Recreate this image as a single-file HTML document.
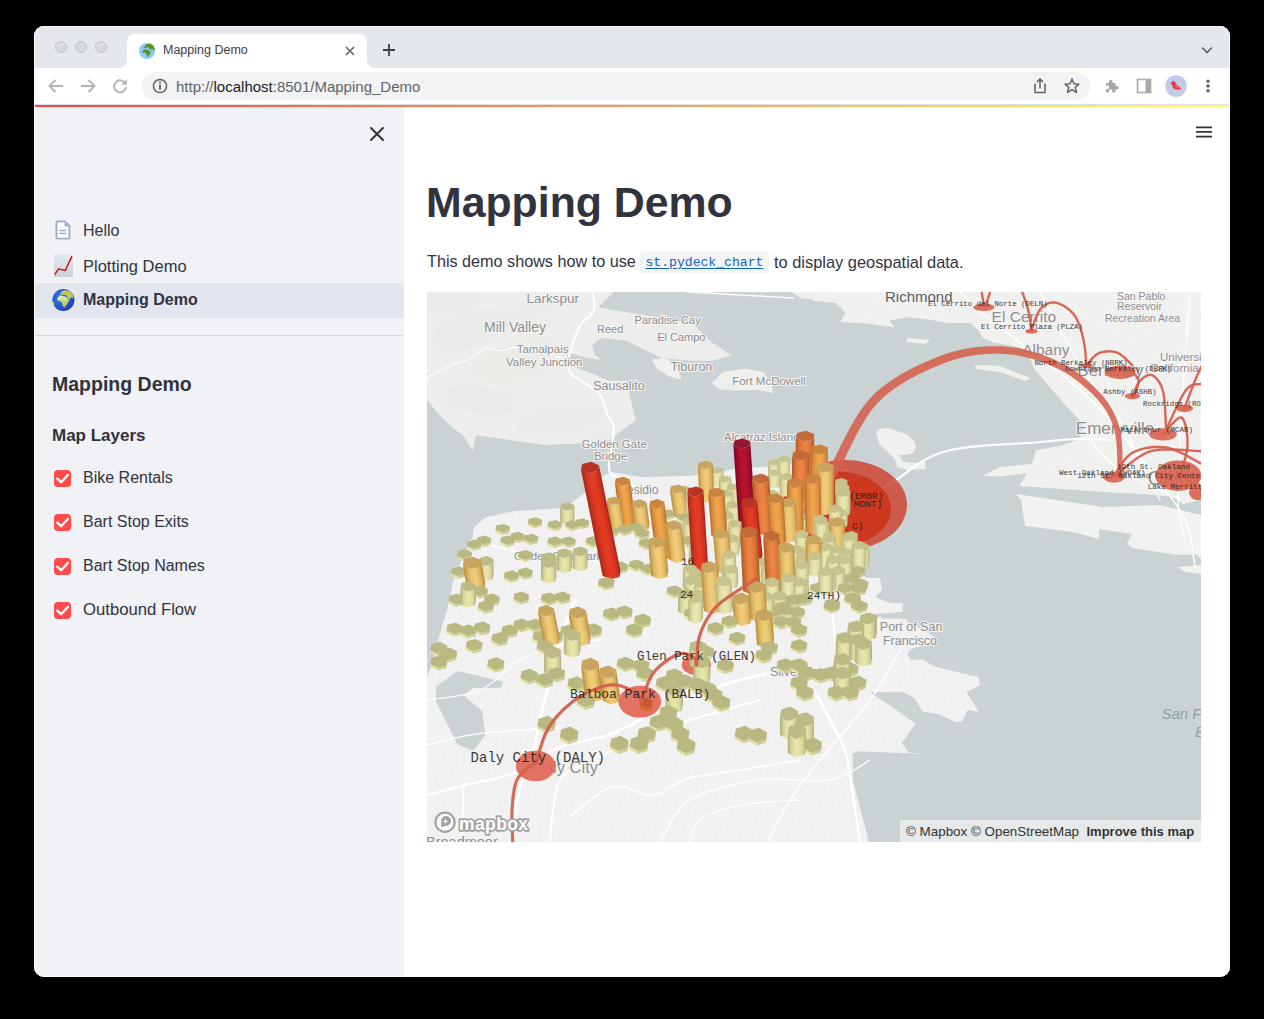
<!DOCTYPE html>
<html><head><meta charset="utf-8">
<style>
*{box-sizing:border-box;margin:0;padding:0}
html,body{width:1264px;height:1019px;overflow:hidden;background:#000;font-family:"Liberation Sans",sans-serif;position:relative}
.a{position:absolute;line-height:1;white-space:nowrap}
.b{position:absolute}
.t{color:#31333f}
.cb{position:absolute;left:54px;width:17px;height:17px;border-radius:4px;background:#ff4b4b}
.cb svg{position:absolute;left:0;top:0}
</style></head><body>
<!-- window chrome -->
<div class="b" style="left:34px;top:26px;width:1196px;height:42px;background:#e4e7eb;border-radius:10px 10px 0 0"></div>
<div class="b" style="left:117px;top:58px;width:260px;height:10px;background:#fff"></div><div class="b" style="left:34px;top:26px;width:93px;height:42px;background:#e4e7eb;border-radius:10px 0 8px 0"></div><div class="b" style="left:367px;top:26px;width:863px;height:42px;background:#e4e7eb;border-radius:0 10px 0 8px"></div><div class="b" style="left:127px;top:34px;width:240px;height:40px;background:#fff;border-radius:8px 8px 0 0"></div>
<div class="b" style="left:55px;top:41px;width:12px;height:12px;border-radius:50%;background:#d9d9db;border:1px solid #c2c2c4"></div>
<div class="b" style="left:75px;top:41px;width:12px;height:12px;border-radius:50%;background:#d9d9db;border:1px solid #c2c2c4"></div>
<div class="b" style="left:95px;top:41px;width:12px;height:12px;border-radius:50%;background:#d9d9db;border:1px solid #c2c2c4"></div>
<svg class="b" style="left:139px;top:43px" width="16" height="16" viewBox="0 0 16 16"><circle cx="8" cy="8" r="8" fill="#8ccbf5"/><path d="M3.2 8.5L4.4 7.1 6.3 6.3 9.1 7.1 11.8 9.5 10.6 11.4 9.5 13.8 8.3 13.6 7.3 11.1 6.1 9.5 4.4 9.9Z" fill="#5a9128"/><path d="M4.75 4.6L6.3 3.2 7.1 1.2 9.5 1 11.8 0.85 14.6 3 15.7 6.3 15.5 7.9 13.6 6.3 11.8 6.1 11 6.5 10.2 5.8 9.6 4.2 7.6 4.6 6.2 5.2Z" fill="#5a9128"/><circle cx="12.3" cy="7.6" r="0.7" fill="#5a9128"/></svg>
<div class="a" style="left:163px;top:44px;font-size:12.5px;color:#3c4043">Mapping Demo</div>
<svg class="b" style="left:338px;top:39px" width="24" height="24" viewBox="0 0 24 24"><path d="M8 8L16 16M16 8L8 16" stroke="#5f6368" stroke-width="1.6"/></svg>
<svg class="b" style="left:377px;top:38px" width="24" height="24" viewBox="0 0 24 24"><path d="M12 6V18M6 12H18" stroke="#3c4043" stroke-width="1.8"/></svg>
<svg class="b" style="left:1199px;top:42px" width="16" height="16" viewBox="0 0 16 16"><path d="M3 5.5L8 10.5L13 5.5" stroke="#5f6368" stroke-width="1.6" fill="none"/></svg>
<!-- toolbar -->
<div class="b" style="left:34px;top:68px;width:1196px;height:36px;background:#fff"></div>
<div class="b" style="left:142px;top:72px;width:948px;height:28px;background:#f1f3f4;border-radius:14px"></div>
<div class="a" style="left:176px;top:79px;font-size:15px;color:#5f6368">http://<span style="color:#202124">localhost</span>:8501/Mapping_Demo</div>
<svg class="b" style="left:47px;top:78px" width="18" height="16" viewBox="0 0 18 16"><path d="M16 8H3M8.5 2L2.5 8L8.5 14" stroke="#b1b4b9" stroke-width="1.9" fill="none"/></svg>
<svg class="b" style="left:79px;top:78px" width="18" height="16" viewBox="0 0 18 16"><path d="M2 8H15M9.5 2L15.5 8L9.5 14" stroke="#b1b4b9" stroke-width="1.9" fill="none"/></svg>
<svg class="b" style="left:111px;top:77px" width="18" height="18" viewBox="0 0 18 18"><path d="M14.2 6.2A6 6 0 1 0 15 10.2" stroke="#b1b4b9" stroke-width="1.9" fill="none"/><path d="M15.8 2.2V7.8H10.2Z" fill="#b1b4b9"/></svg>
<svg class="b" style="left:152px;top:78px" width="16" height="16" viewBox="0 0 16 16"><circle cx="8" cy="8" r="6.6" stroke="#5f6368" stroke-width="1.5" fill="none"/><rect x="7.1" y="6.6" width="1.8" height="5" fill="#5f6368"/><circle cx="8" cy="4.6" r="1.05" fill="#5f6368"/></svg>
<svg class="b" style="left:1032px;top:77px" width="16" height="18" viewBox="0 0 16 18"><path d="M4 7.5H3V15.5H13V7.5H12" stroke="#5f6368" stroke-width="1.5" fill="none"/><path d="M8 11.5V2.2M5 5L8 2L11 5" stroke="#5f6368" stroke-width="1.5" fill="none"/></svg>
<svg class="b" style="left:1063px;top:77px" width="18" height="18" viewBox="0 0 18 18"><path d="M9 2L11 6.8 16 7.2 12.2 10.4 13.4 15.4 9 12.7 4.6 15.4 5.8 10.4 2 7.2 7 6.8Z" stroke="#5f6368" stroke-width="1.5" fill="none" stroke-linejoin="round"/></svg>
<svg class="b" style="left:1103px;top:78px" width="18" height="16" viewBox="0 0 18 16"><path d="M3 5H6V3.5A1.8 1.8 0 0 1 9.6 3.5V5H12.5V8H14A1.8 1.8 0 0 1 14 11.6H12.5V14.5H9.4V13A1.8 1.8 0 0 0 5.8 13V14.5H3V11.2H4.4A1.8 1.8 0 0 0 4.4 7.6H3Z" fill="#a5a8ad"/></svg>
<svg class="b" style="left:1136px;top:78px" width="16" height="16" viewBox="0 0 16 16"><rect x="1.5" y="1.5" width="13" height="13" fill="none" stroke="#a5a8ad" stroke-width="1.6"/><rect x="9.5" y="1.5" width="5" height="13" fill="#a5a8ad"/></svg>
<svg class="b" style="left:1165px;top:75px" width="22" height="22" viewBox="0 0 22 22"><circle cx="11" cy="11" r="10.8" fill="#c5c9e8"/><path d="M6.5 7.2C7.5 5.8 9.5 5.8 10.4 7.4L11.2 9.6C12.6 10.8 14.6 12 16.6 14.4L14.2 14 13.6 15.2 12.4 14.2C10.6 14.8 8.6 14 7.8 12.2L7 9.2 5.4 8.4Z" fill="#e8383c"/><path d="M10.4 11C11.6 11.4 12.6 12.4 13 13.6" stroke="#ff8a70" stroke-width="1" fill="none"/></svg>
<svg class="b" style="left:1203px;top:78px" width="10" height="16" viewBox="0 0 10 16"><circle cx="5" cy="3.3" r="1.7" fill="#5f6368"/><circle cx="5" cy="8" r="1.7" fill="#5f6368"/><circle cx="5" cy="12.7" r="1.7" fill="#5f6368"/></svg>
<div class="b" style="left:34px;top:104px;width:1196px;height:1px;background:#dcdfe3"></div><div class="b" style="left:34px;top:105px;width:1196px;height:2px;background:linear-gradient(90deg,#ff4040 0%,#ffb55a 65%,#ffff70 100%)"></div>
<!-- sidebar -->
<div class="b" style="left:34px;top:107px;width:370px;height:870px;background:#f0f2f6;border-radius:0 0 0 10px"></div>
<div class="b" style="left:404px;top:107px;width:826px;height:870px;background:#fff;border-radius:0 0 10px 0"></div>
<svg class="b" style="left:369px;top:126px" width="16" height="16" viewBox="0 0 16 16"><path d="M2 2L14 14M14 2L2 14" stroke="#31333f" stroke-width="2" stroke-linecap="round"/></svg>
<div class="b" style="left:34px;top:283px;width:370px;height:35px;background:#e2e6ee"></div>
<svg class="b" style="left:55px;top:220px" width="16" height="20" viewBox="0 0 16 20"><path d="M2.6 1.4H9.8L14.4 6V17.4A1.2 1.2 0 0 1 13.2 18.6H2.6A1.2 1.2 0 0 1 1.4 17.4V2.6A1.2 1.2 0 0 1 2.6 1.4Z" fill="#fafbfd" stroke="#9cadd0" stroke-width="1.9" stroke-linejoin="round"/><path d="M9.6 1.4L14.4 6.2H9.6Z" fill="#9cadd0"/><path d="M4.3 10.5H11.2M4.3 13.5H11.2" stroke="#9cadd0" stroke-width="1.5"/></svg>
<svg class="b" style="left:54px;top:254px" width="19" height="23" viewBox="0 0 19 23"><defs><linearGradient id="cg" x1="0" y1="0" x2="0" y2="1"><stop offset="0" stop-color="#e4e9ef"/><stop offset="1" stop-color="#c9d0d7"/></linearGradient></defs><rect x="0" y="0" width="19" height="23" fill="url(#cg)"/><path d="M0.8 20.6L4.6 14.8 11.2 16.6 18 2.2" stroke="#d8f4f8" stroke-width="2.8" fill="none"/><path d="M0.8 20.6L4.6 14.8 11.2 16.6 18 2.2" stroke="#cc1414" stroke-width="1.6" fill="none"/></svg>
<svg class="b" style="left:52px;top:289px" width="24" height="24" viewBox="0 0 24 24"><defs><radialGradient id="gl" cx="0.4" cy="0.4" r="0.7"><stop offset="0" stop-color="#3b7fe6"/><stop offset="0.7" stop-color="#1f4fd0"/><stop offset="1" stop-color="#10308a"/></radialGradient><linearGradient id="af" x1="0" y1="0" x2="0" y2="1"><stop offset="0" stop-color="#f6f8c4"/><stop offset="0.45" stop-color="#b8dc88"/><stop offset="1" stop-color="#e6b038"/></linearGradient></defs><circle cx="11.4" cy="11" r="11" fill="url(#gl)"/><path d="M4.9 10L6.7 7.7 8.2 6.2 10.2 6.9 12.3 7.4 14.3 7.7 15.9 10 17.1 11.8 15.9 13.8 14.3 15.9 12.8 18.4 11.3 17.9 10.5 15.9 10 13.3 8.2 12.3 5.7 11.8Z" fill="url(#af)"/><path d="M8.2 4.4L10.2 2.1 13.3 1.3 16.4 1.8 18.9 3.1 21 6.4 21.7 9.5 19.9 8.7 18.4 8.7 17.4 11.3 15.9 9.2 14.8 6.4 12.3 5.7 9.2 5.7Z" fill="#c9c548"/><path d="M0.6 12.3L2.4 13.4 2.6 16.5 1.4 17.2Z" fill="#e0c030"/></svg>
<div class="a t" style="left:83px;top:222.5px;font-size:16px">Hello</div>
<div class="a t" style="left:83px;top:257.5px;font-size:16.5px">Plotting Demo</div>
<div class="a t" style="left:83px;top:292.2px;font-size:16px;font-weight:700">Mapping Demo</div>
<div class="b" style="left:34px;top:335px;width:370px;height:1px;background:#d5d8de"></div>
<div class="a t" style="left:52px;top:375px;font-size:19.5px;font-weight:700">Mapping Demo</div>
<div class="a t" style="left:52px;top:427.4px;font-size:17px;font-weight:700">Map Layers</div>
<div class="cb" style="top:470px"><svg width="17" height="17" viewBox="0 0 17 17"><path d="M3.2 8.6L7.2 12.2L14 4.8" stroke="#fff" stroke-width="2.4" fill="none" stroke-linecap="round" stroke-linejoin="round"/></svg></div>
<div class="cb" style="top:514px"><svg width="17" height="17" viewBox="0 0 17 17"><path d="M3.2 8.6L7.2 12.2L14 4.8" stroke="#fff" stroke-width="2.4" fill="none" stroke-linecap="round" stroke-linejoin="round"/></svg></div>
<div class="cb" style="top:558px"><svg width="17" height="17" viewBox="0 0 17 17"><path d="M3.2 8.6L7.2 12.2L14 4.8" stroke="#fff" stroke-width="2.4" fill="none" stroke-linecap="round" stroke-linejoin="round"/></svg></div>
<div class="cb" style="top:602px"><svg width="17" height="17" viewBox="0 0 17 17"><path d="M3.2 8.6L7.2 12.2L14 4.8" stroke="#fff" stroke-width="2.4" fill="none" stroke-linecap="round" stroke-linejoin="round"/></svg></div>
<div class="a t" style="left:83px;top:470.2px;font-size:16px">Bike Rentals</div>
<div class="a t" style="left:83px;top:514.2px;font-size:16px">Bart Stop Exits</div>
<div class="a t" style="left:83px;top:558.2px;font-size:16px">Bart Stop Names</div>
<div class="a t" style="left:83px;top:602px;font-size:16.7px">Outbound Flow</div>
<!-- main -->
<svg class="b" style="left:1194px;top:123px" width="20" height="18" viewBox="0 0 20 18"><path d="M2 4.3H18M2 8.95H18M2 13.6H18" stroke="#31333f" stroke-width="1.7"/></svg>
<div class="a t" style="left:426px;top:181.4px;font-size:42.8px;font-weight:700">Mapping Demo</div>
<div class="a t" style="left:427px;top:253.3px;font-size:16.2px">This demo shows how to use</div>
<div class="b" style="left:640px;top:251px;width:129px;height:22px;background:#f3f4f6;border-radius:4px"></div>
<div class="a" style="left:645.5px;top:255.5px;font-family:'Liberation Mono',monospace;font-size:13.1px;color:#0a64c8;text-decoration:underline;text-underline-offset:2px">st.pydeck_chart</div>
<div class="a t" style="left:774px;top:253.5px;font-size:16.4px">to display geospatial data.</div>
<svg class="b" style="left:427px;top:292px" width="774" height="550" viewBox="0 0 774 550">
<defs><pattern id="grid" width="6" height="5" patternUnits="userSpaceOnUse" patternTransform="rotate(-8)"><path d="M0 0H6M0 0V5" stroke="#e2e4e4" stroke-width="0.7" fill="none"/></pattern><filter id="halo" x="-10%" y="-30%" width="120%" height="160%"><feMorphology in="SourceAlpha" operator="dilate" radius="1.2" result="d"/><feFlood flood-color="#fff" flood-opacity="0.85"/><feComposite in2="d" operator="in" result="h"/><feMerge><feMergeNode in="h"/><feMergeNode in="SourceGraphic"/></feMerge></filter></defs>
<rect width="774" height="550" fill="#cad2d3"/>
<polygon points="0.0,0.0 186.8,0.0 171.5,15.3 183.7,17.8 228.1,24.8 266.1,32.5 285.0,50.5 304.6,63.4 284.7,68.9 260.2,68.6 234.5,66.1 199.0,48.4 174.5,45.9 165.3,52.7 167.8,62.8 174.5,68.0 159.2,65.8 143.9,61.2 139.3,62.8 143.9,73.5 165.9,82.1 181.9,88.8 199.6,88.8 204.5,110.8 208.8,128.6 195.9,137.8 186.8,144.5 183.7,147.6 153.1,151.6 116.3,153.1 76.5,147.0 49.0,143.3 45.9,159.2 36.7,143.9 24.5,134.7 9.2,119.4 0.0,107.2" fill="#ededeb"/>
<ellipse cx="43" cy="38" rx="40" ry="18" transform="rotate(-20 43 38)" fill="#e3e3e1" opacity="0.25"/>
<ellipse cx="93" cy="68" rx="50" ry="20" transform="rotate(-15 93 68)" fill="#e3e3e1" opacity="0.22"/>
<ellipse cx="53" cy="108" rx="35" ry="14" transform="rotate(10 53 108)" fill="#e3e3e1" opacity="0.2"/>
<ellipse cx="133" cy="128" rx="45" ry="16" transform="rotate(-10 133 128)" fill="#e3e3e1" opacity="0.18"/>
<ellipse cx="23" cy="8" rx="30" ry="12" transform="rotate(0 23 8)" fill="#e3e3e1" opacity="0.2"/>
<ellipse cx="103" cy="18" rx="30" ry="10" transform="rotate(-25 103 18)" fill="#e3e3e1" opacity="0.18"/>
<ellipse cx="173" cy="148" rx="25" ry="10" transform="rotate(0 173 148)" fill="#e3e3e1" opacity="0.15"/>
<ellipse cx="233" cy="28" rx="22" ry="8" transform="rotate(20 233 28)" fill="#e3e3e1" opacity="0.15"/>
<polygon points="225.0,67.4 238.8,65.8 251.1,76.5 254.7,87.9 241.9,84.2 229.6,76.5" fill="#efefed"/>
<polygon points="284.7,91.2 295.5,80.2 318.4,76.5 336.8,80.2 344.4,91.9 346.0,101.0 330.7,98.0 306.2,98.6 292.4,97.4" fill="#efefed"/>
<polygon points="364.3,0.0 387.0,0.0 387.0,7.7 373.5,6.1" fill="#efefed"/>
<polygon points="0.0,384.0 4.0,375.0 12.0,345.0 20.0,318.0 27.0,286.0 35.0,267.0 45.0,247.0 47.0,235.0 59.0,225.0 88.0,219.0 138.0,216.0 159.0,200.0 171.0,187.0 184.0,180.0 196.0,182.0 214.0,185.0 260.0,184.0 291.0,181.0 306.0,177.0 337.0,175.0 387.0,171.0 423.0,178.0 435.0,213.0 437.0,258.0 441.0,266.0 431.0,276.0 439.0,286.0 453.0,286.0 455.0,298.0 448.0,305.0 463.0,311.0 475.7,311.2 475.7,319.9 440.9,322.2 440.9,326.2 479.7,327.0 480.5,330.2 500.2,339.6 507.4,346.0 502.6,352.3 488.4,355.5 482.0,358.6 480.5,363.4 483.6,368.0 495.4,367.2 506.4,374.1 533.9,381.0 551.7,385.1 553.1,393.3 539.4,400.2 551.7,419.4 540.7,418.0 535.3,429.0 529.8,430.4 511.9,422.2 495.4,419.4 487.2,405.7 476.2,400.2 444.6,400.2 444.6,402.0 459.7,411.2 488.5,431.8 474.8,451.0 481.7,460.6 498.2,462.0 430.9,459.3 425.4,462.0 426.0,489.0 442.0,550.0 0.0,550.0" fill="#f2f2f2"/>
<polygon points="0.0,384.0 4.0,375.0 12.0,345.0 20.0,318.0 27.0,286.0 35.0,267.0 45.0,247.0 47.0,235.0 59.0,225.0 88.0,219.0 138.0,216.0 159.0,200.0 171.0,187.0 184.0,180.0 196.0,182.0 214.0,185.0 260.0,184.0 291.0,181.0 306.0,177.0 337.0,175.0 387.0,171.0 423.0,178.0 435.0,213.0 437.0,258.0 441.0,266.0 431.0,276.0 439.0,286.0 453.0,286.0 455.0,298.0 448.0,305.0 463.0,311.0 475.7,311.2 475.7,319.9 440.9,322.2 440.9,326.2 479.7,327.0 480.5,330.2 500.2,339.6 507.4,346.0 502.6,352.3 488.4,355.5 482.0,358.6 480.5,363.4 483.6,368.0 495.4,367.2 506.4,374.1 533.9,381.0 551.7,385.1 553.1,393.3 539.4,400.2 551.7,419.4 540.7,418.0 535.3,429.0 529.8,430.4 511.9,422.2 495.4,419.4 487.2,405.7 476.2,400.2 444.6,400.2 444.6,402.0 459.7,411.2 488.5,431.8 474.8,451.0 481.7,460.6 498.2,462.0 430.9,459.3 425.4,462.0 426.0,489.0 442.0,550.0 0.0,550.0" fill="url(#grid)" opacity="0.5"/>
<polygon points="9.2,394.4 30.6,379.1 76.5,389.8 73.5,395.9 45.9,395.9 36.7,403.6 55.1,418.9 58.2,443.4 45.9,458.7 30.6,452.6 18.4,428.1 9.2,409.7" fill="#cad2d3"/>
<polygon points="387.0,0.0 774.0,0.0 774.0,208.0 756.0,212.0 748.0,205.0 716.0,202.0 684.0,200.5 592.0,194.0 600.0,181.0 573.0,184.6 555.0,184.0 573.0,175.0 605.0,172.0 609.0,158.0 633.0,154.0 653.0,147.0 656.0,132.0 641.0,116.0 620.0,92.0 607.0,76.5 601.0,61.0 593.0,55.4 567.0,50.6 556.0,45.9 551.2,38.0 543.3,30.9 519.6,30.9 503.8,27.7 481.6,25.3 462.6,28.5 467.4,35.6 440.5,31.6 413.6,30.0 418.3,20.6 408.8,11.1 393.0,9.5 387.0,9.0" fill="#f1f1f0"/>
<polygon points="387.0,0.0 774.0,0.0 774.0,208.0 756.0,212.0 748.0,205.0 716.0,202.0 684.0,200.5 592.0,194.0 600.0,181.0 573.0,184.6 555.0,184.0 573.0,175.0 605.0,172.0 609.0,158.0 633.0,154.0 653.0,147.0 656.0,132.0 641.0,116.0 620.0,92.0 607.0,76.5 601.0,61.0 593.0,55.4 567.0,50.6 556.0,45.9 551.2,38.0 543.3,30.9 519.6,30.9 503.8,27.7 481.6,25.3 462.6,28.5 467.4,35.6 440.5,31.6 413.6,30.0 418.3,20.6 408.8,11.1 393.0,9.5 387.0,9.0" fill="url(#grid)" opacity="0.45"/>
<polygon points="589.0,202.0 676.0,215.0 732.0,213.0 774.0,223.0 774.0,267.0 769.0,262.5 748.0,262.5 705.0,256.0 700.0,251.0 705.0,242.0 672.0,237.0 672.0,247.0 646.0,240.0 598.0,234.0 594.0,208.0" fill="#f2f2f1"/>
<polygon points="751.0,275.0 774.0,273.0 774.0,282.0 758.0,280.0" fill="#f2f2f1"/>
<polygon points="449.0,141.0 453.0,137.0 462.0,136.0 481.0,143.0 488.0,150.0 489.0,156.0 486.0,161.0 479.0,163.0 472.0,163.0 475.0,169.0 485.0,171.0 498.0,170.0 499.0,177.0 481.0,178.0 470.0,175.0 468.0,167.0 453.0,153.0" fill="#f0f0ef"/>
<polygon points="548.0,73.0 573.0,74.0 603.0,86.0 598.0,89.0 573.0,80.0 549.0,77.0" fill="#f0f0ef"/>
<polygon points="481.0,46.0 503.0,48.0 498.0,52.0 479.0,50.0" fill="#f0f0ef"/>
<path d="M165.3,0.0 L165.4,0.9 L165.7,2.0 L165.9,3.4 L166.3,4.9 L166.6,6.5 L167.0,8.2 L167.2,10.0 L167.4,11.8 L167.5,13.6 L167.5,15.3 L167.3,16.9 L166.9,18.4 L166.3,19.8 L165.4,21.0 L164.4,22.2 L163.3,23.4 L162.0,24.5 L160.7,25.7 L159.3,26.8 L157.9,28.0 L156.6,29.3 L155.3,30.7 L154.1,32.1 L153.1,33.7 L152.1,35.4 L151.2,37.3 L150.3,39.3 L149.4,41.3 L148.6,43.4 L147.7,45.6 L147.0,47.7 L146.2,49.9 L145.6,52.1 L144.9,54.2 L144.4,56.2 L143.9,58.2 L143.4,60.1 L142.9,61.9 L142.3,63.8 L141.7,65.6 L141.2,67.3 L140.8,69.1 L140.5,70.8 L140.3,72.6 L140.4,74.3 L140.8,76.1 L141.4,77.8 L142.4,79.6 L143.8,81.4 L145.7,83.2 L148.0,84.9 L150.6,86.7 L153.4,88.5 L156.3,90.3 L159.2,92.1 L162.1,93.9 L164.9,95.6 L167.5,97.4 L169.7,99.2 L171.5,101.0 L173.0,102.8 L174.2,104.6 L175.2,106.5 L176.1,108.4 L176.9,110.3 L177.5,112.1 L178.0,114.0 L178.5,115.8 L179.0,117.6 L179.5,119.3 L180.0,120.9 L180.6,122.5 L181.3,123.9 L181.9,125.1 L182.6,126.2 L183.3,127.2 L183.9,128.1 L184.6,129.0 L185.1,130.0 L185.6,131.1 L186.1,132.4 L186.4,133.9 L186.7,135.7 L186.8,137.8 L186.7,140.4 L186.4,143.4 L186.0,146.7 L185.4,150.4 L184.7,154.2 L184.0,158.1 L183.4,161.9 L182.8,165.7 L182.3,169.2 L182.0,172.5 L182.0,175.3 L182.2,177.6 L182.7,179.4 L183.4,180.9 L184.3,182.0 L185.3,182.9 L186.5,183.5 L187.8,184.0 L189.1,184.4 L190.5,184.7 L191.9,185.1 L193.3,185.5 L194.7,186.1 L196.0,186.8 L197.4,187.7 L198.8,188.7 L200.4,189.7 L202.1,190.8 L203.7,191.9 L205.4,193.0 L207.0,194.0 L208.5,195.0 L209.9,195.9 L211.1,196.8 L212.2,197.5 L213.0,198.0" fill="none" stroke="#ffffff" stroke-width="2.2" stroke-linecap="round" stroke-linejoin="round" opacity="0.95" />
<path d="M260.0,0.0 L262.6,0.1 L265.8,0.3 L269.5,0.5 L273.7,0.8 L278.3,1.0 L283.1,1.3 L288.2,1.6 L293.3,1.9 L298.4,2.2 L303.5,2.5 L308.4,2.7 L313.0,3.0 L317.6,3.3 L322.6,3.5 L327.7,3.8 L332.9,4.1 L338.2,4.4 L343.3,4.7 L348.3,5.0 L353.0,5.2 L357.3,5.5 L361.1,5.7 L364.4,5.9 L367.0,6.0" fill="none" stroke="#ffffff" stroke-width="1.5" stroke-linecap="round" stroke-linejoin="round" opacity="0.95" />
<path d="M0.0,85.4 L1.2,84.8 L2.8,84.0 L4.6,83.0 L6.7,81.9 L8.9,80.7 L11.3,79.5 L13.7,78.2 L16.2,77.0 L18.6,75.8 L20.9,74.7 L23.0,73.7 L25.0,72.8 L26.8,72.1 L28.6,71.4 L30.3,70.9 L31.9,70.4 L33.6,69.9 L35.2,69.5 L36.7,69.0 L38.2,68.6 L39.7,68.2 L41.2,67.7 L42.6,67.1 L44.0,66.5 L45.4,65.8 L46.6,65.0 L47.9,64.1 L49.1,63.2 L50.2,62.2 L51.3,61.3 L52.5,60.3 L53.6,59.5 L54.8,58.7 L56.0,58.0 L57.2,57.4 L58.5,57.0 L59.9,56.8 L61.3,56.7 L62.8,56.7 L64.3,56.9 L65.8,57.1 L67.4,57.4 L68.9,57.7 L70.4,58.0 L71.9,58.3 L73.3,58.5 L74.7,58.6 L76.0,58.6 L77.2,58.5 L78.2,58.3 L79.2,58.0 L80.1,57.6 L81.0,57.3 L81.9,56.9 L82.8,56.5 L83.7,56.1 L84.7,55.9 L85.9,55.6 L87.2,55.5 L88.6,55.5 L90.2,55.6 L91.9,55.8 L93.8,56.0 L95.7,56.3 L97.7,56.7 L99.8,57.1 L101.9,57.5 L104.1,58.0 L106.3,58.5 L108.5,59.0 L110.8,59.5 L113.0,60.0 L115.3,60.6 L117.9,61.2 L120.6,61.9 L123.4,62.7 L126.2,63.5 L129.0,64.3 L131.7,65.1 L134.3,65.8 L136.7,66.5 L138.8,67.1 L140.6,67.6 L142.0,68.0" fill="none" stroke="#ffffff" stroke-width="1.1" stroke-linecap="round" stroke-linejoin="round" opacity="0.95" />
<path d="M431.0,214.0 L431.5,213.6 L432.2,213.1 L432.9,212.5 L433.7,211.9 L434.6,211.2 L435.5,210.4 L436.6,209.6 L437.7,208.8 L438.9,207.9 L440.2,207.0 L441.6,206.0 L443.0,205.0 L444.5,204.0 L445.9,203.0 L447.4,202.0 L449.0,201.0 L450.6,199.9 L452.3,198.8 L454.2,197.5 L456.2,196.2 L458.4,194.8 L460.9,193.3 L463.6,191.6 L466.6,189.8 L469.8,187.7 L473.1,185.3 L476.6,182.7 L480.3,179.9 L484.1,177.1 L488.2,174.1 L492.5,171.2 L497.1,168.4 L502.0,165.7 L507.2,163.2 L512.8,161.0 L518.7,159.2 L525.3,157.7 L532.7,156.4 L540.8,155.2 L549.3,154.3 L558.2,153.5 L567.1,152.9 L576.0,152.3 L584.7,151.8 L593.0,151.4 L600.7,150.9 L607.6,150.5 L613.6,150.0 L618.7,149.5 L623.1,149.1 L627.0,148.7 L630.3,148.4 L633.2,148.1 L635.8,147.9 L638.2,147.7 L640.5,147.5 L642.8,147.3 L645.1,147.2 L647.6,147.1 L650.3,147.0 L653.3,146.9 L656.4,146.9 L659.5,147.0 L662.7,147.1 L665.9,147.2 L668.9,147.3 L671.9,147.5 L674.7,147.6 L677.2,147.7 L679.5,147.8 L681.4,147.9 L683.0,148.0" fill="none" stroke="#ffffff" stroke-width="2.2" stroke-linecap="round" stroke-linejoin="round" opacity="0.95" />
<path d="M0.0,503.0 L2.1,502.5 L4.7,501.8 L7.7,501.0 L11.1,500.2 L14.8,499.2 L18.7,498.2 L22.8,497.2 L26.9,496.1 L31.1,495.0 L35.2,494.0 L39.2,493.0 L43.0,492.0 L46.7,491.1 L50.4,490.3 L54.1,489.5 L57.9,488.7 L61.7,488.0 L65.5,487.2 L69.2,486.3 L73.0,485.4 L76.8,484.4 L80.6,483.3 L84.3,482.0 L88.0,480.6 L91.7,479.0 L95.2,477.1 L98.8,475.1 L102.3,473.0 L105.8,470.7 L109.3,468.4 L112.8,466.1 L116.4,463.9 L120.0,461.7 L123.8,459.6 L127.6,457.6 L131.6,455.9 L135.7,454.4 L140.1,453.0 L144.6,451.7 L149.1,450.6 L153.8,449.5 L158.5,448.4 L163.1,447.4 L167.8,446.4 L172.3,445.3 L176.7,444.1 L181.0,442.9 L185.0,441.5 L188.9,440.0 L192.6,438.4 L196.3,436.7 L199.8,434.9 L203.3,433.1 L206.7,431.3 L210.0,429.4 L213.3,427.6 L216.5,425.8 L219.7,424.1 L222.9,422.5 L226.0,421.0 L229.0,419.6 L231.9,418.3 L234.5,417.0 L237.1,415.9 L239.7,414.7 L242.2,413.6 L244.8,412.5 L247.5,411.4 L250.3,410.3 L253.3,409.1 L256.5,407.8 L260.0,406.5 L263.7,405.1 L267.7,403.6 L271.8,402.0 L276.0,400.4 L280.4,398.7 L284.9,397.1 L289.5,395.5 L294.1,393.8 L298.8,392.3 L303.5,390.8 L308.3,389.3 L313.0,388.0 L317.9,386.7 L323.3,385.5 L328.9,384.3 L334.7,383.1 L340.5,381.9 L346.3,380.8 L351.9,379.8 L357.2,378.9 L362.1,378.0 L366.4,377.2 L370.1,376.6 L373.0,376.0" fill="none" stroke="#ffffff" stroke-width="2.5" stroke-linecap="round" stroke-linejoin="round" opacity="0.95" />
<path d="M144.0,523.7 L146.0,522.2 L148.5,520.2 L151.4,517.7 L154.6,514.9 L158.2,511.9 L161.9,508.9 L165.8,505.8 L169.8,502.9 L173.8,500.3 L177.7,498.0 L181.5,496.2 L185.0,495.0 L188.4,494.5 L191.9,494.5 L195.4,495.0 L198.9,495.8 L202.4,497.0 L205.9,498.2 L209.4,499.5 L212.9,500.8 L216.2,501.8 L219.6,502.6 L222.8,503.1 L226.0,503.0 L229.0,502.5 L231.9,501.6 L234.5,500.5 L237.1,499.1 L239.7,497.5 L242.2,495.9 L244.8,494.2 L247.5,492.5 L250.3,490.8 L253.3,489.3 L256.5,487.9 L260.0,486.7 L263.7,485.7 L267.7,484.8 L271.8,484.0 L276.0,483.3 L280.4,482.6 L284.9,482.0 L289.5,481.3 L294.1,480.7 L298.8,480.1 L303.5,479.4 L308.3,478.7 L313.0,478.0 L317.9,477.2 L323.3,476.3 L328.9,475.4 L334.7,474.4 L340.5,473.4 L346.3,472.5 L351.9,471.5 L357.2,470.6 L362.1,469.8 L366.4,469.1 L370.1,468.5 L373.0,468.0" fill="none" stroke="#ffffff" stroke-width="1.6" stroke-linecap="round" stroke-linejoin="round" opacity="0.95" />
<path d="M37.0,490.8 L36.9,493.8 L36.8,497.9 L36.6,502.8 L36.4,508.3 L36.2,514.3 L36.0,520.4 L35.8,526.5 L35.6,532.5 L35.4,538.0 L35.2,542.9 L35.1,547.0 L35.0,550.0" fill="none" stroke="#ffffff" stroke-width="1.5" stroke-linecap="round" stroke-linejoin="round" opacity="0.95" />
<path d="M86.0,550.0 L86.2,547.7 L86.4,544.9 L86.6,541.6 L86.9,537.8 L87.2,533.7 L87.5,529.4 L87.9,525.0 L88.3,520.4 L88.9,515.9 L89.5,511.4 L90.2,507.1 L91.0,503.0 L92.0,499.1 L93.1,495.1 L94.4,491.0 L95.8,487.0 L97.3,483.0 L98.8,478.9 L100.3,474.9 L101.9,471.0 L103.3,467.1 L104.7,463.3 L105.9,459.6 L107.0,456.0 L107.9,452.5 L108.8,449.1 L109.6,445.7 L110.3,442.4 L110.9,439.1 L111.5,435.9 L112.1,432.8 L112.6,429.7 L113.2,426.7 L113.8,423.8 L114.4,420.9 L115.0,418.0 L115.7,415.3 L116.3,412.7 L117.0,410.2 L117.6,407.8 L118.2,405.4 L118.9,403.1 L119.5,400.8 L120.2,398.4 L120.9,396.0 L121.6,393.5 L122.3,390.8 L123.0,388.0 L123.7,385.0 L124.5,381.9 L125.2,378.7 L126.0,375.4 L126.8,372.0 L127.6,368.6 L128.4,365.2 L129.2,361.7 L130.1,358.2 L131.0,354.8 L132.0,351.4 L133.0,348.0 L134.1,344.5 L135.4,340.9 L136.8,337.1 L138.2,333.2 L139.7,329.3 L141.1,325.5 L142.6,321.8 L143.9,318.4 L145.2,315.2 L146.3,312.4 L147.3,309.9 L148.0,308.0" fill="none" stroke="#ffffff" stroke-width="3.0" stroke-linecap="round" stroke-linejoin="round" opacity="0.95" />
<path d="M123.0,550.0 L123.1,548.5 L123.3,546.5 L123.4,544.2 L123.6,541.7 L123.8,538.9 L124.0,536.0 L124.3,532.9 L124.5,529.8 L124.8,526.7 L125.2,523.7 L125.6,520.7 L126.0,518.0 L126.4,515.3 L126.8,512.6 L127.1,509.8 L127.5,507.0 L127.9,504.2 L128.4,501.4 L128.9,498.6 L129.6,496.0 L130.3,493.5 L131.3,491.0 L132.4,488.8 L133.7,486.7 L135.2,484.8 L136.8,483.2 L138.6,481.7 L140.5,480.3 L142.5,479.0 L144.7,477.8 L147.0,476.7 L149.4,475.5 L152.0,474.3 L154.7,473.1 L157.5,471.8 L160.4,470.3 L163.5,468.7 L166.8,467.1 L170.2,465.4 L173.8,463.7 L177.5,462.0 L181.3,460.3 L185.2,458.5 L189.2,456.7 L193.3,455.0 L197.4,453.2 L201.6,451.4 L205.7,449.7 L209.9,448.0 L214.0,446.3 L218.2,444.5 L222.4,442.8 L226.7,441.1 L231.1,439.4 L235.6,437.7 L240.2,435.9 L244.9,434.2 L249.8,432.5 L254.8,430.7 L260.0,429.0 L265.7,427.2 L271.9,425.3 L278.6,423.3 L285.7,421.2 L292.8,419.2 L299.9,417.2 L306.8,415.3 L313.4,413.5 L319.4,411.8 L324.8,410.3 L329.4,409.0 L333.0,408.0" fill="none" stroke="#ffffff" stroke-width="2.0" stroke-linecap="round" stroke-linejoin="round" opacity="0.95" />
<path d="M387.0,398.0 L387.8,399.4 L388.8,401.3 L389.9,403.4 L391.2,405.7 L392.6,408.3 L394.1,411.1 L395.6,413.9 L397.1,416.8 L398.7,419.7 L400.2,422.6 L401.7,425.4 L403.0,428.0 L404.3,430.5 L405.7,433.0 L407.0,435.5 L408.4,438.0 L409.7,440.4 L411.1,442.9 L412.4,445.5 L413.6,448.0 L414.8,450.7 L416.0,453.4 L417.0,456.1 L418.0,459.0 L418.9,461.9 L419.6,464.9 L420.3,467.9 L420.9,470.9 L421.4,474.0 L421.9,477.2 L422.4,480.4 L422.9,483.7 L423.4,487.1 L423.9,490.7 L424.4,494.3 L425.0,498.0 L425.7,502.0 L426.4,506.5 L427.1,511.3 L427.9,516.3 L428.7,521.4 L429.4,526.4 L430.2,531.4 L430.9,536.0 L431.5,540.4 L432.1,544.2 L432.6,547.4 L433.0,550.0" fill="none" stroke="#ffffff" stroke-width="2.5" stroke-linecap="round" stroke-linejoin="round" opacity="0.95" />
<path d="M341.0,550.0 L342.0,548.0 L343.3,545.4 L344.8,542.4 L346.4,539.0 L348.2,535.4 L350.1,531.5 L352.2,527.5 L354.3,523.4 L356.4,519.3 L358.6,515.4 L360.8,511.6 L363.0,508.0 L365.2,504.7 L367.3,501.4 L369.5,498.3 L371.7,495.3 L373.9,492.2 L376.2,489.1 L378.7,486.0 L381.2,482.7 L383.9,479.4 L386.7,475.8 L389.8,472.0 L393.0,468.0 L396.5,463.7 L400.4,459.0 L404.6,454.2 L408.9,449.1 L413.4,443.9 L418.0,438.6 L422.6,433.3 L427.1,428.0 L431.4,422.8 L435.6,417.7 L439.5,412.7 L443.0,408.0 L446.3,403.3 L449.5,398.5 L452.6,393.6 L455.6,388.7 L458.4,383.9 L461.1,379.2 L463.6,374.8 L466.0,370.6 L468.1,366.8 L470.0,363.3 L471.6,360.4 L473.0,358.0" fill="none" stroke="#ffffff" stroke-width="1.5" stroke-linecap="round" stroke-linejoin="round" opacity="0.95" />
<path d="M0.0,453.0 L2.1,452.5 L4.6,451.9 L7.6,451.1 L10.9,450.2 L14.5,449.3 L18.4,448.3 L22.4,447.3 L26.6,446.3 L30.8,445.4 L34.9,444.5 L39.0,443.7 L43.0,443.0 L47.0,442.4 L51.0,441.8 L55.2,441.3 L59.5,440.9 L63.8,440.4 L68.2,440.0 L72.5,439.6 L76.8,439.3 L81.0,438.9 L85.2,438.6 L89.2,438.3 L93.0,438.0 L96.8,437.7 L100.7,437.5 L104.6,437.2 L108.6,437.0 L112.4,436.9 L116.1,436.7 L119.7,436.5 L123.0,436.4 L126.0,436.3 L128.8,436.2 L131.1,436.1 L133.0,436.0" fill="none" stroke="#ffffff" stroke-width="1.4" stroke-linecap="round" stroke-linejoin="round" opacity="0.95" />
<path d="M233.0,550.0 L234.3,547.9 L235.8,545.2 L237.5,541.9 L239.3,538.3 L241.3,534.4 L243.6,530.2 L246.1,526.1 L248.9,521.9 L252.0,517.9 L255.3,514.2 L259.0,510.9 L263.0,508.0 L267.4,505.5 L272.4,503.2 L277.7,501.0 L283.4,499.0 L289.3,497.1 L295.5,495.4 L301.8,493.8 L308.2,492.4 L314.6,491.1 L320.9,489.9 L327.0,488.9 L333.0,488.0 L338.9,487.4 L345.0,487.1 L351.2,487.1 L357.4,487.3 L363.7,487.6 L369.9,488.0 L376.0,488.4 L381.9,488.7 L387.6,488.9 L393.1,488.9 L398.2,488.6 L403.0,488.0 L407.5,487.0 L411.9,485.6 L416.0,483.9 L420.0,482.1 L423.8,480.1 L427.4,478.0 L430.7,475.9 L433.7,473.9 L436.5,472.1 L439.0,470.4 L441.2,469.0 L443.0,468.0" fill="none" stroke="#ffffff" stroke-width="1.4" stroke-linecap="round" stroke-linejoin="round" opacity="0.95" />
<path d="M0.0,408.0 L2.6,407.6 L5.9,407.1 L9.8,406.7 L14.2,406.1 L19.0,405.6 L24.0,404.9 L29.2,404.1 L34.3,403.2 L39.4,402.1 L44.3,400.9 L48.9,399.6 L53.0,398.0 L56.8,396.2 L60.4,394.0 L63.9,391.6 L67.3,388.9 L70.6,386.2 L73.8,383.3 L77.0,380.4 L80.1,377.6 L83.3,374.9 L86.5,372.4 L89.7,370.0 L93.0,368.0 L96.3,366.2 L99.7,364.5 L103.0,363.0 L106.3,361.5 L109.7,360.2 L113.0,358.9 L116.3,357.8 L119.7,356.7 L123.0,355.7 L126.3,354.7 L129.7,353.9 L133.0,353.0 L136.5,352.2 L140.1,351.5 L143.9,350.9 L147.8,350.4 L151.7,350.0 L155.5,349.6 L159.2,349.2 L162.6,348.9 L165.8,348.7 L168.6,348.4 L171.1,348.2 L173.0,348.0" fill="none" stroke="#ffffff" stroke-width="1.3" stroke-linecap="round" stroke-linejoin="round" opacity="0.95" />
<path d="M43.0,248.0 L45.4,248.6 L48.3,249.4 L51.8,250.2 L55.6,251.3 L59.8,252.4 L64.2,253.5 L68.9,254.7 L73.7,255.9 L78.6,257.0 L83.5,258.1 L88.3,259.1 L93.0,260.0 L97.6,260.8 L102.3,261.6 L107.1,262.4 L111.9,263.1 L116.8,263.8 L121.8,264.4 L126.8,265.1 L131.9,265.7 L137.1,266.3 L142.3,266.9 L147.6,267.5 L153.0,268.0 L158.7,268.5 L164.9,269.1 L171.4,269.6 L178.2,270.1 L185.0,270.5 L191.8,271.0 L198.3,271.4 L204.5,271.8 L210.2,272.2 L215.3,272.5 L219.6,272.8 L223.0,273.0" fill="none" stroke="#ffffff" stroke-width="1.2" stroke-linecap="round" stroke-linejoin="round" opacity="0.95" />
<path d="M263.0,550.0 L263.4,548.9 L263.7,547.5 L264.1,545.9 L264.5,544.0 L264.9,542.0 L265.5,539.9 L266.2,537.8 L267.1,535.6 L268.2,533.5 L269.5,531.5 L271.1,529.7 L273.0,528.0 L275.2,526.5 L277.7,525.0 L280.4,523.5 L283.4,522.1 L286.5,520.7 L289.9,519.4 L293.4,518.2 L297.1,517.0 L300.9,515.9 L304.8,514.8 L308.9,513.9 L313.0,513.0 L317.5,512.2 L322.5,511.5 L328.0,510.9 L333.7,510.4 L339.6,510.0 L345.5,509.6 L351.2,509.2 L356.7,508.9 L361.8,508.7 L366.2,508.4 L370.0,508.2 L373.0,508.0" fill="none" stroke="#ffffff" stroke-width="1.2" stroke-linecap="round" stroke-linejoin="round" opacity="0.95" />
<path d="M387.0,268.0 L387.8,269.9 L388.9,272.4 L390.1,275.2 L391.6,278.4 L393.1,281.8 L394.7,285.5 L396.3,289.3 L397.9,293.2 L399.4,297.1 L400.8,300.9 L402.0,304.5 L403.0,308.0 L403.8,311.3 L404.5,314.7 L405.0,318.0 L405.5,321.3 L405.9,324.7 L406.2,328.0 L406.5,331.3 L406.7,334.7 L407.0,338.0 L407.3,341.3 L407.6,344.7 L408.0,348.0 L408.4,351.5 L408.9,355.1 L409.4,358.9 L409.9,362.8 L410.3,366.7 L410.8,370.5 L411.3,374.2 L411.7,377.6 L412.1,380.8 L412.5,383.6 L412.8,386.1 L413.0,388.0" fill="none" stroke="#ffffff" stroke-width="1.8" stroke-linecap="round" stroke-linejoin="round" opacity="0.95" />
<path d="M453.0,325.0 L452.5,326.1 L452.0,327.5 L451.4,329.2 L450.8,331.1 L450.0,333.1 L449.2,335.2 L448.4,337.5 L447.4,339.7 L446.4,341.9 L445.4,344.1 L444.2,346.1 L443.0,348.0 L441.7,349.7 L440.2,351.4 L438.7,353.0 L437.1,354.5 L435.4,356.0 L433.6,357.6 L431.8,359.1 L430.0,360.7 L428.2,362.4 L426.4,364.1 L424.7,366.0 L423.0,368.0 L421.3,370.2 L419.4,372.8 L417.5,375.5 L415.6,378.4 L413.7,381.3 L411.8,384.2 L409.9,387.1 L408.2,389.9 L406.6,392.4 L405.2,394.6 L404.0,396.5 L403.0,398.0" fill="none" stroke="#ffffff" stroke-width="1.4" stroke-linecap="round" stroke-linejoin="round" opacity="0.95" />
<path d="M613.0,0.0 L613.9,1.8 L615.1,4.0 L616.4,6.5 L617.8,9.4 L619.4,12.5 L621.1,15.9 L622.9,19.4 L624.9,23.0 L626.8,26.8 L628.9,30.5 L630.9,34.3 L633.0,38.0 L635.1,41.8 L637.4,45.8 L639.8,49.9 L642.3,54.1 L644.8,58.5 L647.4,62.9 L650.0,67.3 L652.6,71.6 L655.3,75.9 L657.9,80.1 L660.5,84.1 L663.0,88.0 L665.5,91.7 L668.1,95.2 L670.7,98.7 L673.4,102.1 L676.0,105.4 L678.6,108.6 L681.2,111.8 L683.7,115.0 L686.2,118.2 L688.6,121.4 L690.9,124.7 L693.0,128.0 L695.0,131.3 L696.9,134.7 L698.7,138.0 L700.4,141.3 L702.0,144.7 L703.6,148.0 L705.2,151.3 L706.7,154.7 L708.2,158.0 L709.8,161.3 L711.4,164.7 L713.0,168.0 L714.7,171.5 L716.6,175.1 L718.5,178.9 L720.4,182.8 L722.3,186.7 L724.2,190.5 L726.1,194.2 L727.8,197.6 L729.4,200.8 L730.8,203.6 L732.0,206.1 L733.0,208.0" fill="none" stroke="#ffffff" stroke-width="1.5" stroke-linecap="round" stroke-linejoin="round" opacity="0.95" />
<path d="M533.0,0.0 L534.4,1.3 L536.1,3.0 L538.2,5.0 L540.4,7.2 L542.9,9.6 L545.5,12.1 L548.3,14.8 L551.1,17.5 L554.1,20.2 L557.1,22.9 L560.1,25.5 L563.0,28.0 L566.0,30.4 L569.0,32.8 L572.1,35.1 L575.2,37.5 L578.5,39.9 L581.8,42.2 L585.1,44.7 L588.6,47.2 L592.1,49.8 L595.6,52.4 L599.3,55.1 L603.0,58.0 L606.9,61.0 L611.0,64.2 L615.3,67.5 L619.7,71.0 L624.1,74.5 L628.6,78.0 L633.1,81.5 L637.4,85.0 L641.7,88.5 L645.7,91.8 L649.5,95.0 L653.0,98.0 L656.2,100.8 L659.0,103.3 L661.7,105.7 L664.1,108.0 L666.4,110.2 L668.6,112.4 L670.8,114.6 L673.0,116.9 L675.3,119.3 L677.7,122.0 L680.2,124.8 L683.0,128.0 L686.0,131.5 L689.1,135.2 L692.4,139.1 L695.8,143.2 L699.2,147.4 L702.7,151.8 L706.2,156.2 L709.7,160.6 L713.1,165.0 L716.5,169.4 L719.8,173.8 L723.0,178.0 L726.2,182.2 L729.4,186.4 L732.7,190.6 L736.0,194.8 L739.2,199.0 L742.4,203.2 L745.4,207.4 L748.4,211.6 L751.1,215.7 L753.7,219.8 L756.0,223.9 L758.0,228.0 L759.7,232.2 L761.2,236.6 L762.5,241.1 L763.6,245.6 L764.4,250.2 L765.2,254.6 L765.8,258.9 L766.3,262.9 L766.8,266.6 L767.2,269.9 L767.6,272.7 L768.0,275.0" fill="none" stroke="#ffffff" stroke-width="1.6" stroke-linecap="round" stroke-linejoin="round" opacity="0.95" />
<path d="M763.0,0.0 L762.8,3.2 L762.5,7.3 L762.1,11.9 L761.7,17.2 L761.3,22.9 L760.8,29.0 L760.3,35.4 L759.9,41.9 L759.4,48.6 L758.9,55.2 L758.4,61.7 L758.0,68.0 L757.6,74.3 L757.1,80.9 L756.7,87.6 L756.2,94.5 L755.8,101.5 L755.3,108.5 L754.9,115.5 L754.4,122.4 L754.0,129.1 L753.7,135.7 L753.3,142.0 L753.0,148.0 L752.7,153.8 L752.4,159.4 L752.1,164.9 L751.8,170.2 L751.5,175.4 L751.2,180.5 L751.0,185.4 L750.9,190.2 L750.8,194.9 L750.8,199.4 L750.8,203.8 L751.0,208.0 L751.3,212.2 L751.7,216.3 L752.3,220.3 L752.9,224.3 L753.6,228.1 L754.4,231.8 L755.1,235.2 L755.9,238.4 L756.5,241.3 L757.1,243.9 L757.6,246.1 L758.0,248.0" fill="none" stroke="#ffffff" stroke-width="1.3" stroke-linecap="round" stroke-linejoin="round" opacity="0.95" />
<path d="M663.0,148.0 L664.4,149.4 L665.9,151.3 L667.7,153.4 L669.7,155.8 L671.9,158.4 L674.2,161.1 L676.9,164.0 L679.7,166.9 L682.7,169.8 L685.9,172.7 L689.4,175.4 L693.0,178.0 L697.1,180.6 L702.0,183.3 L707.3,186.2 L713.0,189.1 L718.9,192.0 L724.9,194.9 L730.7,197.6 L736.3,200.2 L741.5,202.6 L746.1,204.7 L750.0,206.6 L753.0,208.0" fill="none" stroke="#ffffff" stroke-width="1.2" stroke-linecap="round" stroke-linejoin="round" opacity="0.95" />
<text x="99.5" y="10.7" font-family='"Liberation Sans",sans-serif' font-size="13.5" font-weight="400" fill="#8e8e8e" stroke="#f4f4f4" stroke-width="2.2" paint-order="stroke" stroke-linejoin="round" letter-spacing="0" opacity="1">Larkspur</text>
<text x="57.0" y="39.8" font-family='"Liberation Sans",sans-serif' font-size="14" font-weight="400" fill="#8e8e8e" stroke="#f4f4f4" stroke-width="2.2" paint-order="stroke" stroke-linejoin="round" letter-spacing="0" opacity="1">Mill Valley</text>
<text x="170.0" y="41.0" font-family='"Liberation Sans",sans-serif' font-size="11" font-weight="400" fill="#8e8e8e" stroke="#f4f4f4" stroke-width="2.2" paint-order="stroke" stroke-linejoin="round" letter-spacing="0" opacity="1">Reed</text>
<text x="207.6" y="31.8" font-family='"Liberation Sans",sans-serif' font-size="11" font-weight="400" fill="#8e8e8e" stroke="#f4f4f4" stroke-width="2.2" paint-order="stroke" stroke-linejoin="round" letter-spacing="0" opacity="1">Paradise Cay</text>
<text x="230.2" y="48.7" font-family='"Liberation Sans",sans-serif' font-size="11" font-weight="400" fill="#8e8e8e" stroke="#f4f4f4" stroke-width="2.2" paint-order="stroke" stroke-linejoin="round" letter-spacing="0" opacity="1">El Campo</text>
<text x="89.7" y="60.9" font-family='"Liberation Sans",sans-serif' font-size="11.5" font-weight="400" fill="#8e8e8e" stroke="#f4f4f4" stroke-width="2.2" paint-order="stroke" stroke-linejoin="round" letter-spacing="0" opacity="1">Tamalpais</text>
<text x="79.0" y="74.4" font-family='"Liberation Sans",sans-serif' font-size="11.5" font-weight="400" fill="#8e8e8e" stroke="#f4f4f4" stroke-width="2.2" paint-order="stroke" stroke-linejoin="round" letter-spacing="0" opacity="1">Valley Junction</text>
<text x="243.4" y="79.0" font-family='"Liberation Sans",sans-serif' font-size="12.5" font-weight="400" fill="#8e8e8e" stroke="#f4f4f4" stroke-width="2.2" paint-order="stroke" stroke-linejoin="round" letter-spacing="0" opacity="1">Tiburon</text>
<text x="166.2" y="98.0" font-family='"Liberation Sans",sans-serif' font-size="12.5" font-weight="400" fill="#8e8e8e" stroke="#f4f4f4" stroke-width="2.2" paint-order="stroke" stroke-linejoin="round" letter-spacing="0" opacity="1">Sausalito</text>
<text x="305.2" y="93.1" font-family='"Liberation Sans",sans-serif' font-size="11.5" font-weight="400" fill="#8e8e8e" stroke="#f4f4f4" stroke-width="2.2" paint-order="stroke" stroke-linejoin="round" letter-spacing="0" opacity="1">Fort McDowell</text>
<text x="154.6" y="156.1" font-family='"Liberation Sans",sans-serif' font-size="11.5" font-weight="400" fill="#8e8e8e" stroke="#f4f4f4" stroke-width="2.2" paint-order="stroke" stroke-linejoin="round" letter-spacing="0" opacity="1">Golden Gate</text>
<text x="166.9" y="168.4" font-family='"Liberation Sans",sans-serif' font-size="11.5" font-weight="400" fill="#8e8e8e" stroke="#f4f4f4" stroke-width="2.2" paint-order="stroke" stroke-linejoin="round" letter-spacing="0" opacity="1">Bridge</text>
<text x="297.0" y="149.1" font-family='"Liberation Sans",sans-serif' font-size="11.5" font-weight="400" fill="#8e8e8e" stroke="#f4f4f4" stroke-width="2.2" paint-order="stroke" stroke-linejoin="round" letter-spacing="0" opacity="1">Alcatraz Island</text>
<text x="188.0" y="201.5" font-family='"Liberation Sans",sans-serif' font-size="12" font-weight="400" fill="#8e8e8e" stroke="#f4f4f4" stroke-width="2.2" paint-order="stroke" stroke-linejoin="round" letter-spacing="0" opacity="1">Presidio</text>
<text x="690.0" y="7.7" font-family='"Liberation Sans",sans-serif' font-size="10.5" font-weight="400" fill="#8e8e8e" stroke="#f4f4f4" stroke-width="2.2" paint-order="stroke" stroke-linejoin="round" letter-spacing="0" opacity="1">San Pablo</text>
<text x="690.0" y="18.4" font-family='"Liberation Sans",sans-serif' font-size="10.5" font-weight="400" fill="#8e8e8e" stroke="#f4f4f4" stroke-width="2.2" paint-order="stroke" stroke-linejoin="round" letter-spacing="0" opacity="1">Reservoir</text>
<text x="677.9" y="29.7" font-family='"Liberation Sans",sans-serif' font-size="10.5" font-weight="400" fill="#8e8e8e" stroke="#f4f4f4" stroke-width="2.2" paint-order="stroke" stroke-linejoin="round" letter-spacing="0" opacity="1">Recreation Area</text>
<text x="564.6" y="29.7" font-family='"Liberation Sans",sans-serif' font-size="15.5" font-weight="400" fill="#8e8e8e" stroke="#f4f4f4" stroke-width="2.2" paint-order="stroke" stroke-linejoin="round" letter-spacing="0" opacity="1">El Cerrito</text>
<text x="595.2" y="62.8" font-family='"Liberation Sans",sans-serif' font-size="15.5" font-weight="400" fill="#8e8e8e" stroke="#f4f4f4" stroke-width="2.2" paint-order="stroke" stroke-linejoin="round" letter-spacing="0" opacity="1">Albany</text>
<text x="650.3" y="84.2" font-family='"Liberation Sans",sans-serif' font-size="17" font-weight="400" fill="#8e8e8e" stroke="#f4f4f4" stroke-width="2.2" paint-order="stroke" stroke-linejoin="round" letter-spacing="0" opacity="1">Berkeley</text>
<text x="733.0" y="68.9" font-family='"Liberation Sans",sans-serif' font-size="11.5" font-weight="400" fill="#8e8e8e" stroke="#f4f4f4" stroke-width="2.2" paint-order="stroke" stroke-linejoin="round" letter-spacing="0" opacity="1">University of</text>
<text x="723.0" y="80.2" font-family='"Liberation Sans",sans-serif' font-size="11.5" font-weight="400" fill="#8e8e8e" stroke="#f4f4f4" stroke-width="2.2" paint-order="stroke" stroke-linejoin="round" letter-spacing="0" opacity="1">California</text>
<text x="648.8" y="142.4" font-family='"Liberation Sans",sans-serif' font-size="17" font-weight="400" fill="#8e8e8e" stroke="#f4f4f4" stroke-width="2.2" paint-order="stroke" stroke-linejoin="round" letter-spacing="0" opacity="1">Emeryville</text>
<text x="720.7" y="192.9" font-family='"Liberation Sans",sans-serif' font-size="20" font-weight="400" fill="#8e8e8e" stroke="#f4f4f4" stroke-width="2.2" paint-order="stroke" stroke-linejoin="round" letter-spacing="0" opacity="1">Oakland</text>
<text x="452.8" y="339.3" font-family='"Liberation Sans",sans-serif' font-size="12.5" font-weight="400" fill="#8e8e8e" stroke="#f4f4f4" stroke-width="2.2" paint-order="stroke" stroke-linejoin="round" letter-spacing="0" opacity="1">Port of San</text>
<text x="455.9" y="353.1" font-family='"Liberation Sans",sans-serif' font-size="12.5" font-weight="400" fill="#8e8e8e" stroke="#f4f4f4" stroke-width="2.2" paint-order="stroke" stroke-linejoin="round" letter-spacing="0" opacity="1">Francisco</text>
<text x="342.9" y="383.7" font-family='"Liberation Sans",sans-serif' font-size="12.5" font-weight="400" fill="#8e8e8e" stroke="#f4f4f4" stroke-width="2.2" paint-order="stroke" stroke-linejoin="round" letter-spacing="0" opacity="1">Silver Terrace</text>
<text x="105.0" y="481.0" font-family='"Liberation Sans",sans-serif' font-size="16.5" font-weight="400" fill="#8e8e8e" stroke="#f4f4f4" stroke-width="2.2" paint-order="stroke" stroke-linejoin="round" letter-spacing="0" opacity="1">Daly City</text>
<text x="-1.0" y="555.0" font-family='"Liberation Sans",sans-serif' font-size="14.5" font-weight="400" fill="#8e8e8e" stroke="#f4f4f4" stroke-width="2.2" paint-order="stroke" stroke-linejoin="round" letter-spacing="0" opacity="1">Broadmoor</text>
<text x="87.0" y="268.0" font-family='"Liberation Sans",sans-serif' font-size="11" font-weight="400" fill="#8e8e8e" stroke="#f4f4f4" stroke-width="2.2" paint-order="stroke" stroke-linejoin="round" letter-spacing="0" opacity="1">Golden Gate Park</text>
<text x="458.0" y="9.8" font-family='"Liberation Sans",sans-serif' font-size="15" font-weight="400" fill="#5e5e5e" stroke="#f4f4f4" stroke-width="2.2" paint-order="stroke" stroke-linejoin="round" letter-spacing="0" opacity="1">Richmond</text>
<text x="734.5" y="426.6" font-family='"Liberation Sans",sans-serif' font-size="15" font-weight="400" fill="#8fa0a3" font-style="italic" letter-spacing="0" opacity="1">San Fr</text>
<text x="768.0" y="445.0" font-family='"Liberation Sans",sans-serif' font-size="15" font-weight="400" fill="#8fa0a3" font-style="italic" letter-spacing="0" opacity="1">B</text>
<ellipse cx="418.0" cy="213.0" rx="62" ry="45" fill="#cd3a26" opacity="0.78"/>
<ellipse cx="409.0" cy="217.0" rx="55" ry="38" fill="#cc3820" opacity="1"/>
<ellipse cx="108.7" cy="474.0" rx="19.9" ry="15.3" fill="#e06a5a" opacity="0.95"/>
<ellipse cx="212.8" cy="409.7" rx="21.4" ry="15.9" fill="#e06a5a" opacity="0.95"/>
<ellipse cx="269.4" cy="373.0" rx="14.7" ry="10" fill="#e06a5a" opacity="0.95"/>
<ellipse cx="556.9" cy="15.3" rx="10.7" ry="3.7" fill="#d9604c" opacity="0.9"/>
<ellipse cx="604.4" cy="39.2" rx="6.1" ry="2.4" fill="#d9604c" opacity="0.9"/>
<ellipse cx="693.2" cy="80.2" rx="15.3" ry="6.7" fill="#d9604c" opacity="0.9"/>
<ellipse cx="705.4" cy="104.1" rx="7.7" ry="3.1" fill="#d9604c" opacity="0.9"/>
<ellipse cx="757.5" cy="116.3" rx="8.6" ry="3.7" fill="#d9604c" opacity="0.9"/>
<ellipse cx="736.0" cy="142.4" rx="13.8" ry="6.1" fill="#d9604c" opacity="0.9"/>
<ellipse cx="687.0" cy="185.2" rx="10.7" ry="5.5" fill="#d9604c" opacity="0.9"/>
<ellipse cx="751.3" cy="183.7" rx="23.0" ry="15.3" fill="#d9604c" opacity="0.9"/>
<ellipse cx="771.2" cy="200.5" rx="9.2" ry="7.7" fill="#d9604c" opacity="0.9"/>
<ellipse cx="659.5" cy="73.5" rx="6.1" ry="2.4" fill="#d9604c" opacity="0.9"/>
<polygon points="403.8,201.5 404.0,200.7 404.2,199.7 404.4,198.8 404.5,198.0 404.6,197.2 404.7,196.4 404.9,195.6 405.1,194.7 405.4,193.6 405.8,192.3 406.3,190.9 406.9,189.3 407.7,187.4 408.6,185.3 409.8,182.9 411.2,180.1 412.8,177.0 414.6,173.3 416.5,169.3 418.5,165.0 420.7,160.4 423.0,155.7 425.4,150.8 427.9,145.8 430.5,140.8 433.3,135.9 436.1,131.0 439.0,126.3 442.0,121.8 445.1,117.6 448.2,113.7 451.3,110.2 454.7,107.0 458.2,103.8 462.0,100.8 465.9,97.8 469.9,95.0 474.1,92.3 478.4,89.6 482.7,87.1 487.1,84.7 491.5,82.5 495.9,80.3 500.3,78.2 504.6,76.3 508.9,74.5 513.0,72.8 517.0,71.2 520.9,69.8 524.8,68.5 528.6,67.3 532.5,66.2 536.3,65.3 540.0,64.5 543.8,63.8 547.5,63.2 551.2,62.7 554.9,62.4 558.6,62.1 562.2,61.9 565.8,61.8 569.4,61.8 573.0,61.8 576.6,61.9 580.1,62.2 583.6,62.5 587.2,63.0 590.7,63.6 594.2,64.2 597.7,65.0 601.2,65.9 604.7,66.8 608.1,67.8 611.5,68.9 614.8,70.1 618.1,71.3 621.3,72.6 624.4,73.9 627.4,75.2 630.4,76.6 633.3,78.0 636.1,79.5 638.9,81.1 641.6,82.8 644.3,84.6 646.9,86.4 649.5,88.3 652.1,90.2 654.5,92.2 656.9,94.2 659.2,96.2 661.4,98.2 663.6,100.2 665.6,102.2 667.5,104.2 669.4,106.2 671.1,108.1 672.7,110.0 674.3,111.9 675.7,113.8 677.0,115.7 678.3,117.6 679.5,119.5 680.6,121.4 681.6,123.4 682.6,125.4 683.5,127.4 684.4,129.5 685.2,131.6 686.0,133.9 686.7,136.2 687.4,138.5 688.0,141.0 688.5,143.7 688.9,146.7 689.3,149.8 689.6,153.0 689.8,156.3 690.0,159.6 690.1,162.9 690.2,166.2 690.3,169.4 690.4,172.4 690.4,175.2 690.5,177.8 690.5,180.1 690.6,182.2 690.7,183.8 695.7,183.6 695.6,182.0 695.6,180.0 695.6,177.7 695.6,175.1 695.6,172.3 695.6,169.3 695.5,166.1 695.5,162.8 695.4,159.4 695.2,156.0 695.0,152.6 694.7,149.2 694.4,146.0 694.0,142.8 693.5,139.8 692.8,137.1 692.1,134.6 691.4,132.1 690.6,129.7 689.8,127.4 688.9,125.1 687.9,122.9 686.9,120.7 685.8,118.6 684.6,116.5 683.4,114.4 682.1,112.3 680.6,110.2 679.1,108.2 677.5,106.1 675.8,104.1 674.0,102.0 672.1,99.9 670.1,97.8 668.0,95.7 665.8,93.5 663.5,91.4 661.1,89.3 658.7,87.2 656.1,85.1 653.5,83.0 650.8,81.0 648.1,79.1 645.2,77.2 642.4,75.4 639.4,73.6 636.4,72.0 633.4,70.4 630.3,68.9 627.2,67.5 623.9,66.1 620.6,64.7 617.2,63.4 613.8,62.2 610.3,61.0 606.7,59.9 603.1,58.9 599.4,57.9 595.7,57.1 592.0,56.3 588.3,55.7 584.5,55.2 580.8,54.7 577.0,54.5 573.3,54.3 569.5,54.2 565.7,54.2 561.9,54.2 558.1,54.4 554.2,54.7 550.4,55.0 546.4,55.5 542.5,56.1 538.5,56.8 534.5,57.6 530.5,58.5 526.5,59.6 522.4,60.8 518.3,62.1 514.2,63.6 510.0,65.2 505.7,66.9 501.3,68.7 496.9,70.7 492.3,72.8 487.8,75.0 483.2,77.3 478.6,79.8 474.1,82.3 469.6,85.1 465.2,87.9 460.8,90.9 456.7,94.0 452.6,97.2 448.7,100.6 445.1,104.2 441.5,108.0 438.1,112.2 434.8,116.7 431.5,121.4 428.4,126.4 425.5,131.4 422.6,136.5 419.9,141.6 417.3,146.7 414.8,151.6 412.4,156.4 410.2,161.0 408.1,165.3 406.2,169.2 404.4,172.8 402.8,175.9 401.4,178.6 400.1,181.2 399.0,183.5 398.1,185.6 397.3,187.5 396.7,189.2 396.2,190.8 395.7,192.2 395.4,193.5 395.2,194.6 395.0,195.5 394.8,196.4 394.7,197.0 394.5,197.5 394.4,197.9 394.2,198.5" fill="#d4604c" opacity="0.88"/>
<g>
<polygon points="341.1,171.6 346.4,173.6 352.5,172.3 353.3,168.9 353.3,182.6 352.5,186.0 346.4,187.3 341.1,185.3" fill="url(#g0)"/><polygon points="348.0,166.9 341.9,168.2 341.1,171.6 346.4,173.6 352.5,172.3 353.3,168.9" fill="#c6c38d"/>
<polygon points="350.9,168.5 356.2,170.6 362.3,169.3 363.1,165.9 363.1,185.7 362.3,189.0 356.2,190.4 350.9,188.3" fill="url(#g1)"/><polygon points="357.8,163.8 351.7,165.2 350.9,168.5 356.2,170.6 362.3,169.3 363.1,165.9" fill="#c6c38d"/>
<polygon points="284.1,179.5 289.5,181.6 295.7,180.3 296.5,176.8 296.5,190.3 295.7,193.7 289.5,195.1 284.1,193.0" fill="url(#g2)"/><polygon points="291.1,174.7 284.9,176.1 284.1,179.5 289.5,181.6 295.7,180.3 296.5,176.8" fill="#c6c38d"/>
<polygon points="341.0,182.2 346.4,184.3 352.6,182.9 353.4,179.5 353.4,191.6 352.6,195.1 346.4,196.4 341.0,194.3" fill="url(#g3)"/><polygon points="348.0,177.4 341.8,178.7 341.0,182.2 346.4,184.3 352.6,182.9 353.4,179.5" fill="#c6c38d"/>
<polygon points="291.8,188.3 297.3,190.5 303.5,189.1 304.4,185.5 304.4,197.3 303.5,200.8 297.3,202.2 291.8,200.1" fill="url(#g4)"/><polygon points="298.9,183.4 292.7,184.8 291.8,188.3 297.3,190.5 303.5,189.1 304.4,185.5" fill="#c6c38d"/>
<polygon points="250.0,199.2 256.0,201.5 256.0,203.6 250.0,201.3" fill="#e3e1a2"/><polygon points="256.0,201.5 262.8,200.0 262.8,202.1 256.0,203.6" fill="#cfcd94"/><polygon points="262.8,200.0 263.8,196.1 263.8,198.2 262.8,202.1" fill="#a9a774"/><polygon points="257.8,193.8 251.0,195.3 250.0,199.2 256.0,201.5 262.8,200.0 263.8,196.1" fill="#b9b881"/>
<polygon points="407.9,191.1 413.4,193.2 419.6,191.8 420.5,188.3 420.5,199.1 419.6,202.7 413.4,204.1 407.9,201.9" fill="url(#g5)"/><polygon points="415.0,186.1 408.8,187.5 407.9,191.1 413.4,193.2 419.6,191.8 420.5,188.3" fill="#c6c38d"/>
<polygon points="352.7,185.7 358.2,187.9 364.4,186.5 365.3,182.9 365.3,199.9 364.4,203.4 358.2,204.8 352.7,202.7" fill="url(#g6)"/><polygon points="359.8,180.8 353.6,182.2 352.7,185.7 358.2,187.9 364.4,186.5 365.3,182.9" fill="#c6c38d"/>
<polygon points="368.8,146.1 376.8,149.3 386.0,147.2 387.2,141.9 387.2,203.9 386.0,209.2 376.8,211.3 368.8,208.1" fill="url(#g7)"/><polygon points="379.2,138.7 370.0,140.8 368.8,146.1 376.8,149.3 386.0,147.2 387.2,141.9" fill="#c26a38"/>
<polygon points="299.7,196.3 305.2,198.5 311.5,197.1 312.3,193.5 312.3,204.9 311.5,208.5 305.2,209.9 299.7,207.7" fill="url(#g8)"/><polygon points="306.8,191.3 300.5,192.7 299.7,196.3 305.2,198.5 311.5,197.1 312.3,193.5" fill="#c6c38d"/>
<polygon points="271.0,174.7 277.5,177.3 285.0,175.6 286.0,171.3 287.0,204.8 286.0,209.1 278.5,210.8 272.0,208.2" fill="url(#g9)"/><polygon points="279.5,168.7 272.0,170.4 271.0,174.7 277.5,177.3 285.0,175.6 286.0,171.3" fill="#c9a45f"/>
<polygon points="409.9,196.9 415.4,199.1 421.7,197.7 422.5,194.0 422.5,205.1 421.7,208.7 415.4,210.2 409.9,208.0" fill="url(#g10)"/><polygon points="417.0,191.8 410.7,193.3 409.9,196.9 415.4,199.1 421.7,197.7 422.5,194.0" fill="#c6c38d"/>
<polygon points="365.1,165.3 372.6,168.3 381.2,166.3 382.3,161.3 381.6,212.0 380.5,217.0 371.9,219.0 364.4,216.0" fill="url(#g11)"/><polygon points="374.8,158.3 366.2,160.3 365.1,165.3 372.6,168.3 381.2,166.3 382.3,161.3" fill="#c26a38"/>
<polygon points="383.8,159.4 391.3,162.4 399.9,160.4 401.0,155.4 399.6,216.0 398.5,221.0 389.9,223.0 382.4,220.0" fill="url(#g12)"/><polygon points="393.5,152.4 384.9,154.4 383.8,159.4 391.3,162.4 399.9,160.4 401.0,155.4" fill="#c8843f"/>
<polygon points="389.6,177.0 397.1,180.0 405.7,178.0 406.8,173.0 406.8,216.3 405.7,221.3 397.1,223.3 389.6,220.3" fill="url(#g13)"/><polygon points="399.3,170.0 390.7,172.0 389.6,177.0 397.1,180.0 405.7,178.0 406.8,173.0" fill="#c9a45f"/>
<polygon points="338.8,203.0 344.4,205.3 350.8,203.8 351.6,200.1 351.6,217.8 350.8,221.5 344.4,223.0 338.8,220.7" fill="url(#g14)"/><polygon points="346.0,197.8 339.6,199.3 338.8,203.0 344.4,205.3 350.8,203.8 351.6,200.1" fill="#c6c38d"/>
<polygon points="293.7,202.9 299.3,205.1 305.7,203.7 306.5,199.9 306.5,217.9 305.7,221.7 299.3,223.2 293.7,220.9" fill="url(#g15)"/><polygon points="300.9,197.6 294.5,199.1 293.7,202.9 299.3,205.1 305.7,203.7 306.5,199.9" fill="#c6c38d"/>
<polygon points="251.2,219.2 257.3,221.7 257.3,223.9 251.2,221.4" fill="#e3e1a2"/><polygon points="257.3,221.7 264.3,220.1 264.3,222.3 257.3,223.9" fill="#cfcd94"/><polygon points="264.3,220.1 265.2,216.0 265.2,218.2 264.3,222.3" fill="#a9a774"/><polygon points="259.1,213.5 252.1,215.1 251.2,219.2 257.3,221.7 264.3,220.1 265.2,216.0" fill="#b9b881"/>
<polygon points="408.4,202.3 414.9,205.0 422.4,203.3 423.4,198.9 423.4,218.5 422.4,222.9 414.9,224.6 408.4,221.9" fill="url(#g16)"/><polygon points="416.9,196.2 409.4,197.9 408.4,202.3 414.9,205.0 422.4,203.3 423.4,198.9" fill="#c6c38d"/>
<polygon points="223.7,221.1 229.9,223.6 229.9,225.9 223.7,223.3" fill="#e3e1a2"/><polygon points="229.9,223.6 236.9,222.0 236.9,224.2 229.9,225.9" fill="#cfcd94"/><polygon points="236.9,222.0 237.9,217.9 237.9,220.1 236.9,224.2" fill="#a9a774"/><polygon points="231.7,215.3 224.7,217.0 223.7,221.1 229.9,223.6 236.9,222.0 237.9,217.9" fill="#b9b881"/>
<polygon points="242.9,198.7 249.4,201.4 256.9,199.7 257.9,195.3 261.8,220.9 260.8,225.3 253.3,227.0 246.8,224.3" fill="url(#g17)"/><polygon points="251.4,192.6 243.9,194.3 242.9,198.7 249.4,201.4 256.9,199.7 257.9,195.3" fill="#c9a45f"/>
<polygon points="380.1,207.6 385.6,209.9 392.1,208.4 392.9,204.6 392.9,221.2 392.1,225.0 385.6,226.5 380.1,224.2" fill="url(#g18)"/><polygon points="387.4,202.3 380.9,203.8 380.1,207.6 385.6,209.9 392.1,208.4 392.9,204.6" fill="#c6c38d"/>
<polygon points="233.5,223.1 239.7,225.7 239.7,227.9 233.5,225.4" fill="#e3e1a2"/><polygon points="239.7,225.7 246.7,224.0 246.7,226.2 239.7,227.9" fill="#cfcd94"/><polygon points="246.7,224.0 247.7,219.8 247.7,222.1 246.7,226.2" fill="#a9a774"/><polygon points="241.5,217.3 234.5,219.0 233.5,223.1 239.7,225.7 246.7,224.0 247.7,219.8" fill="#b9b881"/>
<polygon points="364.3,212.6 369.9,214.9 376.4,213.4 377.3,209.6 377.3,224.0 376.4,227.9 369.9,229.4 364.3,227.0" fill="url(#g19)"/><polygon points="371.7,207.2 365.2,208.7 364.3,212.6 369.9,214.9 376.4,213.4 377.3,209.6" fill="#c6c38d"/>
<polygon points="258.3,211.9 263.9,214.2 270.4,212.7 271.3,208.9 271.3,224.7 270.4,228.6 263.9,230.1 258.3,227.7" fill="url(#g20)"/><polygon points="265.7,206.5 259.2,208.0 258.3,211.9 263.9,214.2 270.4,212.7 271.3,208.9" fill="#c6c38d"/>
<polygon points="249.8,226.6 256.0,229.2 256.0,231.4 249.8,228.9" fill="#e3e1a2"/><polygon points="256.0,229.2 263.1,227.5 263.1,229.8 256.0,231.4" fill="#cfcd94"/><polygon points="263.1,227.5 264.0,223.3 264.0,225.6 263.1,229.8" fill="#a9a774"/><polygon points="257.8,220.8 250.7,222.4 249.8,226.6 256.0,229.2 263.1,227.5 264.0,223.3" fill="#b9b881"/>
<polygon points="133.2,216.3 139.4,218.8 146.4,217.2 147.4,212.9 147.4,227.1 146.4,231.3 139.4,233.0 133.2,230.5" fill="url(#g21)"/><polygon points="141.2,210.4 134.2,212.1 133.2,216.3 139.4,218.8 146.4,217.2 147.4,212.9" fill="#bdbb85"/>
<polygon points="383.9,222.3 389.5,224.7 396.1,223.1 396.9,219.2 396.9,229.9 396.1,233.8 389.5,235.4 383.9,233.0" fill="url(#g22)"/><polygon points="391.3,216.8 384.7,218.4 383.9,222.3 389.5,224.7 396.1,223.1 396.9,219.2" fill="#c6c38d"/>
<polygon points="100.8,231.2 107.1,233.8 107.1,236.0 100.8,233.4" fill="#e3e1a2"/><polygon points="107.1,233.8 114.2,232.1 114.2,234.3 107.1,236.0" fill="#cfcd94"/><polygon points="114.2,232.1 115.2,227.8 115.2,230.0 114.2,234.3" fill="#a9a774"/><polygon points="108.9,225.2 101.8,226.9 100.8,231.2 107.1,233.8 114.2,232.1 115.2,227.8" fill="#b9b881"/>
<polygon points="299.5,214.1 305.1,216.5 311.6,215.0 312.5,211.1 312.5,230.3 311.6,234.1 305.1,235.7 299.5,233.3" fill="url(#g23)"/><polygon points="306.9,208.7 300.4,210.3 299.5,214.1 305.1,216.5 311.6,215.0 312.5,211.1" fill="#c6c38d"/>
<polygon points="407.7,222.3 413.3,224.7 419.9,223.1 420.7,219.2 420.7,230.7 419.9,234.6 413.3,236.2 407.7,233.8" fill="url(#g24)"/><polygon points="415.1,216.8 408.5,218.4 407.7,222.3 413.3,224.7 419.9,223.1 420.7,219.2" fill="#c6c38d"/>
<polygon points="187.9,191.0 194.4,193.7 201.9,191.9 202.9,187.4 208.8,230.6 207.8,235.1 200.3,236.9 193.8,234.2" fill="url(#g25)"/><polygon points="196.4,184.7 188.9,186.5 187.9,191.0 194.4,193.7 201.9,191.9 202.9,187.4" fill="#c8843f"/>
<polygon points="147.8,232.2 154.1,234.8 154.1,237.0 147.8,234.4" fill="#e3e1a2"/><polygon points="154.1,234.8 161.2,233.1 161.2,235.3 154.1,237.0" fill="#cfcd94"/><polygon points="161.2,233.1 162.2,228.8 162.2,231.0 161.2,235.3" fill="#a9a774"/><polygon points="155.9,226.2 148.8,227.9 147.8,232.2 154.1,234.8 161.2,233.1 162.2,228.8" fill="#b9b881"/>
<polygon points="179.7,210.4 185.7,212.9 192.6,211.3 193.5,207.2 197.4,232.8 196.5,236.9 189.6,238.5 183.6,236.0" fill="url(#g26)"/><polygon points="187.5,204.7 180.6,206.3 179.7,210.4 185.7,212.9 192.6,211.3 193.5,207.2" fill="#c9a45f"/>
<polygon points="204.6,213.6 211.1,216.3 218.6,214.5 219.6,210.0 222.5,232.6 221.5,237.1 214.0,238.9 207.5,236.2" fill="url(#g27)"/><polygon points="213.1,207.3 205.6,209.1 204.6,213.6 211.1,216.3 218.6,214.5 219.6,210.0" fill="#c9a45f"/>
<polygon points="120.4,234.1 126.6,236.7 126.6,238.9 120.4,236.3" fill="#e3e1a2"/><polygon points="126.6,236.7 133.8,235.0 133.8,237.2 126.6,238.9" fill="#cfcd94"/><polygon points="133.8,235.0 134.8,230.7 134.8,232.9 133.8,237.2" fill="#a9a774"/><polygon points="128.6,228.1 121.4,229.8 120.4,234.1 126.6,236.7 133.8,235.0 134.8,230.7" fill="#b9b881"/>
<polygon points="138.0,234.1 144.2,236.7 144.2,238.9 138.0,236.3" fill="#e3e1a2"/><polygon points="144.2,236.7 151.4,235.0 151.4,237.2 144.2,238.9" fill="#cfcd94"/><polygon points="151.4,235.0 152.4,230.7 152.4,232.9 151.4,237.2" fill="#a9a774"/><polygon points="146.2,228.1 139.0,229.8 138.0,234.1 144.2,236.7 151.4,235.0 152.4,230.7" fill="#b9b881"/>
<polygon points="368.1,226.3 373.8,228.7 380.4,227.1 381.3,223.2 381.3,233.9 380.4,237.9 373.8,239.4 368.1,237.0" fill="url(#g28)"/><polygon points="375.6,220.8 369.0,222.3 368.1,226.3 373.8,228.7 380.4,227.1 381.3,223.2" fill="#c6c38d"/>
<polygon points="401.8,218.1 407.4,220.5 414.0,218.9 414.8,215.0 414.8,234.9 414.0,238.9 407.4,240.4 401.8,238.0" fill="url(#g29)"/><polygon points="409.2,212.6 402.6,214.1 401.8,218.1 407.4,220.5 414.0,218.9 414.8,215.0" fill="#c6c38d"/>
<polygon points="202.0,236.9 208.2,239.5 208.2,241.8 202.0,239.1" fill="#e3e1a2"/><polygon points="208.2,239.5 215.5,237.8 215.5,240.1 208.2,241.8" fill="#cfcd94"/><polygon points="215.5,237.8 216.4,233.5 216.4,235.7 215.5,240.1" fill="#a9a774"/><polygon points="210.2,230.8 202.9,232.5 202.0,236.9 208.2,239.5 215.5,237.8 216.4,233.5" fill="#b9b881"/>
<polygon points="306.4,153.5 313.7,156.6 322.1,154.6 323.2,149.5 329.1,236.0 328.0,241.1 319.6,243.1 312.3,240.0" fill="url(#g30)"/><polygon points="315.9,146.4 307.5,148.4 306.4,153.5 313.7,156.6 322.1,154.6 323.2,149.5" fill="#921432"/>
<polygon points="324.9,188.9 332.4,192.1 341.0,190.1 342.1,184.9 346.0,236.0 344.9,241.2 336.3,243.2 328.8,240.0" fill="url(#g31)"/><polygon points="334.6,181.7 326.0,183.7 324.9,188.9 332.4,192.1 341.0,190.1 342.1,184.9" fill="#c26a38"/>
<polygon points="377.5,188.8 384.4,191.8 392.5,189.8 393.5,185.0 394.5,236.1 393.5,240.9 385.4,242.9 378.5,239.9" fill="url(#g32)"/><polygon points="386.6,182.0 378.5,184.0 377.5,188.8 384.4,191.8 392.5,189.8 393.5,185.0" fill="#c8843f"/>
<polygon points="68.4,238.0 74.6,240.6 74.6,242.9 68.4,240.3" fill="#e3e1a2"/><polygon points="74.6,240.6 81.9,238.9 81.9,241.2 74.6,242.9" fill="#cfcd94"/><polygon points="81.9,238.9 82.8,234.5 82.8,236.8 81.9,241.2" fill="#a9a774"/><polygon points="76.6,231.9 69.3,233.6 68.4,238.0 74.6,240.6 81.9,238.9 82.8,234.5" fill="#b9b881"/>
<polygon points="258.2,230.3 263.9,232.8 270.5,231.2 271.4,227.2 271.4,237.7 270.5,241.7 263.9,243.2 258.2,240.8" fill="url(#g33)"/><polygon points="265.7,224.8 259.1,226.3 258.2,230.3 263.9,232.8 270.5,231.2 271.4,227.2" fill="#c6c38d"/>
<polygon points="190.2,238.9 196.4,241.5 196.4,243.8 190.2,241.2" fill="#e3e1a2"/><polygon points="196.4,241.5 203.7,239.8 203.7,242.1 196.4,243.8" fill="#cfcd94"/><polygon points="203.7,239.8 204.6,235.4 204.6,237.7 203.7,242.1" fill="#a9a774"/><polygon points="198.4,232.8 191.1,234.5 190.2,238.9 196.4,241.5 203.7,239.8 204.6,235.4" fill="#b9b881"/>
<polygon points="293.5,225.1 299.2,227.6 305.8,226.0 306.7,222.0 306.7,238.9 305.8,242.9 299.2,244.4 293.5,242.0" fill="url(#g34)"/><polygon points="301.0,219.6 294.4,221.1 293.5,225.1 299.2,227.6 305.8,226.0 306.7,222.0" fill="#c6c38d"/>
<polygon points="176.5,240.8 182.7,243.5 182.7,245.7 176.5,243.1" fill="#e3e1a2"/><polygon points="182.7,243.5 190.0,241.7 190.0,244.0 182.7,245.7" fill="#cfcd94"/><polygon points="190.0,241.7 190.9,237.3 190.9,239.6 190.0,244.0" fill="#a9a774"/><polygon points="184.7,234.7 177.4,236.4 176.5,240.8 182.7,243.5 190.0,241.7 190.9,237.3" fill="#b9b881"/>
<polygon points="359.8,192.7 366.7,195.7 374.8,193.8 375.8,188.9 376.8,239.9 375.8,244.8 367.7,246.7 360.8,243.7" fill="url(#g35)"/><polygon points="368.9,185.9 360.8,187.8 359.8,192.7 366.7,195.7 374.8,193.8 375.8,188.9" fill="#c8843f"/>
<polygon points="281.3,202.5 288.2,205.5 296.3,203.6 297.3,198.7 300.3,239.9 299.3,244.8 291.2,246.7 284.3,243.7" fill="url(#g36)"/><polygon points="290.4,195.7 282.3,197.6 281.3,202.5 288.2,205.5 296.3,203.6 297.3,198.7" fill="#c8843f"/>
<polygon points="386.0,228.4 391.7,230.9 398.3,229.3 399.2,225.3 399.2,240.4 398.3,244.4 391.7,246.0 386.0,243.5" fill="url(#g37)"/><polygon points="393.5,222.8 386.9,224.4 386.0,228.4 391.7,230.9 398.3,229.3 399.2,225.3" fill="#c6c38d"/>
<polygon points="255.6,230.9 261.3,233.4 268.0,231.8 268.8,227.8 268.8,241.7 268.0,245.7 261.3,247.3 255.6,244.8" fill="url(#g38)"/><polygon points="263.1,225.3 256.4,226.9 255.6,230.9 261.3,233.4 268.0,231.8 268.8,227.8" fill="#c6c38d"/>
<polygon points="207.7,242.8 214.0,245.5 214.0,247.8 207.7,245.1" fill="#e3e1a2"/><polygon points="214.0,245.5 221.3,243.7 221.3,246.0 214.0,247.8" fill="#cfcd94"/><polygon points="221.3,243.7 222.3,239.3 222.3,241.6 221.3,246.0" fill="#a9a774"/><polygon points="216.0,236.6 208.7,238.4 207.7,242.8 214.0,245.5 221.3,243.7 222.3,239.3" fill="#b9b881"/>
<polygon points="353.0,212.3 359.9,215.3 368.0,213.4 369.0,208.5 371.0,243.9 370.0,248.8 361.9,250.7 355.0,247.7" fill="url(#g39)"/><polygon points="362.1,205.5 354.0,207.4 353.0,212.3 359.9,215.3 368.0,213.4 369.0,208.5" fill="#c9a45f"/>
<polygon points="395.5,235.3 401.3,237.7 408.0,236.1 408.9,232.1 408.9,244.5 408.0,248.6 401.3,250.2 395.5,247.7" fill="url(#g40)"/><polygon points="403.1,229.6 396.4,231.2 395.5,235.3 401.3,237.7 408.0,236.1 408.9,232.1" fill="#c6c38d"/>
<polygon points="83.0,245.9 89.3,248.6 89.3,250.9 83.0,248.2" fill="#e3e1a2"/><polygon points="89.3,248.6 96.6,246.9 96.6,249.2 89.3,250.9" fill="#cfcd94"/><polygon points="96.6,246.9 97.6,242.4 97.6,244.7 96.6,249.2" fill="#a9a774"/><polygon points="91.3,239.7 84.0,241.4 83.0,245.9 89.3,248.6 96.6,246.9 97.6,242.4" fill="#b9b881"/>
<polygon points="387.7,230.4 393.4,232.9 400.1,231.3 400.9,227.2 400.9,245.4 400.1,249.5 393.4,251.1 387.7,248.6" fill="url(#g41)"/><polygon points="395.2,224.7 388.5,226.3 387.7,230.4 393.4,232.9 400.1,231.3 400.9,227.2" fill="#c6c38d"/>
<polygon points="96.7,247.9 103.0,250.6 103.0,252.9 96.7,250.2" fill="#e3e1a2"/><polygon points="103.0,250.6 110.3,248.9 110.3,251.2 103.0,252.9" fill="#cfcd94"/><polygon points="110.3,248.9 111.3,244.4 111.3,246.7 110.3,251.2" fill="#a9a774"/><polygon points="105.0,241.7 97.7,243.4 96.7,247.9 103.0,250.6 110.3,248.9 111.3,244.4" fill="#b9b881"/>
<polygon points="340.2,208.4 347.1,211.4 355.2,209.5 356.2,204.6 359.0,247.8 358.0,252.7 349.9,254.6 343.0,251.6" fill="url(#g42)"/><polygon points="349.3,201.6 341.2,203.5 340.2,208.4 347.1,211.4 355.2,209.5 356.2,204.6" fill="#c8843f"/>
<polygon points="49.6,249.8 55.9,252.6 55.9,254.9 49.6,252.1" fill="#e3e1a2"/><polygon points="55.9,252.6 63.3,250.8 63.3,253.1 55.9,254.9" fill="#cfcd94"/><polygon points="63.3,250.8 64.2,246.3 64.2,248.6 63.3,253.1" fill="#a9a774"/><polygon points="57.9,243.5 50.5,245.3 49.6,249.8 55.9,252.6 63.3,250.8 64.2,246.3" fill="#b9b881"/>
<polygon points="73.2,249.8 79.5,252.6 79.5,254.9 73.2,252.1" fill="#e3e1a2"/><polygon points="79.5,252.6 86.9,250.8 86.9,253.1 79.5,254.9" fill="#cfcd94"/><polygon points="86.9,250.8 87.8,246.3 87.8,248.6 86.9,253.1" fill="#a9a774"/><polygon points="81.5,243.5 74.1,245.3 73.2,249.8 79.5,252.6 86.9,250.8 87.8,246.3" fill="#b9b881"/>
<polygon points="253.6,250.3 259.9,253.1 259.9,255.4 253.6,252.6" fill="#e3e1a2"/><polygon points="259.9,253.1 267.3,251.3 267.3,253.6 259.9,255.4" fill="#cfcd94"/><polygon points="267.3,251.3 268.2,246.8 268.2,249.1 267.3,253.6" fill="#a9a774"/><polygon points="261.9,244.0 254.5,245.8 253.6,250.3 259.9,253.1 267.3,251.3 268.2,246.8" fill="#b9b881"/>
<polygon points="158.7,250.6 165.0,253.4 165.0,255.7 158.7,252.9" fill="#e3e1a2"/><polygon points="165.0,253.4 172.4,251.6 172.4,253.9 165.0,255.7" fill="#cfcd94"/><polygon points="172.4,251.6 173.3,247.1 173.3,249.4 172.4,253.9" fill="#a9a774"/><polygon points="167.0,244.3 159.6,246.1 158.7,250.6 165.0,253.4 172.4,251.6 173.3,247.1" fill="#b9b881"/>
<polygon points="120.3,250.8 126.6,253.6 126.6,255.9 120.3,253.1" fill="#e3e1a2"/><polygon points="126.6,253.6 134.0,251.8 134.0,254.1 126.6,255.9" fill="#cfcd94"/><polygon points="134.0,251.8 134.9,247.3 134.9,249.6 134.0,254.1" fill="#a9a774"/><polygon points="128.6,244.5 121.2,246.3 120.3,250.8 126.6,253.6 134.0,251.8 134.9,247.3" fill="#b9b881"/>
<polygon points="134.0,250.8 140.3,253.6 140.3,255.9 134.0,253.1" fill="#e3e1a2"/><polygon points="140.3,253.6 147.7,251.8 147.7,254.1 140.3,255.9" fill="#cfcd94"/><polygon points="147.7,251.8 148.6,247.3 148.6,249.6 147.7,254.1" fill="#a9a774"/><polygon points="142.3,244.5 134.9,246.3 134.0,250.8 140.3,253.6 147.7,251.8 148.6,247.3" fill="#b9b881"/>
<polygon points="301.3,233.2 307.1,235.7 313.8,234.1 314.7,229.9 314.7,250.4 313.8,254.6 307.1,256.2 301.3,253.7" fill="url(#g43)"/><polygon points="308.9,227.4 302.2,229.0 301.3,233.2 307.1,235.7 313.8,234.1 314.7,229.9" fill="#c6c38d"/>
<polygon points="211.6,252.6 218.0,255.4 218.0,257.7 211.6,254.9" fill="#e3e1a2"/><polygon points="218.0,255.4 225.4,253.6 225.4,255.9 218.0,257.7" fill="#cfcd94"/><polygon points="225.4,253.6 226.4,249.1 226.4,251.4 225.4,255.9" fill="#a9a774"/><polygon points="220.0,246.3 212.6,248.1 211.6,252.6 218.0,255.4 225.4,253.6 226.4,249.1" fill="#b9b881"/>
<polygon points="402.0,232.0 408.9,235.0 417.0,233.0 418.0,228.0 418.0,251.6 417.0,256.6 408.9,258.6 402.0,255.6" fill="url(#g44)"/><polygon points="411.1,225.0 403.0,227.0 402.0,232.0 408.9,235.0 417.0,233.0 418.0,228.0" fill="#c9a45f"/>
<polygon points="39.7,253.7 46.1,256.5 46.1,258.8 39.7,256.1" fill="#e3e1a2"/><polygon points="46.1,256.5 53.5,254.7 53.5,257.0 46.1,258.8" fill="#cfcd94"/><polygon points="53.5,254.7 54.5,250.1 54.5,252.5 53.5,257.0" fill="#a9a774"/><polygon points="48.1,247.4 40.7,249.2 39.7,253.7 46.1,256.5 53.5,254.7 54.5,250.1" fill="#b9b881"/>
<polygon points="395.6,245.4 401.5,248.0 408.3,246.3 409.2,242.1 409.2,254.8 408.3,259.0 401.5,260.6 395.6,258.1" fill="url(#g45)"/><polygon points="403.3,239.6 396.5,241.2 395.6,245.4 401.5,248.0 408.3,246.3 409.2,242.1" fill="#c6c38d"/>
<polygon points="367.9,243.8 373.8,246.3 380.6,244.7 381.5,240.5 381.5,255.6 380.6,259.8 373.8,261.5 367.9,258.9" fill="url(#g46)"/><polygon points="375.6,237.9 368.8,239.6 367.9,243.8 373.8,246.3 380.6,244.7 381.5,240.5" fill="#c6c38d"/>
<polygon points="299.2,248.4 305.1,251.0 311.9,249.3 312.8,245.0 312.8,258.8 311.9,263.1 305.1,264.7 299.2,262.2" fill="url(#g47)"/><polygon points="306.9,242.5 300.1,244.1 299.2,248.4 305.1,251.0 311.9,249.3 312.8,245.0" fill="#c6c38d"/>
<polygon points="395.4,248.4 401.3,251.0 408.1,249.3 409.0,245.0 409.0,258.8 408.1,263.1 401.3,264.7 395.4,262.2" fill="url(#g48)"/><polygon points="403.1,242.5 396.3,244.1 395.4,248.4 401.3,251.0 408.1,249.3 409.0,245.0" fill="#c6c38d"/>
<polygon points="417.2,244.9 423.1,247.5 429.9,245.8 430.8,241.6 430.8,259.1 429.9,263.3 423.1,265.0 417.2,262.4" fill="url(#g49)"/><polygon points="424.9,239.0 418.1,240.7 417.2,244.9 423.1,247.5 429.9,245.8 430.8,241.6" fill="#c6c38d"/>
<polygon points="415.0,246.8 420.9,249.3 427.7,247.7 428.6,243.4 428.6,260.4 427.7,264.7 420.9,266.4 415.0,263.8" fill="url(#g50)"/><polygon points="422.7,240.8 415.9,242.5 415.0,246.8 420.9,249.3 427.7,247.7 428.6,243.4" fill="#c6c38d"/>
<polygon points="222.3,213.6 228.8,216.5 236.3,214.6 237.3,210.0 244.1,262.0 243.1,266.6 235.6,268.5 229.1,265.6" fill="url(#g51)"/><polygon points="230.8,207.1 223.3,209.0 222.3,213.6 228.8,216.5 236.3,214.6 237.3,210.0" fill="#c8843f"/>
<polygon points="29.8,263.7 36.3,266.5 36.3,268.9 29.8,266.0" fill="#e3e1a2"/><polygon points="36.3,266.5 43.8,264.7 43.8,267.0 36.3,268.9" fill="#cfcd94"/><polygon points="43.8,264.7 44.8,260.0 44.8,262.3 43.8,267.0" fill="#a9a774"/><polygon points="38.3,257.1 30.8,259.0 29.8,263.7 36.3,266.5 43.8,264.7 44.8,260.0" fill="#b9b881"/>
<polygon points="314.0,212.4 320.9,215.5 329.0,213.5 330.0,208.4 335.6,263.0 334.6,268.1 326.5,270.1 319.6,267.0" fill="url(#g52)"/><polygon points="323.1,205.3 315.0,207.3 314.0,212.4 320.9,215.5 329.0,213.5 330.0,208.4" fill="#b83424"/>
<polygon points="90.6,264.6 97.1,267.4 97.1,269.8 90.6,266.9" fill="#e3e1a2"/><polygon points="97.1,267.4 104.6,265.6 104.6,267.9 97.1,269.8" fill="#cfcd94"/><polygon points="104.6,265.6 105.6,260.9 105.6,263.2 104.6,267.9" fill="#a9a774"/><polygon points="99.1,258.0 91.6,259.9 90.6,264.6 97.1,267.4 104.6,265.6 105.6,260.9" fill="#b9b881"/>
<polygon points="238.5,235.4 245.4,238.5 253.5,236.5 254.5,231.4 258.4,263.8 257.4,268.9 249.3,270.9 242.4,267.8" fill="url(#g53)"/><polygon points="247.6,228.3 239.5,230.3 238.5,235.4 245.4,238.5 253.5,236.5 254.5,231.4" fill="#c9a45f"/>
<polygon points="428.6,256.7 434.6,259.3 441.5,257.6 442.4,253.2 442.4,270.1 441.5,274.5 434.6,276.2 428.6,273.6" fill="url(#g54)"/><polygon points="436.4,250.6 429.5,252.3 428.6,256.7 434.6,259.3 441.5,257.6 442.4,253.2" fill="#c6c38d"/>
<polygon points="422.7,260.7 428.7,263.3 435.6,261.6 436.5,257.2 436.5,270.1 435.6,274.5 428.7,276.3 422.7,273.6" fill="url(#g55)"/><polygon points="430.5,254.5 423.6,256.3 422.7,260.7 428.7,263.3 435.6,261.6 436.5,257.2" fill="#c6c38d"/>
<polygon points="363.9,259.4 369.9,262.1 376.8,260.4 377.7,255.9 377.7,271.4 376.8,275.8 369.9,277.5 363.9,274.9" fill="url(#g56)"/><polygon points="371.7,253.3 364.8,255.0 363.9,259.4 369.9,262.1 376.8,260.4 377.7,255.9" fill="#c6c38d"/>
<polygon points="403.4,259.1 409.4,261.8 416.3,260.0 417.2,255.6 417.2,272.5 416.3,276.9 409.4,278.7 403.4,276.0" fill="url(#g57)"/><polygon points="411.2,252.9 404.3,254.7 403.4,259.1 409.4,261.8 416.3,260.0 417.2,255.6" fill="#c6c38d"/>
<polygon points="145.6,261.3 152.1,264.2 159.6,262.3 160.6,257.5 160.6,272.5 159.6,277.3 152.1,279.2 145.6,276.3" fill="url(#g58)"/><polygon points="154.1,254.6 146.6,256.5 145.6,261.3 152.1,264.2 159.6,262.3 160.6,257.5" fill="#bdbb85"/>
<polygon points="425.0,254.8 431.0,257.5 437.9,255.8 438.8,251.4 438.8,272.8 437.9,277.2 431.0,278.9 425.0,276.2" fill="url(#g59)"/><polygon points="432.8,248.7 425.9,250.4 425.0,254.8 431.0,257.5 437.9,255.8 438.8,251.4" fill="#c6c38d"/>
<polygon points="261.8,258.0 267.8,260.6 274.7,258.9 275.6,254.5 275.6,272.8 274.7,277.2 267.8,279.0 261.8,276.3" fill="url(#g60)"/><polygon points="269.6,251.8 262.7,253.6 261.8,258.0 267.8,260.6 274.7,258.9 275.6,254.5" fill="#c6c38d"/>
<polygon points="201.6,274.3 208.2,277.3 208.2,279.6 201.6,276.7" fill="#e3e1a2"/><polygon points="208.2,277.3 215.8,275.4 215.8,277.7 208.2,279.6" fill="#cfcd94"/><polygon points="215.8,275.4 216.8,270.5 216.8,272.9 215.8,277.7" fill="#a9a774"/><polygon points="210.2,267.6 202.6,269.5 201.6,274.3 208.2,277.3 215.8,275.4 216.8,270.5" fill="#b9b881"/>
<polygon points="411.2,262.1 417.2,264.8 424.1,263.0 425.0,258.6 425.0,273.3 424.1,277.8 417.2,279.5 411.2,276.8" fill="url(#g61)"/><polygon points="419.0,255.9 412.1,257.6 411.2,262.1 417.2,264.8 424.1,263.0 425.0,258.6" fill="#c6c38d"/>
<polygon points="368.9,266.4 374.9,269.1 381.8,267.3 382.7,262.9 382.7,273.6 381.8,278.0 374.9,279.8 368.9,277.1" fill="url(#g62)"/><polygon points="376.7,260.2 369.8,262.0 368.9,266.4 374.9,269.1 381.8,267.3 382.7,262.9" fill="#c6c38d"/>
<polygon points="383.5,264.3 389.5,266.9 396.4,265.2 397.3,260.8 397.3,274.3 396.4,278.8 389.5,280.5 383.5,277.8" fill="url(#g63)"/><polygon points="391.3,258.1 384.4,259.8 383.5,264.3 389.5,266.9 396.4,265.2 397.3,260.8" fill="#c6c38d"/>
<polygon points="129.9,263.2 136.4,266.1 143.9,264.2 144.9,259.3 144.9,274.4 143.9,279.3 136.4,281.2 129.9,278.3" fill="url(#g64)"/><polygon points="138.4,256.4 130.9,258.3 129.9,263.2 136.4,266.1 143.9,264.2 144.9,259.3" fill="#bdbb85"/>
<polygon points="391.6,256.7 397.6,259.4 404.5,257.6 405.4,253.2 405.4,274.9 404.5,279.3 397.6,281.1 391.6,278.4" fill="url(#g65)"/><polygon points="399.4,250.5 392.5,252.3 391.6,256.7 397.6,259.4 404.5,257.6 405.4,253.2" fill="#c6c38d"/>
<polygon points="185.9,276.3 192.5,279.3 192.5,281.7 185.9,278.7" fill="#e3e1a2"/><polygon points="192.5,279.3 200.1,277.4 200.1,279.7 192.5,281.7" fill="#cfcd94"/><polygon points="200.1,277.4 201.1,272.5 201.1,274.9 200.1,279.7" fill="#a9a774"/><polygon points="194.5,269.5 186.9,271.5 185.9,276.3 192.5,279.3 200.1,277.4 201.1,272.5" fill="#b9b881"/>
<polygon points="286.2,243.8 293.1,247.0 301.2,244.9 302.2,239.8 305.2,275.2 304.2,280.3 296.1,282.4 289.2,279.2" fill="url(#g66)"/><polygon points="295.3,236.6 287.2,238.7 286.2,243.8 293.1,247.0 301.2,244.9 302.2,239.8" fill="#c9a45f"/>
<polygon points="213.4,278.2 220.0,281.2 220.0,283.6 213.4,280.6" fill="#e3e1a2"/><polygon points="220.0,281.2 227.6,279.3 227.6,281.7 220.0,283.6" fill="#cfcd94"/><polygon points="227.6,279.3 228.6,274.4 228.6,276.8 227.6,281.7" fill="#a9a774"/><polygon points="222.0,271.4 214.4,273.3 213.4,278.2 220.0,281.2 227.6,279.3 228.6,274.4" fill="#b9b881"/>
<polygon points="378.5,249.7 385.4,252.9 393.5,250.8 394.5,245.7 394.5,277.1 393.5,282.2 385.4,284.3 378.5,281.1" fill="url(#g67)"/><polygon points="387.6,242.5 379.5,244.6 378.5,249.7 385.4,252.9 393.5,250.8 394.5,245.7" fill="#c9a45f"/>
<polygon points="380.7,265.6 386.7,268.3 393.6,266.6 394.5,262.1 394.5,278.2 393.6,282.7 386.7,284.4 380.7,281.7" fill="url(#g68)"/><polygon points="388.5,259.4 381.6,261.1 380.7,265.6 386.7,268.3 393.6,266.6 394.5,262.1" fill="#c6c38d"/>
<polygon points="114.1,267.1 120.7,270.1 128.3,268.2 129.3,263.3 129.3,278.5 128.3,283.4 120.7,285.3 114.1,282.3" fill="url(#g69)"/><polygon points="122.7,260.3 115.1,262.2 114.1,267.1 120.7,270.1 128.3,268.2 129.3,263.3" fill="#bdbb85"/>
<polygon points="399.4,272.1 405.5,274.8 412.5,273.1 413.4,268.5 413.4,279.1 412.5,283.6 405.5,285.4 399.4,282.7" fill="url(#g70)"/><polygon points="407.3,265.8 400.3,267.6 399.4,272.1 405.5,274.8 412.5,273.1 413.4,268.5" fill="#c6c38d"/>
<polygon points="423.2,280.5 429.8,283.5 429.8,285.9 423.2,282.9" fill="#e3e1a2"/><polygon points="429.8,283.5 437.4,281.6 437.4,284.0 429.8,285.9" fill="#cfcd94"/><polygon points="437.4,281.6 438.4,276.7 438.4,279.1 437.4,284.0" fill="#a9a774"/><polygon points="431.8,273.7 424.2,275.6 423.2,280.5 429.8,283.5 437.4,281.6 438.4,276.7" fill="#b9b881"/>
<polygon points="154.0,177.8 161.8,181.3 170.8,179.0 172.0,173.2 193.6,279.2 192.4,285.0 183.4,287.3 175.6,283.8" fill="url(#g71)"/><polygon points="164.2,169.7 155.2,172.0 154.0,177.8 161.8,181.3 170.8,179.0 172.0,173.2" fill="#b83424"/>
<polygon points="221.2,252.2 228.7,255.6 237.3,253.4 238.4,247.8 241.3,279.3 240.2,284.9 231.6,287.1 224.1,283.7" fill="url(#g72)"/><polygon points="230.9,244.4 222.3,246.6 221.2,252.2 228.7,255.6 237.3,253.4 238.4,247.8" fill="#c9a45f"/>
<polygon points="23.8,281.3 30.4,284.3 30.4,286.7 23.8,283.7" fill="#e3e1a2"/><polygon points="30.4,284.3 38.0,282.4 38.0,284.8 30.4,286.7" fill="#cfcd94"/><polygon points="38.0,282.4 39.0,277.5 39.0,279.9 38.0,284.8" fill="#a9a774"/><polygon points="32.4,274.5 24.8,276.4 23.8,281.3 30.4,284.3 38.0,282.4 39.0,277.5" fill="#b9b881"/>
<polygon points="90.5,282.4 97.1,285.4 97.1,287.8 90.5,284.8" fill="#e3e1a2"/><polygon points="97.1,285.4 104.7,283.4 104.7,285.8 97.1,287.8" fill="#cfcd94"/><polygon points="104.7,283.4 105.7,278.4 105.7,280.8 104.7,285.8" fill="#a9a774"/><polygon points="99.1,275.4 91.5,277.4 90.5,282.4 97.1,285.4 104.7,283.4 105.7,278.4" fill="#b9b881"/>
<polygon points="260.3,201.7 267.2,204.8 275.3,202.8 276.3,197.5 281.6,280.9 280.6,286.2 272.5,288.2 265.6,285.1" fill="url(#g73)"/><polygon points="269.4,194.4 261.3,196.4 260.3,201.7 267.2,204.8 275.3,202.8 276.3,197.5" fill="#b83424"/>
<polygon points="295.1,264.3 301.2,267.1 308.1,265.3 309.1,260.8 309.1,282.1 308.1,286.6 301.2,288.4 295.1,285.6" fill="url(#g74)"/><polygon points="303.0,258.0 296.1,259.8 295.1,264.3 301.2,267.1 308.1,265.3 309.1,260.8" fill="#c6c38d"/>
<polygon points="51.3,271.0 57.9,274.0 65.5,272.1 66.5,267.1 66.5,282.4 65.5,287.3 57.9,289.3 51.3,286.3" fill="url(#g75)"/><polygon points="59.9,264.1 52.3,266.1 51.3,271.0 57.9,274.0 65.5,272.1 66.5,267.1" fill="#bdbb85"/>
<polygon points="416.3,284.2 423.0,287.2 423.0,289.6 416.3,286.6" fill="#e3e1a2"/><polygon points="423.0,287.2 430.6,285.2 430.6,287.6 423.0,289.6" fill="#cfcd94"/><polygon points="430.6,285.2 431.7,280.2 431.7,282.6 430.6,287.6" fill="#a9a774"/><polygon points="425.0,277.2 417.4,279.2 416.3,284.2 423.0,287.2 430.6,285.2 431.7,280.2" fill="#b9b881"/>
<polygon points="76.7,285.3 83.4,288.3 83.4,290.7 76.7,287.7" fill="#e3e1a2"/><polygon points="83.4,288.3 91.1,286.3 91.1,288.7 83.4,290.7" fill="#cfcd94"/><polygon points="91.1,286.3 92.1,281.3 92.1,283.7 91.1,288.7" fill="#a9a774"/><polygon points="85.4,278.3 77.7,280.3 76.7,285.3 83.4,288.3 91.1,286.3 92.1,281.3" fill="#b9b881"/>
<polygon points="410.2,285.8 416.9,288.8 416.9,291.2 410.2,288.2" fill="#e3e1a2"/><polygon points="416.9,288.8 424.6,286.8 424.6,289.2 416.9,291.2" fill="#cfcd94"/><polygon points="424.6,286.8 425.6,281.8 425.6,284.2 424.6,289.2" fill="#a9a774"/><polygon points="418.9,278.8 411.2,280.8 410.2,285.8 416.9,288.8 424.6,286.8 425.6,281.8" fill="#b9b881"/>
<polygon points="418.0,285.8 424.7,288.8 424.7,291.2 418.0,288.2" fill="#e3e1a2"/><polygon points="424.7,288.8 432.4,286.8 432.4,289.2 424.7,291.2" fill="#cfcd94"/><polygon points="432.4,286.8 433.4,281.8 433.4,284.2 432.4,289.2" fill="#a9a774"/><polygon points="426.7,278.8 419.0,280.8 418.0,285.8 424.7,288.8 432.4,286.8 433.4,281.8" fill="#b9b881"/>
<polygon points="114.1,273.0 120.7,276.0 128.3,274.1 129.3,269.1 129.3,284.4 128.3,289.4 120.7,291.3 114.1,288.3" fill="url(#g76)"/><polygon points="122.7,266.1 115.1,268.0 114.1,273.0 120.7,276.0 128.3,274.1 129.3,269.1" fill="#bdbb85"/>
<polygon points="410.9,269.8 417.0,272.6 424.0,270.8 424.9,266.2 424.9,284.6 424.0,289.2 417.0,291.0 410.9,288.2" fill="url(#g77)"/><polygon points="418.8,263.4 411.8,265.2 410.9,269.8 417.0,272.6 424.0,270.8 424.9,266.2" fill="#c6c38d"/>
<polygon points="399.1,269.2 405.2,272.0 412.2,270.2 413.1,265.6 413.1,285.2 412.2,289.7 405.2,291.5 399.1,288.8" fill="url(#g78)"/><polygon points="407.0,262.9 400.0,264.7 399.1,269.2 405.2,272.0 412.2,270.2 413.1,265.6" fill="#c6c38d"/>
<polygon points="328.4,271.9 334.5,274.7 341.5,272.9 342.4,268.3 342.4,286.3 341.5,290.9 334.5,292.7 328.4,289.9" fill="url(#g79)"/><polygon points="336.3,265.5 329.3,267.3 328.4,271.9 334.5,274.7 341.5,272.9 342.4,268.3" fill="#c6c38d"/>
<polygon points="415.2,288.4 421.9,291.4 421.9,293.9 415.2,290.8" fill="#e3e1a2"/><polygon points="421.9,291.4 429.6,289.5 429.6,291.9 421.9,293.9" fill="#cfcd94"/><polygon points="429.6,289.5 430.6,284.4 430.6,286.8 429.6,291.9" fill="#a9a774"/><polygon points="423.9,281.3 416.2,283.3 415.2,288.4 421.9,291.4 429.6,289.5 430.6,284.4" fill="#b9b881"/>
<polygon points="367.7,274.8 373.8,277.6 380.8,275.7 381.7,271.1 381.7,287.4 380.8,292.0 373.8,293.9 367.7,291.1" fill="url(#g80)"/><polygon points="375.6,268.3 368.6,270.2 367.7,274.8 373.8,277.6 380.8,275.7 381.7,271.1" fill="#c6c38d"/>
<polygon points="259.0,281.3 265.2,284.1 272.2,282.3 273.2,277.7 273.2,289.5 272.2,294.1 265.2,296.0 259.0,293.1" fill="url(#g81)"/><polygon points="267.0,274.8 260.0,276.7 259.0,281.3 265.2,284.1 272.2,282.3 273.2,277.7" fill="#c6c38d"/>
<polygon points="352.0,272.7 358.1,275.5 365.1,273.7 366.0,269.0 366.0,289.5 365.1,294.2 358.1,296.0 352.0,293.2" fill="url(#g82)"/><polygon points="359.9,266.2 352.9,268.0 352.0,272.7 358.1,275.5 365.1,273.7 366.0,269.0" fill="#c6c38d"/>
<polygon points="172.0,292.1 178.7,295.2 178.7,297.6 172.0,294.5" fill="#e3e1a2"/><polygon points="178.7,295.2 186.4,293.2 186.4,295.6 178.7,297.6" fill="#cfcd94"/><polygon points="186.4,293.2 187.4,288.1 187.4,290.5 186.4,295.6" fill="#a9a774"/><polygon points="180.7,285.0 173.0,287.0 172.0,292.1 178.7,295.2 186.4,293.2 187.4,288.1" fill="#b9b881"/>
<polygon points="296.9,279.0 303.1,281.8 310.1,280.0 311.1,275.3 311.1,291.0 310.1,295.7 303.1,297.5 296.9,294.7" fill="url(#g83)"/><polygon points="304.9,272.5 297.9,274.3 296.9,279.0 303.1,281.8 310.1,280.0 311.1,275.3" fill="#c6c38d"/>
<polygon points="404.0,280.3 410.2,283.2 417.2,281.3 418.2,276.7 418.2,291.1 417.2,295.7 410.2,297.6 404.0,294.7" fill="url(#g84)"/><polygon points="412.0,273.8 405.0,275.7 404.0,280.3 410.2,283.2 417.2,281.3 418.2,276.7" fill="#c6c38d"/>
<polygon points="170.8,292.7 177.5,295.8 177.5,298.2 170.8,295.1" fill="#e3e1a2"/><polygon points="177.5,295.8 185.2,293.8 185.2,296.2 177.5,298.2" fill="#cfcd94"/><polygon points="185.2,293.8 186.2,288.7 186.2,291.1 185.2,296.2" fill="#a9a774"/><polygon points="179.5,285.6 171.8,287.6 170.8,292.7 177.5,295.8 185.2,293.8 186.2,288.7" fill="#b9b881"/>
<polygon points="255.7,278.3 261.9,281.1 268.9,279.3 269.9,274.6 269.9,291.7 268.9,296.4 261.9,298.2 255.7,295.4" fill="url(#g85)"/><polygon points="263.7,271.8 256.7,273.6 255.7,278.3 261.9,281.1 268.9,279.3 269.9,274.6" fill="#c6c38d"/>
<polygon points="425.8,293.7 432.6,296.8 432.6,299.2 425.8,296.1" fill="#e3e1a2"/><polygon points="432.6,296.8 440.3,294.8 440.3,297.2 432.6,299.2" fill="#cfcd94"/><polygon points="440.3,294.8 441.4,289.7 441.4,292.1 440.3,297.2" fill="#a9a774"/><polygon points="434.6,286.6 426.9,288.6 425.8,293.7 432.6,296.8 440.3,294.8 441.4,289.7" fill="#b9b881"/>
<polygon points="334.2,277.5 340.4,280.3 347.4,278.5 348.4,273.8 348.4,292.5 347.4,297.2 340.4,299.0 334.2,296.2" fill="url(#g86)"/><polygon points="342.2,271.0 335.2,272.8 334.2,277.5 340.4,280.3 347.4,278.5 348.4,273.8" fill="#c6c38d"/>
<polygon points="35.9,273.2 43.9,276.9 53.1,274.5 54.3,268.4 58.3,292.0 57.1,298.1 47.9,300.5 39.9,296.8" fill="url(#g87)"/><polygon points="46.3,264.7 37.1,267.1 35.9,273.2 43.9,276.9 53.1,274.5 54.3,268.4" fill="#c9a45f"/>
<polygon points="395.1,283.3 401.3,286.2 408.4,284.3 409.3,279.6 409.3,294.7 408.4,299.4 401.3,301.2 395.1,298.4" fill="url(#g88)"/><polygon points="403.1,276.8 396.0,278.6 395.1,283.3 401.3,286.2 408.4,284.3 409.3,279.6" fill="#c6c38d"/>
<polygon points="313.1,242.1 320.6,245.6 329.2,243.4 330.3,237.7 333.2,294.6 332.1,300.3 323.5,302.5 316.0,299.0" fill="url(#g89)"/><polygon points="322.8,234.2 314.2,236.4 313.1,242.1 320.6,245.6 329.2,243.4 330.3,237.7" fill="#c26a38"/>
<polygon points="392.3,283.2 398.5,286.1 405.6,284.2 406.5,279.5 406.5,296.0 405.6,300.7 398.5,302.5 392.3,299.7" fill="url(#g90)"/><polygon points="400.3,276.7 393.2,278.5 392.3,283.2 398.5,286.1 405.6,284.2 406.5,279.5" fill="#c6c38d"/>
<polygon points="382.6,297.6 389.4,300.8 389.4,303.2 382.6,300.1" fill="#e3e1a2"/><polygon points="389.4,300.8 397.2,298.7 397.2,301.2 389.4,303.2" fill="#cfcd94"/><polygon points="397.2,298.7 398.2,293.5 398.2,296.0 397.2,301.2" fill="#a9a774"/><polygon points="391.4,290.4 383.6,292.4 382.6,297.6 389.4,300.8 397.2,298.7 398.2,293.5" fill="#b9b881"/>
<polygon points="410.3,298.0 417.1,301.2 417.1,303.6 410.3,300.5" fill="#e3e1a2"/><polygon points="417.1,301.2 424.9,299.1 424.9,301.6 417.1,303.6" fill="#cfcd94"/><polygon points="424.9,299.1 425.9,293.9 425.9,296.4 424.9,301.6" fill="#a9a774"/><polygon points="419.1,290.8 411.3,292.8 410.3,298.0 417.1,301.2 424.9,299.1 425.9,293.9" fill="#b9b881"/>
<polygon points="424.1,298.0 430.9,301.2 430.9,303.6 424.1,300.5" fill="#e3e1a2"/><polygon points="430.9,301.2 438.7,299.1 438.7,301.6 430.9,303.6" fill="#cfcd94"/><polygon points="438.7,299.1 439.7,293.9 439.7,296.4 438.7,301.6" fill="#a9a774"/><polygon points="432.9,290.8 425.1,292.8 424.1,298.0 430.9,301.2 438.7,299.1 439.7,293.9" fill="#b9b881"/>
<polygon points="423.0,298.2 429.8,301.4 429.8,303.8 423.0,300.7" fill="#e3e1a2"/><polygon points="429.8,301.4 437.6,299.3 437.6,301.8 429.8,303.8" fill="#cfcd94"/><polygon points="437.6,299.3 438.6,294.1 438.6,296.6 437.6,301.8" fill="#a9a774"/><polygon points="431.8,291.0 424.0,293.0 423.0,298.2 429.8,301.4 437.6,299.3 438.6,294.1" fill="#b9b881"/>
<polygon points="261.6,284.3 267.8,287.2 274.9,285.3 275.8,280.6 275.8,297.5 274.9,302.2 267.8,304.1 261.6,301.2" fill="url(#g91)"/><polygon points="269.6,277.7 262.5,279.6 261.6,284.3 267.8,287.2 274.9,285.3 275.8,280.6" fill="#c6c38d"/>
<polygon points="391.4,281.0 397.6,283.9 404.7,282.0 405.6,277.3 405.6,297.6 404.7,302.3 397.6,304.2 391.4,301.3" fill="url(#g92)"/><polygon points="399.4,274.4 392.3,276.3 391.4,281.0 397.6,283.9 404.7,282.0 405.6,277.3" fill="#c6c38d"/>
<polygon points="336.3,245.9 343.2,249.2 351.3,247.0 352.3,241.7 355.2,298.6 354.2,303.9 346.1,306.1 339.2,302.8" fill="url(#g93)"/><polygon points="345.4,238.4 337.3,240.6 336.3,245.9 343.2,249.2 351.3,247.0 352.3,241.7" fill="#c26a38"/>
<polygon points="239.4,300.6 246.2,303.8 246.2,306.2 239.4,303.1" fill="#e3e1a2"/><polygon points="246.2,303.8 254.0,301.7 254.0,304.2 246.2,306.2" fill="#cfcd94"/><polygon points="254.0,301.7 255.0,296.5 255.0,299.0 254.0,304.2" fill="#a9a774"/><polygon points="248.2,293.4 240.4,295.4 239.4,300.6 246.2,303.8 254.0,301.7 255.0,296.5" fill="#b9b881"/>
<polygon points="45.2,301.0 52.0,304.2 52.0,306.6 45.2,303.5" fill="#e3e1a2"/><polygon points="52.0,304.2 59.8,302.1 59.8,304.6 52.0,306.6" fill="#cfcd94"/><polygon points="59.8,302.1 60.8,296.9 60.8,299.4 59.8,304.6" fill="#a9a774"/><polygon points="54.0,293.8 46.2,295.8 45.2,301.0 52.0,304.2 59.8,302.1 60.8,296.9" fill="#b9b881"/>
<polygon points="367.5,293.0 373.8,295.9 380.9,294.0 381.9,289.2 381.9,300.6 380.9,305.4 373.8,307.3 367.5,304.4" fill="url(#g94)"/><polygon points="375.6,286.3 368.5,288.2 367.5,293.0 373.8,295.9 380.9,294.0 381.9,289.2" fill="#c6c38d"/>
<polygon points="338.0,292.0 344.3,294.9 351.4,293.0 352.4,288.2 352.4,301.6 351.4,306.4 344.3,308.3 338.0,305.4" fill="url(#g95)"/><polygon points="346.1,285.3 339.0,287.2 338.0,292.0 344.3,294.9 351.4,293.0 352.4,288.2" fill="#c6c38d"/>
<polygon points="351.0,257.7 357.9,261.0 366.0,258.9 367.0,253.5 369.0,302.5 368.0,307.9 359.9,310.0 353.0,306.7" fill="url(#g96)"/><polygon points="360.1,250.2 352.0,252.3 351.0,257.7 357.9,261.0 366.0,258.9 367.0,253.5" fill="#c9a45f"/>
<polygon points="364.7,291.7 371.0,294.6 378.1,292.7 379.1,287.9 379.1,303.1 378.1,307.9 371.0,309.8 364.7,306.9" fill="url(#g97)"/><polygon points="372.8,285.0 365.7,286.9 364.7,291.7 371.0,294.6 378.1,292.7 379.1,287.9" fill="#c6c38d"/>
<polygon points="256.9,290.2 263.2,293.1 270.3,291.2 271.3,286.4 271.3,304.2 270.3,309.0 263.2,310.9 256.9,308.0" fill="url(#g98)"/><polygon points="265.0,283.5 257.9,285.4 256.9,290.2 263.2,293.1 270.3,291.2 271.3,286.4" fill="#c6c38d"/>
<polygon points="267.4,293.0 273.6,295.9 280.8,294.0 281.8,289.2 281.8,304.6 280.8,309.5 273.6,311.4 267.4,308.4" fill="url(#g99)"/><polygon points="275.6,286.2 268.4,288.1 267.4,293.0 273.6,295.9 280.8,294.0 281.8,289.2" fill="#c6c38d"/>
<polygon points="86.3,307.0 93.2,310.2 93.2,312.6 86.3,309.4" fill="#e3e1a2"/><polygon points="93.2,310.2 101.0,308.1 101.0,310.6 93.2,312.6" fill="#cfcd94"/><polygon points="101.0,308.1 102.1,302.8 102.1,305.2 101.0,310.6" fill="#a9a774"/><polygon points="95.2,299.6 87.4,301.6 86.3,307.0 93.2,310.2 101.0,308.1 102.1,302.8" fill="#b9b881"/>
<polygon points="127.5,307.0 134.4,310.2 134.4,312.6 127.5,309.4" fill="#e3e1a2"/><polygon points="134.4,310.2 142.2,308.1 142.2,310.6 134.4,312.6" fill="#cfcd94"/><polygon points="142.2,308.1 143.3,302.8 143.3,305.2 142.2,310.6" fill="#a9a774"/><polygon points="136.4,299.6 128.6,301.6 127.5,307.0 134.4,310.2 142.2,308.1 143.3,302.8" fill="#b9b881"/>
<polygon points="353.8,287.8 360.1,290.7 367.2,288.8 368.2,284.0 368.2,305.8 367.2,310.6 360.1,312.5 353.8,309.6" fill="url(#g100)"/><polygon points="361.9,281.1 354.8,283.0 353.8,287.8 360.1,290.7 367.2,288.8 368.2,284.0" fill="#c6c38d"/>
<polygon points="418.1,307.9 425.0,311.1 425.0,313.6 418.1,310.3" fill="#e3e1a2"/><polygon points="425.0,311.1 432.8,309.0 432.8,311.5 425.0,313.6" fill="#cfcd94"/><polygon points="432.8,309.0 433.9,303.7 433.9,306.1 432.8,311.5" fill="#a9a774"/><polygon points="427.0,300.4 419.2,302.5 418.1,307.9 425.0,311.1 432.8,309.0 433.9,303.7" fill="#b9b881"/>
<polygon points="113.8,308.0 120.7,311.2 120.7,313.7 113.8,310.4" fill="#e3e1a2"/><polygon points="120.7,311.2 128.5,309.1 128.5,311.6 120.7,313.7" fill="#cfcd94"/><polygon points="128.5,309.1 129.6,303.8 129.6,306.2 128.5,311.6" fill="#a9a774"/><polygon points="122.7,300.5 114.9,302.6 113.8,308.0 120.7,311.2 128.5,309.1 129.6,303.8" fill="#b9b881"/>
<polygon points="417.0,308.2 423.9,311.4 423.9,313.9 417.0,310.6" fill="#e3e1a2"/><polygon points="423.9,311.4 431.7,309.3 431.7,311.8 423.9,313.9" fill="#cfcd94"/><polygon points="431.7,309.3 432.8,304.0 432.8,306.4 431.7,311.8" fill="#a9a774"/><polygon points="425.9,300.7 418.1,302.8 417.0,308.2 423.9,311.4 431.7,309.3 432.8,304.0" fill="#b9b881"/>
<polygon points="369.9,308.2 376.8,311.4 376.8,313.9 369.9,310.6" fill="#e3e1a2"/><polygon points="376.8,311.4 384.6,309.3 384.6,311.8 376.8,313.9" fill="#cfcd94"/><polygon points="384.6,309.3 385.7,304.0 385.7,306.4 384.6,311.8" fill="#a9a774"/><polygon points="378.8,300.7 371.0,302.8 369.9,308.2 376.8,311.4 384.6,309.3 385.7,304.0" fill="#b9b881"/>
<polygon points="21.5,309.0 28.4,312.2 28.4,314.7 21.5,311.4" fill="#e3e1a2"/><polygon points="28.4,312.2 36.3,310.1 36.3,312.6 28.4,314.7" fill="#cfcd94"/><polygon points="36.3,310.1 37.3,304.8 37.3,307.2 36.3,312.6" fill="#a9a774"/><polygon points="30.4,301.5 22.5,303.6 21.5,309.0 28.4,312.2 36.3,310.1 37.3,304.8" fill="#b9b881"/>
<polygon points="56.9,309.0 63.8,312.2 63.8,314.7 56.9,311.4" fill="#e3e1a2"/><polygon points="63.8,312.2 71.7,310.1 71.7,312.6 63.8,314.7" fill="#cfcd94"/><polygon points="71.7,310.1 72.7,304.8 72.7,307.2 71.7,312.6" fill="#a9a774"/><polygon points="65.8,301.5 57.9,303.6 56.9,309.0 63.8,312.2 71.7,310.1 72.7,304.8" fill="#b9b881"/>
<polygon points="362.9,309.5 369.8,312.7 369.8,315.2 362.9,311.9" fill="#e3e1a2"/><polygon points="369.8,312.7 377.7,310.6 377.7,313.1 369.8,315.2" fill="#cfcd94"/><polygon points="377.7,310.6 378.7,305.3 378.7,307.7 377.7,313.1" fill="#a9a774"/><polygon points="371.8,302.0 363.9,304.1 362.9,309.5 369.8,312.7 377.7,310.6 378.7,305.3" fill="#b9b881"/>
<polygon points="253.0,309.5 259.9,312.7 259.9,315.2 253.0,311.9" fill="#e3e1a2"/><polygon points="259.9,312.7 267.8,310.6 267.8,313.1 259.9,315.2" fill="#cfcd94"/><polygon points="267.8,310.6 268.8,305.3 268.8,307.7 267.8,313.1" fill="#a9a774"/><polygon points="261.9,302.0 254.0,304.1 253.0,309.5 259.9,312.7 267.8,310.6 268.8,305.3" fill="#b9b881"/>
<polygon points="33.4,296.4 40.2,299.6 48.0,297.5 49.0,292.2 49.0,308.0 48.0,313.3 40.2,315.4 33.4,312.2" fill="url(#g101)"/><polygon points="42.2,289.0 34.4,291.1 33.4,296.4 40.2,299.6 48.0,297.5 49.0,292.2" fill="#bdbb85"/>
<polygon points="356.1,310.1 363.0,313.3 363.0,315.8 356.1,312.5" fill="#e3e1a2"/><polygon points="363.0,313.3 370.9,311.2 370.9,313.7 363.0,315.8" fill="#cfcd94"/><polygon points="370.9,311.2 371.9,305.9 371.9,308.3 370.9,313.7" fill="#a9a774"/><polygon points="365.0,302.6 357.1,304.7 356.1,310.1 363.0,313.3 370.9,311.2 371.9,305.9" fill="#b9b881"/>
<polygon points="263.5,304.1 269.8,307.1 277.1,305.2 278.1,300.2 278.1,311.1 277.1,316.0 269.8,318.0 263.5,315.0" fill="url(#g102)"/><polygon points="271.8,297.2 264.5,299.2 263.5,304.1 269.8,307.1 277.1,305.2 278.1,300.2" fill="#c6c38d"/>
<polygon points="397.3,314.0 404.1,317.3 404.1,319.8 397.3,316.5" fill="#e3e1a2"/><polygon points="404.1,317.3 412.1,315.1 412.1,317.6 404.1,319.8" fill="#cfcd94"/><polygon points="412.1,315.1 413.1,309.7 413.1,312.2 412.1,317.6" fill="#a9a774"/><polygon points="406.3,306.4 398.3,308.6 397.3,314.0 404.1,317.3 412.1,315.1 413.1,309.7" fill="#b9b881"/>
<polygon points="345.0,305.9 351.3,308.9 358.6,307.0 359.6,302.0 359.6,312.5 358.6,317.4 351.3,319.4 345.0,316.4" fill="url(#g103)"/><polygon points="353.3,299.0 346.0,301.0 345.0,305.9 351.3,308.9 358.6,307.0 359.6,302.0" fill="#c6c38d"/>
<polygon points="423.9,315.7 430.8,319.0 430.8,321.5 423.9,318.2" fill="#e3e1a2"/><polygon points="430.8,319.0 438.8,316.8 438.8,319.3 430.8,321.5" fill="#cfcd94"/><polygon points="438.8,316.8 439.9,311.4 439.9,313.9 438.8,319.3" fill="#a9a774"/><polygon points="433.0,308.1 425.0,310.3 423.9,315.7 430.8,319.0 438.8,316.8 439.9,311.4" fill="#b9b881"/>
<polygon points="396.4,315.7 403.3,319.0 403.3,321.5 396.4,318.2" fill="#e3e1a2"/><polygon points="403.3,319.0 411.3,316.8 411.3,319.3 403.3,321.5" fill="#cfcd94"/><polygon points="411.3,316.8 412.4,311.4 412.4,313.9 411.3,319.3" fill="#a9a774"/><polygon points="405.5,308.1 397.5,310.3 396.4,315.7 403.3,319.0 411.3,316.8 412.4,311.4" fill="#b9b881"/>
<polygon points="50.9,315.9 57.8,319.2 57.8,321.7 50.9,318.4" fill="#e3e1a2"/><polygon points="57.8,319.2 65.8,317.0 65.8,319.5 57.8,321.7" fill="#cfcd94"/><polygon points="65.8,317.0 66.9,311.6 66.9,314.1 65.8,319.5" fill="#a9a774"/><polygon points="60.0,308.3 52.0,310.5 50.9,315.9 57.8,319.2 65.8,317.0 66.9,311.6" fill="#b9b881"/>
<polygon points="424.7,316.0 431.6,319.3 431.6,321.8 424.7,318.5" fill="#e3e1a2"/><polygon points="431.6,319.3 439.6,317.1 439.6,319.6 431.6,321.8" fill="#cfcd94"/><polygon points="439.6,317.1 440.7,311.7 440.7,314.2 439.6,319.6" fill="#a9a774"/><polygon points="433.8,308.4 425.8,310.6 424.7,316.0 431.6,319.3 439.6,317.1 440.7,311.7" fill="#b9b881"/>
<polygon points="273.8,277.5 281.3,281.1 289.9,278.8 291.0,272.9 294.0,314.1 292.9,320.0 284.3,322.3 276.8,318.7" fill="url(#g104)"/><polygon points="283.5,269.3 274.9,271.6 273.8,277.5 281.3,281.1 289.9,278.8 291.0,272.9" fill="#c9a45f"/>
<polygon points="288.2,291.2 295.1,294.5 303.2,292.3 304.2,286.8 306.1,314.2 305.1,319.7 297.0,321.9 290.1,318.6" fill="url(#g105)"/><polygon points="297.3,283.5 289.2,285.7 288.2,291.2 295.1,294.5 303.2,292.3 304.2,286.8" fill="#c6c38d"/>
<polygon points="251.1,303.8 258.0,307.1 265.9,304.9 266.9,299.5 266.9,315.4 265.9,320.8 258.0,322.9 251.1,319.7" fill="url(#g106)"/><polygon points="260.0,296.3 252.1,298.4 251.1,303.8 258.0,307.1 265.9,304.9 266.9,299.5" fill="#bdbb85"/>
<polygon points="347.1,317.3 354.0,320.6 354.0,323.1 347.1,319.8" fill="#e3e1a2"/><polygon points="354.0,320.6 362.0,318.5 362.0,321.0 354.0,323.1" fill="#cfcd94"/><polygon points="362.0,318.5 363.1,313.0 363.1,315.5 362.0,321.0" fill="#a9a774"/><polygon points="356.2,309.7 348.2,311.8 347.1,317.3 354.0,320.6 362.0,318.5 363.1,313.0" fill="#b9b881"/>
<polygon points="350.1,319.9 357.0,323.2 357.0,325.7 350.1,322.4" fill="#e3e1a2"/><polygon points="357.0,323.2 365.0,321.1 365.0,323.6 357.0,325.7" fill="#cfcd94"/><polygon points="365.0,321.1 366.1,315.6 366.1,318.1 365.0,323.6" fill="#a9a774"/><polygon points="359.2,312.3 351.2,314.4 350.1,319.9 357.0,323.2 365.0,321.1 366.1,315.6" fill="#b9b881"/>
<polygon points="189.2,321.3 196.1,324.7 196.1,327.2 189.2,323.8" fill="#e3e1a2"/><polygon points="196.1,324.7 204.2,322.5 204.2,325.0 196.1,327.2" fill="#cfcd94"/><polygon points="204.2,322.5 205.2,317.0 205.2,319.5 204.2,325.0" fill="#a9a774"/><polygon points="198.3,313.6 190.2,315.8 189.2,321.3 196.1,324.7 204.2,322.5 205.2,317.0" fill="#b9b881"/>
<polygon points="189.4,321.6 196.3,325.0 196.3,327.5 189.4,324.1" fill="#e3e1a2"/><polygon points="196.3,325.0 204.4,322.8 204.4,325.3 196.3,327.5" fill="#cfcd94"/><polygon points="204.4,322.8 205.4,317.3 205.4,319.8 204.4,325.3" fill="#a9a774"/><polygon points="198.5,313.9 190.4,316.1 189.4,321.6 196.3,325.0 204.4,322.8 205.4,317.3" fill="#b9b881"/>
<polygon points="338.4,321.9 345.3,325.3 345.3,327.8 338.4,324.4" fill="#e3e1a2"/><polygon points="345.3,325.3 353.4,323.1 353.4,325.6 345.3,327.8" fill="#cfcd94"/><polygon points="353.4,323.1 354.4,317.6 354.4,320.1 353.4,325.6" fill="#a9a774"/><polygon points="347.5,314.2 339.4,316.4 338.4,321.9 345.3,325.3 353.4,323.1 354.4,317.6" fill="#b9b881"/>
<polygon points="361.9,321.9 368.8,325.3 368.8,327.8 361.9,324.4" fill="#e3e1a2"/><polygon points="368.8,325.3 376.9,323.1 376.9,325.6 368.8,327.8" fill="#cfcd94"/><polygon points="376.9,323.1 377.9,317.6 377.9,320.1 376.9,325.6" fill="#a9a774"/><polygon points="371.0,314.2 362.9,316.4 361.9,321.9 368.8,325.3 376.9,323.1 377.9,317.6" fill="#b9b881"/>
<polygon points="320.3,312.5 326.6,315.5 334.0,313.6 334.9,308.5 334.9,320.3 334.0,325.4 326.6,327.4 320.3,324.3" fill="url(#g107)"/><polygon points="328.6,305.4 321.2,307.4 320.3,312.5 326.6,315.5 334.0,313.6 334.9,308.5" fill="#c6c38d"/>
<polygon points="176.4,323.2 183.3,326.6 183.3,329.1 176.4,325.7" fill="#e3e1a2"/><polygon points="183.3,326.6 191.4,324.4 191.4,326.9 183.3,329.1" fill="#cfcd94"/><polygon points="191.4,324.4 192.4,318.9 192.4,321.4 191.4,326.9" fill="#a9a774"/><polygon points="185.5,315.5 177.4,317.7 176.4,323.2 183.3,326.6 191.4,324.4 192.4,318.9" fill="#b9b881"/>
<polygon points="256.9,323.2 263.8,326.6 263.8,329.1 256.9,325.7" fill="#e3e1a2"/><polygon points="263.8,326.6 271.9,324.4 271.9,326.9 263.8,329.1" fill="#cfcd94"/><polygon points="271.9,324.4 272.9,318.9 272.9,321.4 271.9,326.9" fill="#a9a774"/><polygon points="266.0,315.5 257.9,317.7 256.9,323.2 263.8,326.6 271.9,324.4 272.9,318.9" fill="#b9b881"/>
<polygon points="175.7,323.6 182.6,327.0 182.6,329.5 175.7,326.1" fill="#e3e1a2"/><polygon points="182.6,327.0 190.7,324.8 190.7,327.3 182.6,329.5" fill="#cfcd94"/><polygon points="190.7,324.8 191.7,319.3 191.7,321.8 190.7,327.3" fill="#a9a774"/><polygon points="184.8,315.9 176.7,318.1 175.7,323.6 182.6,327.0 190.7,324.8 191.7,319.3" fill="#b9b881"/>
<polygon points="332.1,306.9 338.4,310.0 345.8,308.0 346.7,303.0 346.7,322.1 345.8,327.1 338.4,329.1 332.1,326.0" fill="url(#g108)"/><polygon points="340.4,299.9 333.0,301.9 332.1,306.9 338.4,310.0 345.8,308.0 346.7,303.0" fill="#c6c38d"/>
<polygon points="320.9,297.1 328.4,300.7 337.0,298.4 338.1,292.5 340.1,322.0 339.0,327.9 330.4,330.2 322.9,326.6" fill="url(#g109)"/><polygon points="330.6,288.9 322.0,291.2 320.9,297.1 328.4,300.7 337.0,298.4 338.1,292.5" fill="#c9a45f"/>
<polygon points="261.4,308.4 267.7,311.4 275.1,309.4 276.0,304.4 276.0,324.4 275.1,329.5 267.7,331.5 261.4,328.4" fill="url(#g110)"/><polygon points="269.7,301.3 262.3,303.3 261.4,308.4 267.7,311.4 275.1,309.4 276.0,304.4" fill="#c6c38d"/>
<polygon points="305.2,309.0 312.7,312.6 321.3,310.2 322.4,304.2 324.4,325.6 323.3,331.6 314.7,334.0 307.2,330.4" fill="url(#g111)"/><polygon points="314.9,300.6 306.3,303.0 305.2,309.0 312.7,312.6 321.3,310.2 322.4,304.2" fill="#c9a45f"/>
<polygon points="206.9,329.5 213.9,333.0 213.9,335.5 206.9,332.1" fill="#e3e1a2"/><polygon points="213.9,333.0 222.0,330.7 222.0,333.3 213.9,335.5" fill="#cfcd94"/><polygon points="222.0,330.7 223.1,325.1 223.1,327.7 222.0,333.3" fill="#a9a774"/><polygon points="216.1,321.7 208.0,323.9 206.9,329.5 213.9,333.0 222.0,330.7 223.1,325.1" fill="#b9b881"/>
<polygon points="207.7,330.2 214.7,333.6 214.7,336.1 207.7,332.7" fill="#e3e1a2"/><polygon points="214.7,333.6 222.8,331.4 222.8,333.9 214.7,336.1" fill="#cfcd94"/><polygon points="222.8,331.4 223.9,325.7 223.9,328.2 222.8,333.9" fill="#a9a774"/><polygon points="216.9,322.3 208.8,324.5 207.7,330.2 214.7,333.6 222.8,331.4 223.9,325.7" fill="#b9b881"/>
<polygon points="294.1,331.2 301.1,334.6 301.1,337.1 294.1,333.7" fill="#e3e1a2"/><polygon points="301.1,334.6 309.2,332.4 309.2,334.9 301.1,337.1" fill="#cfcd94"/><polygon points="309.2,332.4 310.3,326.7 310.3,329.2 309.2,334.9" fill="#a9a774"/><polygon points="303.3,323.3 295.2,325.5 294.1,331.2 301.1,334.6 309.2,332.4 310.3,326.7" fill="#b9b881"/>
<polygon points="346.1,331.8 353.1,335.2 353.1,337.7 346.1,334.3" fill="#e3e1a2"/><polygon points="353.1,335.2 361.2,333.0 361.2,335.5 353.1,337.7" fill="#cfcd94"/><polygon points="361.2,333.0 362.3,327.3 362.3,329.8 361.2,335.5" fill="#a9a774"/><polygon points="355.3,323.9 347.2,326.1 346.1,331.8 353.1,335.2 361.2,333.0 362.3,327.3" fill="#b9b881"/>
<polygon points="357.9,331.8 364.9,335.2 364.9,337.7 357.9,334.3" fill="#e3e1a2"/><polygon points="364.9,335.2 373.0,333.0 373.0,335.5 364.9,337.7" fill="#cfcd94"/><polygon points="373.0,333.0 374.1,327.3 374.1,329.8 373.0,335.5" fill="#a9a774"/><polygon points="367.1,323.9 359.0,326.1 357.9,331.8 364.9,335.2 373.0,333.0 374.1,327.3" fill="#b9b881"/>
<polygon points="86.1,334.6 93.1,338.0 93.1,340.6 86.1,337.1" fill="#e3e1a2"/><polygon points="93.1,338.0 101.3,335.8 101.3,338.3 93.1,340.6" fill="#cfcd94"/><polygon points="101.3,335.8 102.3,330.1 102.3,332.6 101.3,338.3" fill="#a9a774"/><polygon points="95.3,326.6 87.1,328.9 86.1,334.6 93.1,338.0 101.3,335.8 102.3,330.1" fill="#b9b881"/>
<polygon points="99.9,334.6 106.9,338.0 106.9,340.6 99.9,337.1" fill="#e3e1a2"/><polygon points="106.9,338.0 115.1,335.8 115.1,338.3 106.9,340.6" fill="#cfcd94"/><polygon points="115.1,335.8 116.1,330.1 116.1,332.6 115.1,338.3" fill="#a9a774"/><polygon points="109.1,326.6 100.9,328.9 99.9,334.6 106.9,338.0 115.1,335.8 116.1,330.1" fill="#b9b881"/>
<polygon points="46.8,337.6 53.9,341.1 53.9,343.6 46.8,340.1" fill="#e3e1a2"/><polygon points="53.9,341.1 62.1,338.8 62.1,341.4 53.9,343.6" fill="#cfcd94"/><polygon points="62.1,338.8 63.2,333.1 63.2,335.6 62.1,341.4" fill="#a9a774"/><polygon points="56.1,329.6 47.9,331.8 46.8,337.6 53.9,341.1 62.1,338.8 63.2,333.1" fill="#b9b881"/>
<polygon points="280.2,338.1 287.3,341.6 287.3,344.1 280.2,340.6" fill="#e3e1a2"/><polygon points="287.3,341.6 295.5,339.3 295.5,341.9 287.3,344.1" fill="#cfcd94"/><polygon points="295.5,339.3 296.6,333.6 296.6,336.1 295.5,341.9" fill="#a9a774"/><polygon points="289.5,330.1 281.3,332.3 280.2,338.1 287.3,341.6 295.5,339.3 296.6,333.6" fill="#b9b881"/>
<polygon points="19.3,338.5 26.4,342.0 26.4,344.5 19.3,341.1" fill="#e3e1a2"/><polygon points="26.4,342.0 34.6,339.7 34.6,342.3 26.4,344.5" fill="#cfcd94"/><polygon points="34.6,339.7 35.7,333.9 35.7,336.5 34.6,342.3" fill="#a9a774"/><polygon points="28.6,330.5 20.4,332.7 19.3,338.5 26.4,342.0 34.6,339.7 35.7,333.9" fill="#b9b881"/>
<polygon points="199.0,339.4 206.1,342.9 206.1,345.5 199.0,342.0" fill="#e3e1a2"/><polygon points="206.1,342.9 214.3,340.6 214.3,343.2 206.1,345.5" fill="#cfcd94"/><polygon points="214.3,340.6 215.4,334.8 215.4,337.4 214.3,343.2" fill="#a9a774"/><polygon points="208.3,331.3 200.1,333.6 199.0,339.4 206.1,342.9 214.3,340.6 215.4,334.8" fill="#b9b881"/>
<polygon points="157.8,339.4 164.9,342.9 164.9,345.5 157.8,342.0" fill="#e3e1a2"/><polygon points="164.9,342.9 173.1,340.6 173.1,343.2 164.9,345.5" fill="#cfcd94"/><polygon points="173.1,340.6 174.2,334.8 174.2,337.4 173.1,343.2" fill="#a9a774"/><polygon points="167.1,331.3 158.9,333.6 157.8,339.4 164.9,342.9 173.1,340.6 174.2,334.8" fill="#b9b881"/>
<polygon points="363.7,339.7 370.8,343.2 370.8,345.8 363.7,342.3" fill="#e3e1a2"/><polygon points="370.8,343.2 379.0,340.9 379.0,343.5 370.8,345.8" fill="#cfcd94"/><polygon points="379.0,340.9 380.1,335.1 380.1,337.7 379.0,343.5" fill="#a9a774"/><polygon points="373.0,331.6 364.8,333.9 363.7,339.7 370.8,343.2 379.0,340.9 380.1,335.1" fill="#b9b881"/>
<polygon points="158.5,340.0 165.6,343.5 165.6,346.1 158.5,342.6" fill="#e3e1a2"/><polygon points="165.6,343.5 173.8,341.2 173.8,343.8 165.6,346.1" fill="#cfcd94"/><polygon points="173.8,341.2 174.9,335.4 174.9,338.0 173.8,343.8" fill="#a9a774"/><polygon points="167.8,331.9 159.6,334.2 158.5,340.0 165.6,343.5 173.8,341.2 174.9,335.4" fill="#b9b881"/>
<polygon points="198.8,340.0 205.9,343.5 205.9,346.1 198.8,342.6" fill="#e3e1a2"/><polygon points="205.9,343.5 214.1,341.2 214.1,343.8 205.9,346.1" fill="#cfcd94"/><polygon points="214.1,341.2 215.2,335.4 215.2,338.0 214.1,343.8" fill="#a9a774"/><polygon points="208.1,331.9 199.9,334.2 198.8,340.0 205.9,343.5 214.1,341.2 215.2,335.4" fill="#b9b881"/>
<polygon points="33.0,340.5 40.1,344.0 40.1,346.6 33.0,343.1" fill="#e3e1a2"/><polygon points="40.1,344.0 48.3,341.7 48.3,344.3 40.1,346.6" fill="#cfcd94"/><polygon points="48.3,341.7 49.4,335.9 49.4,338.5 48.3,344.3" fill="#a9a774"/><polygon points="42.3,332.4 34.1,334.7 33.0,340.5 40.1,344.0 48.3,341.7 49.4,335.9" fill="#b9b881"/>
<polygon points="74.2,340.5 81.3,344.0 81.3,346.6 74.2,343.1" fill="#e3e1a2"/><polygon points="81.3,344.0 89.5,341.7 89.5,344.3 81.3,346.6" fill="#cfcd94"/><polygon points="89.5,341.7 90.6,335.9 90.6,338.5 89.5,344.3" fill="#a9a774"/><polygon points="83.5,332.4 75.3,334.7 74.2,340.5 81.3,344.0 89.5,341.7 90.6,335.9" fill="#b9b881"/>
<polygon points="133.1,340.5 140.2,344.0 140.2,346.6 133.1,343.1" fill="#e3e1a2"/><polygon points="140.2,344.0 148.4,341.7 148.4,344.3 140.2,346.6" fill="#cfcd94"/><polygon points="148.4,341.7 149.5,335.9 149.5,338.5 148.4,344.3" fill="#a9a774"/><polygon points="142.4,332.4 134.2,334.7 133.1,340.5 140.2,344.0 148.4,341.7 149.5,335.9" fill="#b9b881"/>
<polygon points="433.5,328.6 440.6,332.1 448.8,329.8 449.9,324.0 449.9,340.4 448.8,346.2 440.6,348.5 433.5,345.0" fill="url(#g112)"/><polygon points="442.8,320.5 434.6,322.8 433.5,328.6 440.6,332.1 448.8,329.8 449.9,324.0" fill="#bdbb85"/>
<polygon points="432.4,328.8 439.5,332.3 447.7,330.0 448.8,324.2 448.8,340.6 447.7,346.4 439.5,348.7 432.4,345.2" fill="url(#g113)"/><polygon points="441.7,320.7 433.5,323.0 432.4,328.8 439.5,332.3 447.7,330.0 448.8,324.2" fill="#bdbb85"/>
<polygon points="419.8,343.3 426.9,346.8 426.9,349.4 419.8,345.9" fill="#e3e1a2"/><polygon points="426.9,346.8 435.1,344.5 435.1,347.1 426.9,349.4" fill="#cfcd94"/><polygon points="435.1,344.5 436.2,338.7 436.2,341.3 435.1,347.1" fill="#a9a774"/><polygon points="429.1,335.2 420.9,337.5 419.8,343.3 426.9,346.8 435.1,344.5 436.2,338.7" fill="#b9b881"/>
<polygon points="105.5,346.4 112.7,350.0 112.7,352.6 105.5,349.0" fill="#e3e1a2"/><polygon points="112.7,350.0 121.0,347.7 121.0,350.3 112.7,352.6" fill="#cfcd94"/><polygon points="121.0,347.7 122.1,341.8 122.1,344.4 121.0,350.3" fill="#a9a774"/><polygon points="114.9,338.2 106.6,340.5 105.5,346.4 112.7,350.0 121.0,347.7 122.1,341.8" fill="#b9b881"/>
<polygon points="119.3,346.4 126.5,350.0 126.5,352.6 119.3,349.0" fill="#e3e1a2"/><polygon points="126.5,350.0 134.8,347.7 134.8,350.3 126.5,352.6" fill="#cfcd94"/><polygon points="134.8,347.7 135.9,341.8 135.9,344.4 134.8,350.3" fill="#a9a774"/><polygon points="128.7,338.2 120.4,340.5 119.3,346.4 126.5,350.0 134.8,347.7 135.9,341.8" fill="#b9b881"/>
<polygon points="110.9,321.1 117.8,324.5 125.9,322.3 126.9,316.5 132.8,345.7 131.8,351.5 123.7,353.7 116.8,350.3" fill="url(#g114)"/><polygon points="120.0,313.1 111.9,315.3 110.9,321.1 117.8,324.5 125.9,322.3 126.9,316.5" fill="#c9a45f"/>
<polygon points="141.7,323.1 149.2,326.8 157.8,324.4 158.9,318.3 163.8,345.6 162.7,351.7 154.1,354.1 146.6,350.4" fill="url(#g115)"/><polygon points="151.4,314.6 142.8,317.0 141.7,323.1 149.2,326.8 157.8,324.4 158.9,318.3" fill="#c9a45f"/>
<polygon points="301.7,347.9 308.9,351.5 308.9,354.1 301.7,350.5" fill="#e3e1a2"/><polygon points="308.9,351.5 317.2,349.2 317.2,351.8 308.9,354.1" fill="#cfcd94"/><polygon points="317.2,349.2 318.3,343.3 318.3,345.9 317.2,351.8" fill="#a9a774"/><polygon points="311.1,339.7 302.8,342.0 301.7,347.9 308.9,351.5 317.2,349.2 318.3,343.3" fill="#b9b881"/>
<polygon points="64.3,348.3 71.5,351.9 71.5,354.5 64.3,350.9" fill="#e3e1a2"/><polygon points="71.5,351.9 79.8,349.6 79.8,352.2 71.5,354.5" fill="#cfcd94"/><polygon points="79.8,349.6 80.9,343.7 80.9,346.3 79.8,352.2" fill="#a9a774"/><polygon points="73.7,340.1 65.4,342.4 64.3,348.3 71.5,351.9 79.8,349.6 80.9,343.7" fill="#b9b881"/>
<polygon points="328.0,325.4 335.5,329.2 344.1,326.7 345.2,320.6 347.1,348.0 346.0,354.1 337.4,356.6 329.9,352.8" fill="url(#g116)"/><polygon points="337.7,316.8 329.1,319.3 328.0,325.4 335.5,329.2 344.1,326.7 345.2,320.6" fill="#c9a45f"/>
<polygon points="420.6,336.7 427.7,340.2 435.9,337.9 437.0,332.0 437.0,348.5 435.9,354.4 427.7,356.8 420.6,353.2" fill="url(#g117)"/><polygon points="429.9,328.4 421.7,330.8 420.6,336.7 427.7,340.2 435.9,337.9 437.0,332.0" fill="#bdbb85"/>
<polygon points="38.8,355.3 46.0,358.9 46.0,361.5 38.8,357.9" fill="#e3e1a2"/><polygon points="46.0,358.9 54.3,356.5 54.3,359.2 46.0,361.5" fill="#cfcd94"/><polygon points="54.3,356.5 55.4,350.5 55.4,353.1 54.3,359.2" fill="#a9a774"/><polygon points="48.2,346.9 39.9,349.2 38.8,355.3 46.0,358.9 54.3,356.5 55.4,350.5" fill="#b9b881"/>
<polygon points="363.6,355.5 370.8,359.1 370.8,361.7 363.6,358.1" fill="#e3e1a2"/><polygon points="370.8,359.1 379.1,356.7 379.1,359.4 370.8,361.7" fill="#cfcd94"/><polygon points="379.1,356.7 380.2,350.7 380.2,353.3 379.1,359.4" fill="#a9a774"/><polygon points="373.0,347.1 364.7,349.4 363.6,355.5 370.8,359.1 379.1,356.7 380.2,350.7" fill="#b9b881"/>
<polygon points="109.5,356.3 116.7,359.9 116.7,362.5 109.5,358.9" fill="#e3e1a2"/><polygon points="116.7,359.9 125.0,357.5 125.0,360.2 116.7,362.5" fill="#cfcd94"/><polygon points="125.0,357.5 126.1,351.5 126.1,354.1 125.0,360.2" fill="#a9a774"/><polygon points="118.9,347.9 110.6,350.2 109.5,356.3 116.7,359.9 125.0,357.5 126.1,351.5" fill="#b9b881"/>
<polygon points="334.0,357.4 341.3,361.0 341.3,363.7 334.0,360.0" fill="#e3e1a2"/><polygon points="341.3,361.0 349.7,358.7 349.7,361.3 341.3,363.7" fill="#cfcd94"/><polygon points="349.7,358.7 350.8,352.6 350.8,355.2 349.7,361.3" fill="#a9a774"/><polygon points="343.5,348.9 335.1,351.3 334.0,357.4 341.3,361.0 349.7,358.7 350.8,352.6" fill="#b9b881"/>
<polygon points="3.4,358.3 10.7,362.0 10.7,364.6 3.4,360.9" fill="#e3e1a2"/><polygon points="10.7,362.0 19.1,359.6 19.1,362.2 10.7,364.6" fill="#cfcd94"/><polygon points="19.1,359.6 20.2,353.5 20.2,356.1 19.1,362.2" fill="#a9a774"/><polygon points="12.9,349.8 4.5,352.2 3.4,358.3 10.7,362.0 19.1,359.6 20.2,353.5" fill="#b9b881"/>
<polygon points="136.9,345.3 144.1,349.0 152.4,346.6 153.5,340.6 153.5,357.3 152.4,363.3 144.1,365.7 136.9,362.0" fill="url(#g118)"/><polygon points="146.3,336.9 138.0,339.3 136.9,345.3 144.1,349.0 152.4,346.6 153.5,340.6" fill="#bdbb85"/>
<polygon points="270.2,361.7 277.5,365.4 277.5,368.0 270.2,364.3" fill="#e3e1a2"/><polygon points="277.5,365.4 285.9,363.0 285.9,365.6 277.5,368.0" fill="#cfcd94"/><polygon points="285.9,363.0 287.0,356.9 287.0,359.5 285.9,365.6" fill="#a9a774"/><polygon points="279.7,353.2 271.3,355.6 270.2,361.7 277.5,365.4 285.9,363.0 287.0,356.9" fill="#b9b881"/>
<polygon points="408.7,348.4 415.9,352.1 424.2,349.7 425.3,343.6 425.3,360.4 424.2,366.5 415.9,368.9 408.7,365.2" fill="url(#g119)"/><polygon points="418.1,339.9 409.8,342.3 408.7,348.4 415.9,352.1 424.2,349.7 425.3,343.6" fill="#bdbb85"/>
<polygon points="13.2,364.1 20.5,367.8 20.5,370.5 13.2,366.7" fill="#e3e1a2"/><polygon points="20.5,367.8 28.9,365.4 28.9,368.1 20.5,370.5" fill="#cfcd94"/><polygon points="28.9,365.4 30.0,359.3 30.0,361.9 28.9,368.1" fill="#a9a774"/><polygon points="22.7,355.5 14.3,357.9 13.2,364.1 20.5,367.8 28.9,365.4 30.0,359.3" fill="#b9b881"/>
<polygon points="422.4,350.3 429.7,354.0 438.1,351.6 439.2,345.5 439.2,362.3 438.1,368.4 429.7,370.8 422.4,367.1" fill="url(#g120)"/><polygon points="431.9,341.8 423.5,344.2 422.4,350.3 429.7,354.0 438.1,351.6 439.2,345.5" fill="#bdbb85"/>
<polygon points="328.2,365.3 335.5,369.0 335.5,371.7 328.2,368.0" fill="#e3e1a2"/><polygon points="335.5,369.0 343.9,366.6 343.9,369.3 335.5,371.7" fill="#cfcd94"/><polygon points="343.9,366.6 345.0,360.4 345.0,363.1 343.9,369.3" fill="#a9a774"/><polygon points="337.7,356.7 329.3,359.1 328.2,365.3 335.5,369.0 343.9,366.6 345.0,360.4" fill="#b9b881"/>
<polygon points="428.2,354.2 435.5,357.9 443.9,355.5 445.0,349.3 445.0,366.2 443.9,372.4 435.5,374.8 428.2,371.1" fill="url(#g121)"/><polygon points="437.7,345.6 429.3,348.0 428.2,354.2 435.5,357.9 443.9,355.5 445.0,349.3" fill="#bdbb85"/>
<polygon points="262.4,356.6 269.7,360.4 278.1,357.9 279.2,351.7 279.2,368.6 278.1,374.8 269.7,377.3 262.4,373.5" fill="url(#g122)"/><polygon points="271.9,347.9 263.5,350.4 262.4,356.6 269.7,360.4 278.1,357.9 279.2,351.7" fill="#bdbb85"/>
<polygon points="3.3,372.0 10.7,375.8 10.7,378.5 3.3,374.7" fill="#e3e1a2"/><polygon points="10.7,375.8 19.2,373.4 19.2,376.0 10.7,378.5" fill="#cfcd94"/><polygon points="19.2,373.4 20.3,367.1 20.3,369.8 19.2,376.0" fill="#a9a774"/><polygon points="12.9,363.3 4.4,365.8 3.3,372.0 10.7,375.8 19.2,373.4 20.3,367.1" fill="#b9b881"/>
<polygon points="189.6,373.5 197.0,377.4 197.0,380.0 189.6,376.2" fill="#e3e1a2"/><polygon points="197.0,377.4 205.5,374.9 205.5,377.6 197.0,380.0" fill="#cfcd94"/><polygon points="205.5,374.9 206.6,368.6 206.6,371.3 205.5,377.6" fill="#a9a774"/><polygon points="199.2,364.8 190.7,367.2 189.6,373.5 197.0,377.4 205.5,374.9 206.6,368.6" fill="#b9b881"/>
<polygon points="60.2,374.0 67.6,377.9 67.6,380.5 60.2,376.7" fill="#e3e1a2"/><polygon points="67.6,377.9 76.1,375.4 76.1,378.1 67.6,380.5" fill="#cfcd94"/><polygon points="76.1,375.4 77.2,369.1 77.2,371.8 76.1,378.1" fill="#a9a774"/><polygon points="69.8,365.3 61.3,367.7 60.2,374.0 67.6,377.9 76.1,375.4 77.2,369.1" fill="#b9b881"/>
<polygon points="349.6,375.2 357.0,379.0 357.0,381.7 349.6,377.8" fill="#e3e1a2"/><polygon points="357.0,379.0 365.5,376.5 365.5,379.2 357.0,381.7" fill="#cfcd94"/><polygon points="365.5,376.5 366.6,370.2 366.6,372.8 365.5,379.2" fill="#a9a774"/><polygon points="359.2,366.3 350.7,368.8 349.6,375.2 357.0,379.0 365.5,376.5 366.6,370.2" fill="#b9b881"/>
<polygon points="363.4,375.2 370.8,379.0 370.8,381.7 363.4,377.8" fill="#e3e1a2"/><polygon points="370.8,379.0 379.3,376.5 379.3,379.2 370.8,381.7" fill="#cfcd94"/><polygon points="379.3,376.5 380.4,370.2 380.4,372.8 379.3,379.2" fill="#a9a774"/><polygon points="373.0,366.3 364.5,368.8 363.4,375.2 370.8,379.0 379.3,376.5 380.4,370.2" fill="#b9b881"/>
<polygon points="205.3,375.6 212.7,379.4 212.7,382.1 205.3,378.2" fill="#e3e1a2"/><polygon points="212.7,379.4 221.2,376.9 221.2,379.6 212.7,382.1" fill="#cfcd94"/><polygon points="221.2,376.9 222.3,370.6 222.3,373.2 221.2,379.6" fill="#a9a774"/><polygon points="214.9,366.7 206.4,369.2 205.3,375.6 212.7,379.4 221.2,376.9 222.3,370.6" fill="#b9b881"/>
<polygon points="289.7,375.6 297.1,379.4 297.1,382.1 289.7,378.2" fill="#e3e1a2"/><polygon points="297.1,379.4 305.6,376.9 305.6,379.6 297.1,382.1" fill="#cfcd94"/><polygon points="305.6,376.9 306.7,370.6 306.7,373.2 305.6,379.6" fill="#a9a774"/><polygon points="299.3,366.7 290.8,369.2 289.7,375.6 297.1,379.4 305.6,376.9 306.7,370.6" fill="#b9b881"/>
<polygon points="117.1,362.9 124.5,366.7 133.0,364.2 134.1,357.9 134.1,374.9 133.0,381.2 124.5,383.7 117.1,379.9" fill="url(#g123)"/><polygon points="126.7,354.1 118.2,356.6 117.1,362.9 124.5,366.7 133.0,364.2 134.1,357.9" fill="#bdbb85"/>
<polygon points="414.3,379.1 421.8,382.9 421.8,385.6 414.3,381.8" fill="#e3e1a2"/><polygon points="421.8,382.9 430.3,380.4 430.3,383.1 421.8,385.6" fill="#cfcd94"/><polygon points="430.3,380.4 431.5,374.0 431.5,376.7 430.3,383.1" fill="#a9a774"/><polygon points="424.0,370.2 415.5,372.7 414.3,379.1 421.8,382.9 430.3,380.4 431.5,374.0" fill="#b9b881"/>
<polygon points="371.1,383.0 378.6,386.9 378.6,389.6 371.1,385.7" fill="#e3e1a2"/><polygon points="378.6,386.9 387.2,384.4 387.2,387.1 378.6,389.6" fill="#cfcd94"/><polygon points="387.2,384.4 388.3,377.9 388.3,380.6 387.2,387.1" fill="#a9a774"/><polygon points="380.8,374.0 372.2,376.5 371.1,383.0 378.6,386.9 387.2,384.4 388.3,377.9" fill="#b9b881"/>
<polygon points="396.6,383.0 404.1,386.9 404.1,389.6 396.6,385.7" fill="#e3e1a2"/><polygon points="404.1,386.9 412.7,384.4 412.7,387.1 404.1,389.6" fill="#cfcd94"/><polygon points="412.7,384.4 413.8,377.9 413.8,380.6 412.7,387.1" fill="#a9a774"/><polygon points="406.3,374.0 397.7,376.5 396.6,383.0 404.1,386.9 412.7,384.4 413.8,377.9" fill="#b9b881"/>
<polygon points="209.2,383.4 216.7,387.3 216.7,390.0 209.2,386.1" fill="#e3e1a2"/><polygon points="216.7,387.3 225.3,384.8 225.3,387.5 216.7,390.0" fill="#cfcd94"/><polygon points="225.3,384.8 226.4,378.3 226.4,381.0 225.3,387.5" fill="#a9a774"/><polygon points="218.9,374.4 210.3,376.9 209.2,383.4 216.7,387.3 225.3,384.8 226.4,378.3" fill="#b9b881"/>
<polygon points="120.9,383.9 128.4,387.8 128.4,390.5 120.9,386.6" fill="#e3e1a2"/><polygon points="128.4,387.8 137.0,385.3 137.0,388.0 128.4,390.5" fill="#cfcd94"/><polygon points="137.0,385.3 138.1,378.8 138.1,381.5 137.0,388.0" fill="#a9a774"/><polygon points="130.6,374.9 122.0,377.4 120.9,383.9 128.4,387.8 137.0,385.3 138.1,378.8" fill="#b9b881"/>
<polygon points="406.6,369.9 414.0,373.8 422.5,371.3 423.6,364.9 423.6,382.1 422.5,388.5 414.0,391.0 406.6,387.1" fill="url(#g124)"/><polygon points="416.2,361.0 407.7,363.5 406.6,369.9 414.0,373.8 422.5,371.3 423.6,364.9" fill="#bdbb85"/>
<polygon points="384.9,385.0 392.4,388.9 392.4,391.6 384.9,387.7" fill="#e3e1a2"/><polygon points="392.4,388.9 401.0,386.4 401.0,389.1 392.4,391.6" fill="#cfcd94"/><polygon points="401.0,386.4 402.1,379.9 402.1,382.6 401.0,389.1" fill="#a9a774"/><polygon points="394.6,376.0 386.0,378.5 384.9,385.0 392.4,388.9 401.0,386.4 402.1,379.9" fill="#b9b881"/>
<polygon points="238.6,385.4 246.1,389.3 246.1,392.0 238.6,388.1" fill="#e3e1a2"/><polygon points="246.1,389.3 254.7,386.8 254.7,389.5 246.1,392.0" fill="#cfcd94"/><polygon points="254.7,386.8 255.8,380.3 255.8,383.0 254.7,389.5" fill="#a9a774"/><polygon points="248.3,376.4 239.7,378.9 238.6,385.4 246.1,389.3 254.7,386.8 255.8,380.3" fill="#b9b881"/>
<polygon points="93.5,385.8 101.0,389.7 101.0,392.4 93.5,388.5" fill="#e3e1a2"/><polygon points="101.0,389.7 109.6,387.2 109.6,389.9 101.0,392.4" fill="#cfcd94"/><polygon points="109.6,387.2 110.7,380.7 110.7,383.4 109.6,389.9" fill="#a9a774"/><polygon points="103.2,376.8 94.6,379.3 93.5,385.8 101.0,389.7 109.6,387.2 110.7,380.7" fill="#b9b881"/>
<polygon points="266.1,372.2 273.6,376.2 282.1,373.6 283.3,367.2 283.3,384.4 282.1,390.8 273.6,393.4 266.1,389.4" fill="url(#g125)"/><polygon points="275.8,363.2 267.3,365.8 266.1,372.2 273.6,376.2 282.1,373.6 283.3,367.2" fill="#bdbb85"/>
<polygon points="109.1,389.8 116.7,393.8 116.7,396.5 109.1,392.5" fill="#e3e1a2"/><polygon points="116.7,393.8 125.3,391.2 125.3,393.9 116.7,396.5" fill="#cfcd94"/><polygon points="125.3,391.2 126.5,384.7 126.5,387.4 125.3,393.9" fill="#a9a774"/><polygon points="118.9,380.7 110.3,383.3 109.1,389.8 116.7,393.8 125.3,391.2 126.5,384.7" fill="#b9b881"/>
<polygon points="248.3,391.3 255.9,395.3 255.9,398.0 248.3,394.1" fill="#e3e1a2"/><polygon points="255.9,395.3 264.5,392.7 264.5,395.5 255.9,398.0" fill="#cfcd94"/><polygon points="264.5,392.7 265.7,386.1 265.7,388.9 264.5,395.5" fill="#a9a774"/><polygon points="258.1,382.2 249.5,384.7 248.3,391.3 255.9,395.3 264.5,392.7 265.7,386.1" fill="#b9b881"/>
<polygon points="422.1,392.9 429.6,396.9 429.6,399.7 422.1,395.7" fill="#e3e1a2"/><polygon points="429.6,396.9 438.3,394.3 438.3,397.1 429.6,399.7" fill="#cfcd94"/><polygon points="438.3,394.3 439.5,387.7 439.5,390.5 438.3,397.1" fill="#a9a774"/><polygon points="432.0,383.7 423.3,386.3 422.1,392.9 429.6,396.9 438.3,394.3 439.5,387.7" fill="#b9b881"/>
<polygon points="363.2,392.9 370.7,396.9 370.7,399.7 363.2,395.7" fill="#e3e1a2"/><polygon points="370.7,396.9 379.4,394.3 379.4,397.1 370.7,399.7" fill="#cfcd94"/><polygon points="379.4,394.3 380.6,387.7 380.6,390.5 379.4,397.1" fill="#a9a774"/><polygon points="373.1,383.7 364.4,386.3 363.2,392.9 370.7,396.9 379.4,394.3 380.6,387.7" fill="#b9b881"/>
<polygon points="228.7,393.2 236.2,397.2 236.2,400.0 228.7,396.0" fill="#e3e1a2"/><polygon points="236.2,397.2 244.9,394.6 244.9,397.4 236.2,400.0" fill="#cfcd94"/><polygon points="244.9,394.6 246.1,388.0 246.1,390.8 244.9,397.4" fill="#a9a774"/><polygon points="238.6,384.0 229.9,386.6 228.7,393.2 236.2,397.2 244.9,394.6 246.1,388.0" fill="#b9b881"/>
<polygon points="140.5,393.7 148.0,397.8 148.0,400.5 140.5,396.5" fill="#e3e1a2"/><polygon points="148.0,397.8 156.8,395.1 156.8,397.9 148.0,400.5" fill="#cfcd94"/><polygon points="156.8,395.1 157.9,388.5 157.9,391.3 156.8,397.9" fill="#a9a774"/><polygon points="150.4,384.5 141.6,387.1 140.5,393.7 148.0,397.8 156.8,395.1 157.9,388.5" fill="#b9b881"/>
<polygon points="262.1,395.2 269.6,399.3 269.6,402.0 262.1,398.0" fill="#e3e1a2"/><polygon points="269.6,399.3 278.4,396.7 278.4,399.4 269.6,402.0" fill="#cfcd94"/><polygon points="278.4,396.7 279.5,390.0 279.5,392.8 278.4,399.4" fill="#a9a774"/><polygon points="272.0,386.0 263.2,388.6 262.1,395.2 269.6,399.3 278.4,396.7 279.5,390.0" fill="#b9b881"/>
<polygon points="406.4,383.6 414.0,387.6 422.6,385.0 423.8,378.4 423.8,395.8 422.6,402.4 414.0,405.0 406.4,401.0" fill="url(#g126)"/><polygon points="416.2,374.4 407.6,377.0 406.4,383.6 414.0,387.6 422.6,385.0 423.8,378.4" fill="#bdbb85"/>
<polygon points="271.8,399.2 279.4,403.2 279.4,406.0 271.8,401.9" fill="#e3e1a2"/><polygon points="279.4,403.2 288.2,400.6 288.2,403.3 279.4,406.0" fill="#cfcd94"/><polygon points="288.2,400.6 289.4,393.9 289.4,396.6 288.2,403.3" fill="#a9a774"/><polygon points="281.8,389.8 273.0,392.5 271.8,399.2 279.4,403.2 288.2,400.6 289.4,393.9" fill="#b9b881"/>
<polygon points="369.0,402.8 376.6,406.9 376.6,409.6 369.0,405.5" fill="#e3e1a2"/><polygon points="376.6,406.9 385.4,404.2 385.4,407.0 376.6,409.6" fill="#cfcd94"/><polygon points="385.4,404.2 386.6,397.5 386.6,400.2 385.4,407.0" fill="#a9a774"/><polygon points="379.0,393.4 370.2,396.0 369.0,402.8 376.6,406.9 385.4,404.2 386.6,397.5" fill="#b9b881"/>
<polygon points="400.4,402.8 408.0,406.9 408.0,409.6 400.4,405.5" fill="#e3e1a2"/><polygon points="408.0,406.9 416.8,404.2 416.8,407.0 408.0,409.6" fill="#cfcd94"/><polygon points="416.8,404.2 418.0,397.5 418.0,400.2 416.8,407.0" fill="#a9a774"/><polygon points="410.4,393.4 401.6,396.0 400.4,402.8 408.0,406.9 416.8,404.2 418.0,397.5" fill="#b9b881"/>
<polygon points="414.1,402.8 421.7,406.9 421.7,409.6 414.1,405.5" fill="#e3e1a2"/><polygon points="421.7,406.9 430.5,404.2 430.5,407.0 421.7,409.6" fill="#cfcd94"/><polygon points="430.5,404.2 431.7,397.5 431.7,400.2 430.5,407.0" fill="#a9a774"/><polygon points="424.1,393.4 415.3,396.0 414.1,402.8 421.7,406.9 430.5,404.2 431.7,397.5" fill="#b9b881"/>
<polygon points="154.2,375.0 161.7,379.0 170.3,376.4 171.4,369.8 175.3,401.2 174.2,407.8 165.6,410.4 158.1,406.4" fill="url(#g127)"/><polygon points="163.9,365.8 155.3,368.4 154.2,375.0 161.7,379.0 170.3,376.4 171.4,369.8" fill="#c9a45f"/>
<polygon points="277.7,405.1 285.3,409.2 285.3,412.0 277.7,407.9" fill="#e3e1a2"/><polygon points="285.3,409.2 294.1,406.5 294.1,409.3 285.3,412.0" fill="#cfcd94"/><polygon points="294.1,406.5 295.3,399.7 295.3,402.5 294.1,409.3" fill="#a9a774"/><polygon points="287.7,395.6 278.9,398.3 277.7,405.1 285.3,409.2 294.1,406.5 295.3,399.7" fill="#b9b881"/>
<polygon points="171.9,382.8 179.4,386.8 188.0,384.2 189.1,377.6 193.0,403.2 191.9,409.8 183.3,412.4 175.8,408.4" fill="url(#g128)"/><polygon points="181.6,373.6 173.0,376.2 171.9,382.8 179.4,386.8 188.0,384.2 189.1,377.6" fill="#c9a45f"/>
<polygon points="150.0,411.0 157.7,415.2 157.7,418.0 150.0,413.8" fill="#e3e1a2"/><polygon points="157.7,415.2 166.6,412.5 166.6,415.3 157.7,418.0" fill="#cfcd94"/><polygon points="166.6,412.5 167.8,405.6 167.8,408.4 166.6,415.3" fill="#a9a774"/><polygon points="160.1,401.4 151.2,404.1 150.0,411.0 157.7,415.2 166.6,412.5 167.8,405.6" fill="#b9b881"/>
<polygon points="285.4,412.9 293.1,417.1 293.1,419.9 285.4,415.7" fill="#e3e1a2"/><polygon points="293.1,417.1 302.0,414.4 302.0,417.2 293.1,419.9" fill="#cfcd94"/><polygon points="302.0,414.4 303.2,407.5 303.2,410.3 302.0,417.2" fill="#a9a774"/><polygon points="295.5,403.3 286.6,406.0 285.4,412.9 293.1,417.1 302.0,414.4 303.2,407.5" fill="#b9b881"/>
<polygon points="238.4,399.7 246.0,403.8 254.9,401.1 256.0,394.2 256.0,411.9 254.9,418.8 246.0,421.6 238.4,417.4" fill="url(#g129)"/><polygon points="248.4,390.0 239.5,392.8 238.4,399.7 246.0,403.8 254.9,401.1 256.0,394.2" fill="#bdbb85"/>
<polygon points="212.4,412.6 218.0,415.6 218.0,419.6 212.4,416.6" fill="#e06a34"/><polygon points="218.0,415.6 224.3,413.6 224.3,417.6 218.0,419.6" fill="#d8602e"/><polygon points="224.3,413.6 225.2,408.6 225.2,412.6 224.3,417.6" fill="#b84e24"/><polygon points="219.6,405.6 213.3,407.6 212.4,412.6 218.0,415.6 224.3,413.6 225.2,408.6" fill="#c9582e"/>
<polygon points="232.3,422.9 240.1,427.2 240.1,430.0 232.3,425.7" fill="#e3e1a2"/><polygon points="240.1,427.2 249.1,424.4 249.1,427.2 240.1,430.0" fill="#cfcd94"/><polygon points="249.1,424.4 250.3,417.3 250.3,420.1 249.1,427.2" fill="#a9a774"/><polygon points="242.5,413.0 233.5,415.8 232.3,422.9 240.1,427.2 249.1,424.4 250.3,417.3" fill="#b9b881"/>
<polygon points="222.4,432.7 230.3,437.1 230.3,440.0 222.4,435.6" fill="#e3e1a2"/><polygon points="230.3,437.1 239.4,434.3 239.4,437.1 230.3,440.0" fill="#cfcd94"/><polygon points="239.4,434.3 240.6,427.0 240.6,429.9 239.4,437.1" fill="#a9a774"/><polygon points="232.7,422.6 223.6,425.5 222.4,432.7 230.3,437.1 239.4,434.3 240.6,427.0" fill="#b9b881"/>
<polygon points="110.4,433.9 118.3,438.3 118.3,441.2 110.4,436.8" fill="#e3e1a2"/><polygon points="118.3,438.3 127.4,435.5 127.4,438.3 118.3,441.2" fill="#cfcd94"/><polygon points="127.4,435.5 128.6,428.2 128.6,431.1 127.4,438.3" fill="#a9a774"/><polygon points="120.7,423.8 111.6,426.7 110.4,433.9 118.3,438.3 127.4,435.5 128.6,428.2" fill="#b9b881"/>
<polygon points="238.1,434.6 246.0,439.1 246.0,441.9 238.1,437.5" fill="#e3e1a2"/><polygon points="246.0,439.1 255.1,436.2 255.1,439.0 246.0,441.9" fill="#cfcd94"/><polygon points="255.1,436.2 256.3,428.9 256.3,431.8 255.1,439.0" fill="#a9a774"/><polygon points="248.4,424.5 239.3,427.4 238.1,434.6 246.0,439.1 255.1,436.2 256.3,428.9" fill="#b9b881"/>
<polygon points="353.0,424.7 360.9,429.1 370.0,426.2 371.2,418.9 371.2,437.1 370.0,444.4 360.9,447.3 353.0,442.9" fill="url(#g130)"/><polygon points="363.3,414.5 354.2,417.4 353.0,424.7 360.9,429.1 370.0,426.2 371.2,418.9" fill="#bdbb85"/>
<polygon points="307.7,444.2 315.7,448.7 315.7,451.6 307.7,447.1" fill="#e3e1a2"/><polygon points="315.7,448.7 324.9,445.8 324.9,448.7 315.7,451.6" fill="#cfcd94"/><polygon points="324.9,445.8 326.1,438.3 326.1,441.2 324.9,448.7" fill="#a9a774"/><polygon points="318.1,433.8 308.9,436.7 307.7,444.2 315.7,448.7 324.9,445.8 326.1,438.3" fill="#b9b881"/>
<polygon points="210.5,444.6 218.5,449.1 218.5,452.0 210.5,447.5" fill="#e3e1a2"/><polygon points="218.5,449.1 227.7,446.2 227.7,449.1 218.5,452.0" fill="#cfcd94"/><polygon points="227.7,446.2 228.9,438.7 228.9,441.6 227.7,449.1" fill="#a9a774"/><polygon points="220.9,434.2 211.7,437.1 210.5,444.6 218.5,449.1 227.7,446.2 228.9,438.7" fill="#b9b881"/>
<polygon points="243.9,444.6 251.9,449.1 251.9,452.0 243.9,447.5" fill="#e3e1a2"/><polygon points="251.9,449.1 261.1,446.2 261.1,449.1 251.9,452.0" fill="#cfcd94"/><polygon points="261.1,446.2 262.3,438.7 262.3,441.6 261.1,449.1" fill="#a9a774"/><polygon points="254.3,434.2 245.1,437.1 243.9,444.6 251.9,449.1 261.1,446.2 262.3,438.7" fill="#b9b881"/>
<polygon points="132.8,445.0 140.8,449.5 140.8,452.4 132.8,447.9" fill="#e3e1a2"/><polygon points="140.8,449.5 150.0,446.6 150.0,449.5 140.8,452.4" fill="#cfcd94"/><polygon points="150.0,446.6 151.2,439.1 151.2,442.0 150.0,449.5" fill="#a9a774"/><polygon points="143.2,434.6 134.0,437.5 132.8,445.0 140.8,449.5 150.0,446.6 151.2,439.1" fill="#b9b881"/>
<polygon points="368.7,430.6 376.6,435.1 385.7,432.1 386.9,424.7 386.9,443.0 385.7,450.5 376.6,453.4 368.7,448.9" fill="url(#g131)"/><polygon points="379.0,420.2 369.9,423.1 368.7,430.6 376.6,435.1 385.7,432.1 386.9,424.7" fill="#bdbb85"/>
<polygon points="321.5,446.1 329.5,450.6 329.5,453.5 321.5,449.0" fill="#e3e1a2"/><polygon points="329.5,450.6 338.7,447.7 338.7,450.6 329.5,453.5" fill="#cfcd94"/><polygon points="338.7,447.7 339.9,440.2 339.9,443.1 338.7,450.6" fill="#a9a774"/><polygon points="331.9,435.7 322.7,438.6 321.5,446.1 329.5,450.6 338.7,447.7 339.9,440.2" fill="#b9b881"/>
<polygon points="202.6,454.4 210.7,459.1 210.7,462.0 202.6,457.4" fill="#e3e1a2"/><polygon points="210.7,459.1 220.0,456.1 220.0,459.0 210.7,462.0" fill="#cfcd94"/><polygon points="220.0,456.1 221.2,448.4 221.2,451.4 220.0,459.0" fill="#a9a774"/><polygon points="213.1,443.8 203.8,446.8 202.6,454.4 210.7,459.1 220.0,456.1 221.2,448.4" fill="#b9b881"/>
<polygon points="183.0,454.4 191.1,459.1 191.1,462.0 183.0,457.4" fill="#e3e1a2"/><polygon points="191.1,459.1 200.4,456.1 200.4,459.0 191.1,462.0" fill="#cfcd94"/><polygon points="200.4,456.1 201.6,448.4 201.6,451.4 200.4,459.0" fill="#a9a774"/><polygon points="193.5,443.8 184.2,446.8 183.0,454.4 191.1,459.1 200.4,456.1 201.6,448.4" fill="#b9b881"/>
<polygon points="376.3,456.1 384.4,460.7 384.4,463.6 376.3,459.0" fill="#e3e1a2"/><polygon points="384.4,460.7 393.7,457.7 393.7,460.6 384.4,463.6" fill="#cfcd94"/><polygon points="393.7,457.7 394.9,450.0 394.9,452.9 393.7,460.6" fill="#a9a774"/><polygon points="386.8,445.4 377.5,448.4 376.3,456.1 384.4,460.7 393.7,457.7 394.9,450.0" fill="#b9b881"/>
<polygon points="249.7,456.4 257.8,461.0 257.8,463.9 249.7,459.3" fill="#e3e1a2"/><polygon points="257.8,461.0 267.1,458.0 267.1,460.9 257.8,463.9" fill="#cfcd94"/><polygon points="267.1,458.0 268.3,450.3 268.3,453.2 267.1,460.9" fill="#a9a774"/><polygon points="260.2,445.7 250.9,448.7 249.7,456.4 257.8,461.0 267.1,458.0 268.3,450.3" fill="#b9b881"/>
<polygon points="360.7,442.3 368.7,446.9 377.9,443.9 379.1,436.3 379.1,454.9 377.9,462.5 368.7,465.5 360.7,460.9" fill="url(#g132)"/><polygon points="371.1,431.7 361.9,434.7 360.7,442.3 368.7,446.9 377.9,443.9 379.1,436.3" fill="#bdbb85"/>
</g>
<defs><linearGradient id="g0" gradientUnits="userSpaceOnUse" x1="341.4" y1="177.1" x2="353.0" y2="177.1"><stop offset="0" stop-color="#b9b788"/><stop offset="0.18" stop-color="#d8d69f"/><stop offset="0.42" stop-color="#e9e7b0"/><stop offset="0.6" stop-color="#e9e7b0"/><stop offset="0.85" stop-color="#d8d69f"/><stop offset="1" stop-color="#b9b788"/></linearGradient><linearGradient id="g1" gradientUnits="userSpaceOnUse" x1="351.2" y1="177.1" x2="362.8" y2="177.1"><stop offset="0" stop-color="#b9b788"/><stop offset="0.18" stop-color="#d8d69f"/><stop offset="0.42" stop-color="#e9e7b0"/><stop offset="0.6" stop-color="#e9e7b0"/><stop offset="0.85" stop-color="#d8d69f"/><stop offset="1" stop-color="#b9b788"/></linearGradient><linearGradient id="g2" gradientUnits="userSpaceOnUse" x1="284.5" y1="184.9" x2="296.1" y2="184.9"><stop offset="0" stop-color="#b9b788"/><stop offset="0.18" stop-color="#d8d69f"/><stop offset="0.42" stop-color="#e9e7b0"/><stop offset="0.6" stop-color="#e9e7b0"/><stop offset="0.85" stop-color="#d8d69f"/><stop offset="1" stop-color="#b9b788"/></linearGradient><linearGradient id="g3" gradientUnits="userSpaceOnUse" x1="341.4" y1="186.9" x2="353.0" y2="186.9"><stop offset="0" stop-color="#b9b788"/><stop offset="0.18" stop-color="#d8d69f"/><stop offset="0.42" stop-color="#e9e7b0"/><stop offset="0.6" stop-color="#e9e7b0"/><stop offset="0.85" stop-color="#d8d69f"/><stop offset="1" stop-color="#b9b788"/></linearGradient><linearGradient id="g4" gradientUnits="userSpaceOnUse" x1="292.2" y1="192.8" x2="304.0" y2="192.8"><stop offset="0" stop-color="#b9b788"/><stop offset="0.18" stop-color="#d8d69f"/><stop offset="0.42" stop-color="#e9e7b0"/><stop offset="0.6" stop-color="#e9e7b0"/><stop offset="0.85" stop-color="#d8d69f"/><stop offset="1" stop-color="#b9b788"/></linearGradient><linearGradient id="g5" gradientUnits="userSpaceOnUse" x1="408.3" y1="195.1" x2="420.1" y2="195.1"><stop offset="0" stop-color="#b9b788"/><stop offset="0.18" stop-color="#d8d69f"/><stop offset="0.42" stop-color="#e9e7b0"/><stop offset="0.6" stop-color="#e9e7b0"/><stop offset="0.85" stop-color="#d8d69f"/><stop offset="1" stop-color="#b9b788"/></linearGradient><linearGradient id="g6" gradientUnits="userSpaceOnUse" x1="353.1" y1="192.8" x2="364.9" y2="192.8"><stop offset="0" stop-color="#b9b788"/><stop offset="0.18" stop-color="#d8d69f"/><stop offset="0.42" stop-color="#e9e7b0"/><stop offset="0.6" stop-color="#e9e7b0"/><stop offset="0.85" stop-color="#d8d69f"/><stop offset="1" stop-color="#b9b788"/></linearGradient><linearGradient id="g7" gradientUnits="userSpaceOnUse" x1="369.4" y1="175.0" x2="386.6" y2="175.0"><stop offset="0" stop-color="#b05e29"/><stop offset="0.18" stop-color="#d97234"/><stop offset="0.42" stop-color="#ea8444"/><stop offset="0.6" stop-color="#ea8444"/><stop offset="0.85" stop-color="#d97234"/><stop offset="1" stop-color="#b05e29"/></linearGradient><linearGradient id="g8" gradientUnits="userSpaceOnUse" x1="300.1" y1="200.6" x2="311.9" y2="200.6"><stop offset="0" stop-color="#b9b788"/><stop offset="0.18" stop-color="#d8d69f"/><stop offset="0.42" stop-color="#e9e7b0"/><stop offset="0.6" stop-color="#e9e7b0"/><stop offset="0.85" stop-color="#d8d69f"/><stop offset="1" stop-color="#b9b788"/></linearGradient><linearGradient id="g9" gradientUnits="userSpaceOnUse" x1="272.0" y1="190.0" x2="286.0" y2="189.5"><stop offset="0" stop-color="#c09244"/><stop offset="0.18" stop-color="#ddb463"/><stop offset="0.42" stop-color="#efcb76"/><stop offset="0.6" stop-color="#efcb76"/><stop offset="0.85" stop-color="#ddb463"/><stop offset="1" stop-color="#c09244"/></linearGradient><linearGradient id="g10" gradientUnits="userSpaceOnUse" x1="410.3" y1="201.0" x2="422.1" y2="201.0"><stop offset="0" stop-color="#b9b788"/><stop offset="0.18" stop-color="#d8d69f"/><stop offset="0.42" stop-color="#e9e7b0"/><stop offset="0.6" stop-color="#e9e7b0"/><stop offset="0.85" stop-color="#d8d69f"/><stop offset="1" stop-color="#b9b788"/></linearGradient><linearGradient id="g11" gradientUnits="userSpaceOnUse" x1="365.3" y1="188.5" x2="381.4" y2="188.8"><stop offset="0" stop-color="#b05e29"/><stop offset="0.18" stop-color="#d97234"/><stop offset="0.42" stop-color="#ea8444"/><stop offset="0.6" stop-color="#ea8444"/><stop offset="0.85" stop-color="#d97234"/><stop offset="1" stop-color="#b05e29"/></linearGradient><linearGradient id="g12" gradientUnits="userSpaceOnUse" x1="383.6" y1="187.5" x2="399.8" y2="187.9"><stop offset="0" stop-color="#b97432"/><stop offset="0.18" stop-color="#dd8f3e"/><stop offset="0.42" stop-color="#efa44c"/><stop offset="0.6" stop-color="#efa44c"/><stop offset="0.85" stop-color="#dd8f3e"/><stop offset="1" stop-color="#b97432"/></linearGradient><linearGradient id="g13" gradientUnits="userSpaceOnUse" x1="390.1" y1="196.6" x2="406.3" y2="196.6"><stop offset="0" stop-color="#c09244"/><stop offset="0.18" stop-color="#ddb463"/><stop offset="0.42" stop-color="#efcb76"/><stop offset="0.6" stop-color="#efcb76"/><stop offset="0.85" stop-color="#ddb463"/><stop offset="1" stop-color="#c09244"/></linearGradient><linearGradient id="g14" gradientUnits="userSpaceOnUse" x1="339.2" y1="210.4" x2="351.2" y2="210.4"><stop offset="0" stop-color="#b9b788"/><stop offset="0.18" stop-color="#d8d69f"/><stop offset="0.42" stop-color="#e9e7b0"/><stop offset="0.6" stop-color="#e9e7b0"/><stop offset="0.85" stop-color="#d8d69f"/><stop offset="1" stop-color="#b9b788"/></linearGradient><linearGradient id="g15" gradientUnits="userSpaceOnUse" x1="294.1" y1="210.4" x2="306.1" y2="210.4"><stop offset="0" stop-color="#b9b788"/><stop offset="0.18" stop-color="#d8d69f"/><stop offset="0.42" stop-color="#e9e7b0"/><stop offset="0.6" stop-color="#e9e7b0"/><stop offset="0.85" stop-color="#d8d69f"/><stop offset="1" stop-color="#b9b788"/></linearGradient><linearGradient id="g16" gradientUnits="userSpaceOnUse" x1="408.9" y1="210.4" x2="422.9" y2="210.4"><stop offset="0" stop-color="#b9b788"/><stop offset="0.18" stop-color="#d8d69f"/><stop offset="0.42" stop-color="#e9e7b0"/><stop offset="0.6" stop-color="#e9e7b0"/><stop offset="0.85" stop-color="#d8d69f"/><stop offset="1" stop-color="#b9b788"/></linearGradient><linearGradient id="g17" gradientUnits="userSpaceOnUse" x1="245.4" y1="210.9" x2="259.3" y2="208.7"><stop offset="0" stop-color="#c09244"/><stop offset="0.18" stop-color="#ddb463"/><stop offset="0.42" stop-color="#efcb76"/><stop offset="0.6" stop-color="#efcb76"/><stop offset="0.85" stop-color="#ddb463"/><stop offset="1" stop-color="#c09244"/></linearGradient><linearGradient id="g18" gradientUnits="userSpaceOnUse" x1="380.4" y1="214.4" x2="392.6" y2="214.4"><stop offset="0" stop-color="#b9b788"/><stop offset="0.18" stop-color="#d8d69f"/><stop offset="0.42" stop-color="#e9e7b0"/><stop offset="0.6" stop-color="#e9e7b0"/><stop offset="0.85" stop-color="#d8d69f"/><stop offset="1" stop-color="#b9b788"/></linearGradient><linearGradient id="g19" gradientUnits="userSpaceOnUse" x1="364.7" y1="218.3" x2="376.9" y2="218.3"><stop offset="0" stop-color="#b9b788"/><stop offset="0.18" stop-color="#d8d69f"/><stop offset="0.42" stop-color="#e9e7b0"/><stop offset="0.6" stop-color="#e9e7b0"/><stop offset="0.85" stop-color="#d8d69f"/><stop offset="1" stop-color="#b9b788"/></linearGradient><linearGradient id="g20" gradientUnits="userSpaceOnUse" x1="258.7" y1="218.3" x2="270.9" y2="218.3"><stop offset="0" stop-color="#b9b788"/><stop offset="0.18" stop-color="#d8d69f"/><stop offset="0.42" stop-color="#e9e7b0"/><stop offset="0.6" stop-color="#e9e7b0"/><stop offset="0.85" stop-color="#d8d69f"/><stop offset="1" stop-color="#b9b788"/></linearGradient><linearGradient id="g21" gradientUnits="userSpaceOnUse" x1="133.6" y1="221.7" x2="147.0" y2="221.7"><stop offset="0" stop-color="#b3b17c"/><stop offset="0.18" stop-color="#d6d49c"/><stop offset="0.42" stop-color="#e6e4a8"/><stop offset="0.6" stop-color="#e6e4a8"/><stop offset="0.85" stop-color="#d6d49c"/><stop offset="1" stop-color="#b3b17c"/></linearGradient><linearGradient id="g22" gradientUnits="userSpaceOnUse" x1="384.2" y1="226.1" x2="396.6" y2="226.1"><stop offset="0" stop-color="#b9b788"/><stop offset="0.18" stop-color="#d8d69f"/><stop offset="0.42" stop-color="#e9e7b0"/><stop offset="0.6" stop-color="#e9e7b0"/><stop offset="0.85" stop-color="#d8d69f"/><stop offset="1" stop-color="#b9b788"/></linearGradient><linearGradient id="g23" gradientUnits="userSpaceOnUse" x1="299.9" y1="222.2" x2="312.1" y2="222.2"><stop offset="0" stop-color="#b9b788"/><stop offset="0.18" stop-color="#d8d69f"/><stop offset="0.42" stop-color="#e9e7b0"/><stop offset="0.6" stop-color="#e9e7b0"/><stop offset="0.85" stop-color="#d8d69f"/><stop offset="1" stop-color="#b9b788"/></linearGradient><linearGradient id="g24" gradientUnits="userSpaceOnUse" x1="408.0" y1="226.5" x2="420.4" y2="226.5"><stop offset="0" stop-color="#b9b788"/><stop offset="0.18" stop-color="#d8d69f"/><stop offset="0.42" stop-color="#e9e7b0"/><stop offset="0.6" stop-color="#e9e7b0"/><stop offset="0.85" stop-color="#d8d69f"/><stop offset="1" stop-color="#b9b788"/></linearGradient><linearGradient id="g25" gradientUnits="userSpaceOnUse" x1="191.4" y1="211.7" x2="205.3" y2="209.9"><stop offset="0" stop-color="#b97432"/><stop offset="0.18" stop-color="#dd8f3e"/><stop offset="0.42" stop-color="#efa44c"/><stop offset="0.6" stop-color="#efa44c"/><stop offset="0.85" stop-color="#dd8f3e"/><stop offset="1" stop-color="#b97432"/></linearGradient><linearGradient id="g26" gradientUnits="userSpaceOnUse" x1="182.1" y1="222.6" x2="195.0" y2="220.6"><stop offset="0" stop-color="#c09244"/><stop offset="0.18" stop-color="#ddb463"/><stop offset="0.42" stop-color="#efcb76"/><stop offset="0.6" stop-color="#efcb76"/><stop offset="0.85" stop-color="#ddb463"/><stop offset="1" stop-color="#c09244"/></linearGradient><linearGradient id="g27" gradientUnits="userSpaceOnUse" x1="206.6" y1="224.0" x2="220.5" y2="222.2"><stop offset="0" stop-color="#c09244"/><stop offset="0.18" stop-color="#ddb463"/><stop offset="0.42" stop-color="#efcb76"/><stop offset="0.6" stop-color="#efcb76"/><stop offset="0.85" stop-color="#ddb463"/><stop offset="1" stop-color="#c09244"/></linearGradient><linearGradient id="g28" gradientUnits="userSpaceOnUse" x1="368.5" y1="230.1" x2="380.9" y2="230.1"><stop offset="0" stop-color="#b9b788"/><stop offset="0.18" stop-color="#d8d69f"/><stop offset="0.42" stop-color="#e9e7b0"/><stop offset="0.6" stop-color="#e9e7b0"/><stop offset="0.85" stop-color="#d8d69f"/><stop offset="1" stop-color="#b9b788"/></linearGradient><linearGradient id="g29" gradientUnits="userSpaceOnUse" x1="402.1" y1="226.5" x2="414.5" y2="226.5"><stop offset="0" stop-color="#b9b788"/><stop offset="0.18" stop-color="#d8d69f"/><stop offset="0.42" stop-color="#e9e7b0"/><stop offset="0.6" stop-color="#e9e7b0"/><stop offset="0.85" stop-color="#d8d69f"/><stop offset="1" stop-color="#b9b788"/></linearGradient><linearGradient id="g30" gradientUnits="userSpaceOnUse" x1="309.8" y1="195.3" x2="325.7" y2="194.2"><stop offset="0" stop-color="#7e0822"/><stop offset="0.18" stop-color="#a30e2a"/><stop offset="0.42" stop-color="#b6122e"/><stop offset="0.6" stop-color="#b6122e"/><stop offset="0.85" stop-color="#a30e2a"/><stop offset="1" stop-color="#7e0822"/></linearGradient><linearGradient id="g31" gradientUnits="userSpaceOnUse" x1="327.4" y1="213.1" x2="343.5" y2="211.8"><stop offset="0" stop-color="#b05e29"/><stop offset="0.18" stop-color="#d97234"/><stop offset="0.42" stop-color="#ea8444"/><stop offset="0.6" stop-color="#ea8444"/><stop offset="0.85" stop-color="#d97234"/><stop offset="1" stop-color="#b05e29"/></linearGradient><linearGradient id="g32" gradientUnits="userSpaceOnUse" x1="378.4" y1="212.6" x2="393.6" y2="212.3"><stop offset="0" stop-color="#b97432"/><stop offset="0.18" stop-color="#dd8f3e"/><stop offset="0.42" stop-color="#efa44c"/><stop offset="0.6" stop-color="#efa44c"/><stop offset="0.85" stop-color="#dd8f3e"/><stop offset="1" stop-color="#b97432"/></linearGradient><linearGradient id="g33" gradientUnits="userSpaceOnUse" x1="258.6" y1="234.0" x2="271.0" y2="234.0"><stop offset="0" stop-color="#b9b788"/><stop offset="0.18" stop-color="#d8d69f"/><stop offset="0.42" stop-color="#e9e7b0"/><stop offset="0.6" stop-color="#e9e7b0"/><stop offset="0.85" stop-color="#d8d69f"/><stop offset="1" stop-color="#b9b788"/></linearGradient><linearGradient id="g34" gradientUnits="userSpaceOnUse" x1="293.9" y1="232.0" x2="306.3" y2="232.0"><stop offset="0" stop-color="#b9b788"/><stop offset="0.18" stop-color="#d8d69f"/><stop offset="0.42" stop-color="#e9e7b0"/><stop offset="0.6" stop-color="#e9e7b0"/><stop offset="0.85" stop-color="#d8d69f"/><stop offset="1" stop-color="#b9b788"/></linearGradient><linearGradient id="g35" gradientUnits="userSpaceOnUse" x1="360.7" y1="216.4" x2="375.9" y2="216.2"><stop offset="0" stop-color="#b97432"/><stop offset="0.18" stop-color="#dd8f3e"/><stop offset="0.42" stop-color="#efa44c"/><stop offset="0.6" stop-color="#efa44c"/><stop offset="0.85" stop-color="#dd8f3e"/><stop offset="1" stop-color="#b97432"/></linearGradient><linearGradient id="g36" gradientUnits="userSpaceOnUse" x1="283.3" y1="221.7" x2="298.3" y2="220.7"><stop offset="0" stop-color="#b97432"/><stop offset="0.18" stop-color="#dd8f3e"/><stop offset="0.42" stop-color="#efa44c"/><stop offset="0.6" stop-color="#efa44c"/><stop offset="0.85" stop-color="#dd8f3e"/><stop offset="1" stop-color="#b97432"/></linearGradient><linearGradient id="g37" gradientUnits="userSpaceOnUse" x1="386.4" y1="234.4" x2="398.8" y2="234.4"><stop offset="0" stop-color="#b9b788"/><stop offset="0.18" stop-color="#d8d69f"/><stop offset="0.42" stop-color="#e9e7b0"/><stop offset="0.6" stop-color="#e9e7b0"/><stop offset="0.85" stop-color="#d8d69f"/><stop offset="1" stop-color="#b9b788"/></linearGradient><linearGradient id="g38" gradientUnits="userSpaceOnUse" x1="256.0" y1="236.3" x2="268.4" y2="236.3"><stop offset="0" stop-color="#b9b788"/><stop offset="0.18" stop-color="#d8d69f"/><stop offset="0.42" stop-color="#e9e7b0"/><stop offset="0.6" stop-color="#e9e7b0"/><stop offset="0.85" stop-color="#d8d69f"/><stop offset="1" stop-color="#b9b788"/></linearGradient><linearGradient id="g39" gradientUnits="userSpaceOnUse" x1="354.5" y1="228.5" x2="369.5" y2="227.7"><stop offset="0" stop-color="#c09244"/><stop offset="0.18" stop-color="#ddb463"/><stop offset="0.42" stop-color="#efcb76"/><stop offset="0.6" stop-color="#efcb76"/><stop offset="0.85" stop-color="#ddb463"/><stop offset="1" stop-color="#c09244"/></linearGradient><linearGradient id="g40" gradientUnits="userSpaceOnUse" x1="395.9" y1="239.9" x2="408.5" y2="239.9"><stop offset="0" stop-color="#b9b788"/><stop offset="0.18" stop-color="#d8d69f"/><stop offset="0.42" stop-color="#e9e7b0"/><stop offset="0.6" stop-color="#e9e7b0"/><stop offset="0.85" stop-color="#d8d69f"/><stop offset="1" stop-color="#b9b788"/></linearGradient><linearGradient id="g41" gradientUnits="userSpaceOnUse" x1="388.0" y1="237.9" x2="400.6" y2="237.9"><stop offset="0" stop-color="#b9b788"/><stop offset="0.18" stop-color="#d8d69f"/><stop offset="0.42" stop-color="#e9e7b0"/><stop offset="0.6" stop-color="#e9e7b0"/><stop offset="0.85" stop-color="#d8d69f"/><stop offset="1" stop-color="#b9b788"/></linearGradient><linearGradient id="g42" gradientUnits="userSpaceOnUse" x1="342.1" y1="228.6" x2="357.1" y2="227.6"><stop offset="0" stop-color="#b97432"/><stop offset="0.18" stop-color="#dd8f3e"/><stop offset="0.42" stop-color="#efa44c"/><stop offset="0.6" stop-color="#efa44c"/><stop offset="0.85" stop-color="#dd8f3e"/><stop offset="1" stop-color="#b97432"/></linearGradient><linearGradient id="g43" gradientUnits="userSpaceOnUse" x1="301.7" y1="241.8" x2="314.3" y2="241.8"><stop offset="0" stop-color="#b9b788"/><stop offset="0.18" stop-color="#d8d69f"/><stop offset="0.42" stop-color="#e9e7b0"/><stop offset="0.6" stop-color="#e9e7b0"/><stop offset="0.85" stop-color="#d8d69f"/><stop offset="1" stop-color="#b9b788"/></linearGradient><linearGradient id="g44" gradientUnits="userSpaceOnUse" x1="402.4" y1="241.8" x2="417.6" y2="241.8"><stop offset="0" stop-color="#c09244"/><stop offset="0.18" stop-color="#ddb463"/><stop offset="0.42" stop-color="#efcb76"/><stop offset="0.6" stop-color="#efcb76"/><stop offset="0.85" stop-color="#ddb463"/><stop offset="1" stop-color="#c09244"/></linearGradient><linearGradient id="g45" gradientUnits="userSpaceOnUse" x1="396.0" y1="250.1" x2="408.8" y2="250.1"><stop offset="0" stop-color="#b9b788"/><stop offset="0.18" stop-color="#d8d69f"/><stop offset="0.42" stop-color="#e9e7b0"/><stop offset="0.6" stop-color="#e9e7b0"/><stop offset="0.85" stop-color="#d8d69f"/><stop offset="1" stop-color="#b9b788"/></linearGradient><linearGradient id="g46" gradientUnits="userSpaceOnUse" x1="368.3" y1="249.7" x2="381.1" y2="249.7"><stop offset="0" stop-color="#b9b788"/><stop offset="0.18" stop-color="#d8d69f"/><stop offset="0.42" stop-color="#e9e7b0"/><stop offset="0.6" stop-color="#e9e7b0"/><stop offset="0.85" stop-color="#d8d69f"/><stop offset="1" stop-color="#b9b788"/></linearGradient><linearGradient id="g47" gradientUnits="userSpaceOnUse" x1="299.6" y1="253.6" x2="312.4" y2="253.6"><stop offset="0" stop-color="#b9b788"/><stop offset="0.18" stop-color="#d8d69f"/><stop offset="0.42" stop-color="#e9e7b0"/><stop offset="0.6" stop-color="#e9e7b0"/><stop offset="0.85" stop-color="#d8d69f"/><stop offset="1" stop-color="#b9b788"/></linearGradient><linearGradient id="g48" gradientUnits="userSpaceOnUse" x1="395.8" y1="253.6" x2="408.6" y2="253.6"><stop offset="0" stop-color="#b9b788"/><stop offset="0.18" stop-color="#d8d69f"/><stop offset="0.42" stop-color="#e9e7b0"/><stop offset="0.6" stop-color="#e9e7b0"/><stop offset="0.85" stop-color="#d8d69f"/><stop offset="1" stop-color="#b9b788"/></linearGradient><linearGradient id="g49" gradientUnits="userSpaceOnUse" x1="417.6" y1="252.0" x2="430.4" y2="252.0"><stop offset="0" stop-color="#b9b788"/><stop offset="0.18" stop-color="#d8d69f"/><stop offset="0.42" stop-color="#e9e7b0"/><stop offset="0.6" stop-color="#e9e7b0"/><stop offset="0.85" stop-color="#d8d69f"/><stop offset="1" stop-color="#b9b788"/></linearGradient><linearGradient id="g50" gradientUnits="userSpaceOnUse" x1="415.4" y1="253.6" x2="428.2" y2="253.6"><stop offset="0" stop-color="#b9b788"/><stop offset="0.18" stop-color="#d8d69f"/><stop offset="0.42" stop-color="#e9e7b0"/><stop offset="0.6" stop-color="#e9e7b0"/><stop offset="0.85" stop-color="#d8d69f"/><stop offset="1" stop-color="#b9b788"/></linearGradient><linearGradient id="g51" gradientUnits="userSpaceOnUse" x1="226.2" y1="238.7" x2="240.2" y2="236.9"><stop offset="0" stop-color="#b97432"/><stop offset="0.18" stop-color="#dd8f3e"/><stop offset="0.42" stop-color="#efa44c"/><stop offset="0.6" stop-color="#efa44c"/><stop offset="0.85" stop-color="#dd8f3e"/><stop offset="1" stop-color="#b97432"/></linearGradient><linearGradient id="g52" gradientUnits="userSpaceOnUse" x1="317.3" y1="238.5" x2="332.3" y2="236.9"><stop offset="0" stop-color="#a82a18"/><stop offset="0.18" stop-color="#d23222"/><stop offset="0.42" stop-color="#e33c22"/><stop offset="0.6" stop-color="#e33c22"/><stop offset="0.85" stop-color="#d23222"/><stop offset="1" stop-color="#a82a18"/></linearGradient><linearGradient id="g53" gradientUnits="userSpaceOnUse" x1="240.9" y1="250.5" x2="256.0" y2="248.7"><stop offset="0" stop-color="#c09244"/><stop offset="0.18" stop-color="#ddb463"/><stop offset="0.42" stop-color="#efcb76"/><stop offset="0.6" stop-color="#efcb76"/><stop offset="0.85" stop-color="#ddb463"/><stop offset="1" stop-color="#c09244"/></linearGradient><linearGradient id="g54" gradientUnits="userSpaceOnUse" x1="429.0" y1="263.4" x2="442.0" y2="263.4"><stop offset="0" stop-color="#b9b788"/><stop offset="0.18" stop-color="#d8d69f"/><stop offset="0.42" stop-color="#e9e7b0"/><stop offset="0.6" stop-color="#e9e7b0"/><stop offset="0.85" stop-color="#d8d69f"/><stop offset="1" stop-color="#b9b788"/></linearGradient><linearGradient id="g55" gradientUnits="userSpaceOnUse" x1="423.1" y1="265.4" x2="436.1" y2="265.4"><stop offset="0" stop-color="#b9b788"/><stop offset="0.18" stop-color="#d8d69f"/><stop offset="0.42" stop-color="#e9e7b0"/><stop offset="0.6" stop-color="#e9e7b0"/><stop offset="0.85" stop-color="#d8d69f"/><stop offset="1" stop-color="#b9b788"/></linearGradient><linearGradient id="g56" gradientUnits="userSpaceOnUse" x1="364.3" y1="265.4" x2="377.3" y2="265.4"><stop offset="0" stop-color="#b9b788"/><stop offset="0.18" stop-color="#d8d69f"/><stop offset="0.42" stop-color="#e9e7b0"/><stop offset="0.6" stop-color="#e9e7b0"/><stop offset="0.85" stop-color="#d8d69f"/><stop offset="1" stop-color="#b9b788"/></linearGradient><linearGradient id="g57" gradientUnits="userSpaceOnUse" x1="403.8" y1="265.8" x2="416.8" y2="265.8"><stop offset="0" stop-color="#b9b788"/><stop offset="0.18" stop-color="#d8d69f"/><stop offset="0.42" stop-color="#e9e7b0"/><stop offset="0.6" stop-color="#e9e7b0"/><stop offset="0.85" stop-color="#d8d69f"/><stop offset="1" stop-color="#b9b788"/></linearGradient><linearGradient id="g58" gradientUnits="userSpaceOnUse" x1="146.0" y1="266.9" x2="160.2" y2="266.9"><stop offset="0" stop-color="#b3b17c"/><stop offset="0.18" stop-color="#d6d49c"/><stop offset="0.42" stop-color="#e6e4a8"/><stop offset="0.6" stop-color="#e6e4a8"/><stop offset="0.85" stop-color="#d6d49c"/><stop offset="1" stop-color="#b3b17c"/></linearGradient><linearGradient id="g59" gradientUnits="userSpaceOnUse" x1="425.4" y1="263.8" x2="438.4" y2="263.8"><stop offset="0" stop-color="#b9b788"/><stop offset="0.18" stop-color="#d8d69f"/><stop offset="0.42" stop-color="#e9e7b0"/><stop offset="0.6" stop-color="#e9e7b0"/><stop offset="0.85" stop-color="#d8d69f"/><stop offset="1" stop-color="#b9b788"/></linearGradient><linearGradient id="g60" gradientUnits="userSpaceOnUse" x1="262.2" y1="265.4" x2="275.2" y2="265.4"><stop offset="0" stop-color="#b9b788"/><stop offset="0.18" stop-color="#d8d69f"/><stop offset="0.42" stop-color="#e9e7b0"/><stop offset="0.6" stop-color="#e9e7b0"/><stop offset="0.85" stop-color="#d8d69f"/><stop offset="1" stop-color="#b9b788"/></linearGradient><linearGradient id="g61" gradientUnits="userSpaceOnUse" x1="411.6" y1="267.7" x2="424.6" y2="267.7"><stop offset="0" stop-color="#b9b788"/><stop offset="0.18" stop-color="#d8d69f"/><stop offset="0.42" stop-color="#e9e7b0"/><stop offset="0.6" stop-color="#e9e7b0"/><stop offset="0.85" stop-color="#d8d69f"/><stop offset="1" stop-color="#b9b788"/></linearGradient><linearGradient id="g62" gradientUnits="userSpaceOnUse" x1="369.3" y1="270.0" x2="382.3" y2="270.0"><stop offset="0" stop-color="#b9b788"/><stop offset="0.18" stop-color="#d8d69f"/><stop offset="0.42" stop-color="#e9e7b0"/><stop offset="0.6" stop-color="#e9e7b0"/><stop offset="0.85" stop-color="#d8d69f"/><stop offset="1" stop-color="#b9b788"/></linearGradient><linearGradient id="g63" gradientUnits="userSpaceOnUse" x1="383.9" y1="269.3" x2="396.9" y2="269.3"><stop offset="0" stop-color="#b9b788"/><stop offset="0.18" stop-color="#d8d69f"/><stop offset="0.42" stop-color="#e9e7b0"/><stop offset="0.6" stop-color="#e9e7b0"/><stop offset="0.85" stop-color="#d8d69f"/><stop offset="1" stop-color="#b9b788"/></linearGradient><linearGradient id="g64" gradientUnits="userSpaceOnUse" x1="130.3" y1="268.8" x2="144.5" y2="268.8"><stop offset="0" stop-color="#b3b17c"/><stop offset="0.18" stop-color="#d6d49c"/><stop offset="0.42" stop-color="#e6e4a8"/><stop offset="0.6" stop-color="#e6e4a8"/><stop offset="0.85" stop-color="#d6d49c"/><stop offset="1" stop-color="#b3b17c"/></linearGradient><linearGradient id="g65" gradientUnits="userSpaceOnUse" x1="392.0" y1="265.8" x2="405.0" y2="265.8"><stop offset="0" stop-color="#b9b788"/><stop offset="0.18" stop-color="#d8d69f"/><stop offset="0.42" stop-color="#e9e7b0"/><stop offset="0.6" stop-color="#e9e7b0"/><stop offset="0.85" stop-color="#d8d69f"/><stop offset="1" stop-color="#b9b788"/></linearGradient><linearGradient id="g66" gradientUnits="userSpaceOnUse" x1="288.2" y1="260.1" x2="303.2" y2="258.9"><stop offset="0" stop-color="#c09244"/><stop offset="0.18" stop-color="#ddb463"/><stop offset="0.42" stop-color="#efcb76"/><stop offset="0.6" stop-color="#efcb76"/><stop offset="0.85" stop-color="#ddb463"/><stop offset="1" stop-color="#c09244"/></linearGradient><linearGradient id="g67" gradientUnits="userSpaceOnUse" x1="378.9" y1="263.4" x2="394.1" y2="263.4"><stop offset="0" stop-color="#c09244"/><stop offset="0.18" stop-color="#ddb463"/><stop offset="0.42" stop-color="#efcb76"/><stop offset="0.6" stop-color="#efcb76"/><stop offset="0.85" stop-color="#ddb463"/><stop offset="1" stop-color="#c09244"/></linearGradient><linearGradient id="g68" gradientUnits="userSpaceOnUse" x1="381.1" y1="271.9" x2="394.1" y2="271.9"><stop offset="0" stop-color="#b9b788"/><stop offset="0.18" stop-color="#d8d69f"/><stop offset="0.42" stop-color="#e9e7b0"/><stop offset="0.6" stop-color="#e9e7b0"/><stop offset="0.85" stop-color="#d8d69f"/><stop offset="1" stop-color="#b9b788"/></linearGradient><linearGradient id="g69" gradientUnits="userSpaceOnUse" x1="114.6" y1="272.8" x2="128.8" y2="272.8"><stop offset="0" stop-color="#b3b17c"/><stop offset="0.18" stop-color="#d6d49c"/><stop offset="0.42" stop-color="#e6e4a8"/><stop offset="0.6" stop-color="#e6e4a8"/><stop offset="0.85" stop-color="#d6d49c"/><stop offset="1" stop-color="#b3b17c"/></linearGradient><linearGradient id="g70" gradientUnits="userSpaceOnUse" x1="399.8" y1="275.6" x2="413.0" y2="275.6"><stop offset="0" stop-color="#b9b788"/><stop offset="0.18" stop-color="#d8d69f"/><stop offset="0.42" stop-color="#e9e7b0"/><stop offset="0.6" stop-color="#e9e7b0"/><stop offset="0.85" stop-color="#d8d69f"/><stop offset="1" stop-color="#b9b788"/></linearGradient><linearGradient id="g71" gradientUnits="userSpaceOnUse" x1="165.5" y1="230.2" x2="182.1" y2="226.8"><stop offset="0" stop-color="#a82a18"/><stop offset="0.18" stop-color="#d23222"/><stop offset="0.42" stop-color="#e33c22"/><stop offset="0.6" stop-color="#e33c22"/><stop offset="0.85" stop-color="#d23222"/><stop offset="1" stop-color="#a82a18"/></linearGradient><linearGradient id="g72" gradientUnits="userSpaceOnUse" x1="223.2" y1="266.5" x2="239.3" y2="265.0"><stop offset="0" stop-color="#c09244"/><stop offset="0.18" stop-color="#ddb463"/><stop offset="0.42" stop-color="#efcb76"/><stop offset="0.6" stop-color="#efcb76"/><stop offset="0.85" stop-color="#ddb463"/><stop offset="1" stop-color="#c09244"/></linearGradient><linearGradient id="g73" gradientUnits="userSpaceOnUse" x1="263.4" y1="241.8" x2="278.5" y2="240.8"><stop offset="0" stop-color="#a82a18"/><stop offset="0.18" stop-color="#d23222"/><stop offset="0.42" stop-color="#e33c22"/><stop offset="0.6" stop-color="#e33c22"/><stop offset="0.85" stop-color="#d23222"/><stop offset="1" stop-color="#a82a18"/></linearGradient><linearGradient id="g74" gradientUnits="userSpaceOnUse" x1="295.6" y1="273.2" x2="308.6" y2="273.2"><stop offset="0" stop-color="#b9b788"/><stop offset="0.18" stop-color="#d8d69f"/><stop offset="0.42" stop-color="#e9e7b0"/><stop offset="0.6" stop-color="#e9e7b0"/><stop offset="0.85" stop-color="#d8d69f"/><stop offset="1" stop-color="#b9b788"/></linearGradient><linearGradient id="g75" gradientUnits="userSpaceOnUse" x1="51.8" y1="276.7" x2="66.0" y2="276.7"><stop offset="0" stop-color="#b3b17c"/><stop offset="0.18" stop-color="#d6d49c"/><stop offset="0.42" stop-color="#e6e4a8"/><stop offset="0.6" stop-color="#e6e4a8"/><stop offset="0.85" stop-color="#d6d49c"/><stop offset="1" stop-color="#b3b17c"/></linearGradient><linearGradient id="g76" gradientUnits="userSpaceOnUse" x1="114.5" y1="278.7" x2="128.9" y2="278.7"><stop offset="0" stop-color="#b3b17c"/><stop offset="0.18" stop-color="#d6d49c"/><stop offset="0.42" stop-color="#e6e4a8"/><stop offset="0.6" stop-color="#e6e4a8"/><stop offset="0.85" stop-color="#d6d49c"/><stop offset="1" stop-color="#b3b17c"/></linearGradient><linearGradient id="g77" gradientUnits="userSpaceOnUse" x1="411.3" y1="277.2" x2="424.5" y2="277.2"><stop offset="0" stop-color="#b9b788"/><stop offset="0.18" stop-color="#d8d69f"/><stop offset="0.42" stop-color="#e9e7b0"/><stop offset="0.6" stop-color="#e9e7b0"/><stop offset="0.85" stop-color="#d8d69f"/><stop offset="1" stop-color="#b9b788"/></linearGradient><linearGradient id="g78" gradientUnits="userSpaceOnUse" x1="399.5" y1="277.2" x2="412.7" y2="277.2"><stop offset="0" stop-color="#b9b788"/><stop offset="0.18" stop-color="#d8d69f"/><stop offset="0.42" stop-color="#e9e7b0"/><stop offset="0.6" stop-color="#e9e7b0"/><stop offset="0.85" stop-color="#d8d69f"/><stop offset="1" stop-color="#b9b788"/></linearGradient><linearGradient id="g79" gradientUnits="userSpaceOnUse" x1="328.8" y1="279.1" x2="342.0" y2="279.1"><stop offset="0" stop-color="#b9b788"/><stop offset="0.18" stop-color="#d8d69f"/><stop offset="0.42" stop-color="#e9e7b0"/><stop offset="0.6" stop-color="#e9e7b0"/><stop offset="0.85" stop-color="#d8d69f"/><stop offset="1" stop-color="#b9b788"/></linearGradient><linearGradient id="g80" gradientUnits="userSpaceOnUse" x1="368.1" y1="281.1" x2="381.3" y2="281.1"><stop offset="0" stop-color="#b9b788"/><stop offset="0.18" stop-color="#d8d69f"/><stop offset="0.42" stop-color="#e9e7b0"/><stop offset="0.6" stop-color="#e9e7b0"/><stop offset="0.85" stop-color="#d8d69f"/><stop offset="1" stop-color="#b9b788"/></linearGradient><linearGradient id="g81" gradientUnits="userSpaceOnUse" x1="259.5" y1="285.4" x2="272.7" y2="285.4"><stop offset="0" stop-color="#b9b788"/><stop offset="0.18" stop-color="#d8d69f"/><stop offset="0.42" stop-color="#e9e7b0"/><stop offset="0.6" stop-color="#e9e7b0"/><stop offset="0.85" stop-color="#d8d69f"/><stop offset="1" stop-color="#b9b788"/></linearGradient><linearGradient id="g82" gradientUnits="userSpaceOnUse" x1="352.4" y1="281.1" x2="365.6" y2="281.1"><stop offset="0" stop-color="#b9b788"/><stop offset="0.18" stop-color="#d8d69f"/><stop offset="0.42" stop-color="#e9e7b0"/><stop offset="0.6" stop-color="#e9e7b0"/><stop offset="0.85" stop-color="#d8d69f"/><stop offset="1" stop-color="#b9b788"/></linearGradient><linearGradient id="g83" gradientUnits="userSpaceOnUse" x1="297.4" y1="285.0" x2="310.6" y2="285.0"><stop offset="0" stop-color="#b9b788"/><stop offset="0.18" stop-color="#d8d69f"/><stop offset="0.42" stop-color="#e9e7b0"/><stop offset="0.6" stop-color="#e9e7b0"/><stop offset="0.85" stop-color="#d8d69f"/><stop offset="1" stop-color="#b9b788"/></linearGradient><linearGradient id="g84" gradientUnits="userSpaceOnUse" x1="404.4" y1="285.7" x2="417.8" y2="285.7"><stop offset="0" stop-color="#b9b788"/><stop offset="0.18" stop-color="#d8d69f"/><stop offset="0.42" stop-color="#e9e7b0"/><stop offset="0.6" stop-color="#e9e7b0"/><stop offset="0.85" stop-color="#d8d69f"/><stop offset="1" stop-color="#b9b788"/></linearGradient><linearGradient id="g85" gradientUnits="userSpaceOnUse" x1="256.2" y1="285.0" x2="269.4" y2="285.0"><stop offset="0" stop-color="#b9b788"/><stop offset="0.18" stop-color="#d8d69f"/><stop offset="0.42" stop-color="#e9e7b0"/><stop offset="0.6" stop-color="#e9e7b0"/><stop offset="0.85" stop-color="#d8d69f"/><stop offset="1" stop-color="#b9b788"/></linearGradient><linearGradient id="g86" gradientUnits="userSpaceOnUse" x1="334.7" y1="285.0" x2="347.9" y2="285.0"><stop offset="0" stop-color="#b9b788"/><stop offset="0.18" stop-color="#d8d69f"/><stop offset="0.42" stop-color="#e9e7b0"/><stop offset="0.6" stop-color="#e9e7b0"/><stop offset="0.85" stop-color="#d8d69f"/><stop offset="1" stop-color="#b9b788"/></linearGradient><linearGradient id="g87" gradientUnits="userSpaceOnUse" x1="38.6" y1="284.0" x2="55.6" y2="281.2"><stop offset="0" stop-color="#c09244"/><stop offset="0.18" stop-color="#ddb463"/><stop offset="0.42" stop-color="#efcb76"/><stop offset="0.6" stop-color="#efcb76"/><stop offset="0.85" stop-color="#ddb463"/><stop offset="1" stop-color="#c09244"/></linearGradient><linearGradient id="g88" gradientUnits="userSpaceOnUse" x1="395.5" y1="289.0" x2="408.9" y2="289.0"><stop offset="0" stop-color="#b9b788"/><stop offset="0.18" stop-color="#d8d69f"/><stop offset="0.42" stop-color="#e9e7b0"/><stop offset="0.6" stop-color="#e9e7b0"/><stop offset="0.85" stop-color="#d8d69f"/><stop offset="1" stop-color="#b9b788"/></linearGradient><linearGradient id="g89" gradientUnits="userSpaceOnUse" x1="315.1" y1="268.8" x2="331.2" y2="267.9"><stop offset="0" stop-color="#b05e29"/><stop offset="0.18" stop-color="#d97234"/><stop offset="0.42" stop-color="#ea8444"/><stop offset="0.6" stop-color="#ea8444"/><stop offset="0.85" stop-color="#d97234"/><stop offset="1" stop-color="#b05e29"/></linearGradient><linearGradient id="g90" gradientUnits="userSpaceOnUse" x1="392.7" y1="289.6" x2="406.1" y2="289.6"><stop offset="0" stop-color="#b9b788"/><stop offset="0.18" stop-color="#d8d69f"/><stop offset="0.42" stop-color="#e9e7b0"/><stop offset="0.6" stop-color="#e9e7b0"/><stop offset="0.85" stop-color="#d8d69f"/><stop offset="1" stop-color="#b9b788"/></linearGradient><linearGradient id="g91" gradientUnits="userSpaceOnUse" x1="262.0" y1="290.9" x2="275.4" y2="290.9"><stop offset="0" stop-color="#b9b788"/><stop offset="0.18" stop-color="#d8d69f"/><stop offset="0.42" stop-color="#e9e7b0"/><stop offset="0.6" stop-color="#e9e7b0"/><stop offset="0.85" stop-color="#d8d69f"/><stop offset="1" stop-color="#b9b788"/></linearGradient><linearGradient id="g92" gradientUnits="userSpaceOnUse" x1="391.8" y1="289.3" x2="405.2" y2="289.3"><stop offset="0" stop-color="#b9b788"/><stop offset="0.18" stop-color="#d8d69f"/><stop offset="0.42" stop-color="#e9e7b0"/><stop offset="0.6" stop-color="#e9e7b0"/><stop offset="0.85" stop-color="#d8d69f"/><stop offset="1" stop-color="#b9b788"/></linearGradient><linearGradient id="g93" gradientUnits="userSpaceOnUse" x1="338.2" y1="272.6" x2="353.3" y2="271.9"><stop offset="0" stop-color="#b05e29"/><stop offset="0.18" stop-color="#d97234"/><stop offset="0.42" stop-color="#ea8444"/><stop offset="0.6" stop-color="#ea8444"/><stop offset="0.85" stop-color="#d97234"/><stop offset="1" stop-color="#b05e29"/></linearGradient><linearGradient id="g94" gradientUnits="userSpaceOnUse" x1="368.0" y1="296.8" x2="381.4" y2="296.8"><stop offset="0" stop-color="#b9b788"/><stop offset="0.18" stop-color="#d8d69f"/><stop offset="0.42" stop-color="#e9e7b0"/><stop offset="0.6" stop-color="#e9e7b0"/><stop offset="0.85" stop-color="#d8d69f"/><stop offset="1" stop-color="#b9b788"/></linearGradient><linearGradient id="g95" gradientUnits="userSpaceOnUse" x1="338.5" y1="296.8" x2="351.9" y2="296.8"><stop offset="0" stop-color="#b9b788"/><stop offset="0.18" stop-color="#d8d69f"/><stop offset="0.42" stop-color="#e9e7b0"/><stop offset="0.6" stop-color="#e9e7b0"/><stop offset="0.85" stop-color="#d8d69f"/><stop offset="1" stop-color="#b9b788"/></linearGradient><linearGradient id="g96" gradientUnits="userSpaceOnUse" x1="352.4" y1="280.4" x2="367.6" y2="279.8"><stop offset="0" stop-color="#c09244"/><stop offset="0.18" stop-color="#ddb463"/><stop offset="0.42" stop-color="#efcb76"/><stop offset="0.6" stop-color="#efcb76"/><stop offset="0.85" stop-color="#ddb463"/><stop offset="1" stop-color="#c09244"/></linearGradient><linearGradient id="g97" gradientUnits="userSpaceOnUse" x1="365.2" y1="297.4" x2="378.6" y2="297.4"><stop offset="0" stop-color="#b9b788"/><stop offset="0.18" stop-color="#d8d69f"/><stop offset="0.42" stop-color="#e9e7b0"/><stop offset="0.6" stop-color="#e9e7b0"/><stop offset="0.85" stop-color="#d8d69f"/><stop offset="1" stop-color="#b9b788"/></linearGradient><linearGradient id="g98" gradientUnits="userSpaceOnUse" x1="257.4" y1="297.2" x2="270.8" y2="297.2"><stop offset="0" stop-color="#b9b788"/><stop offset="0.18" stop-color="#d8d69f"/><stop offset="0.42" stop-color="#e9e7b0"/><stop offset="0.6" stop-color="#e9e7b0"/><stop offset="0.85" stop-color="#d8d69f"/><stop offset="1" stop-color="#b9b788"/></linearGradient><linearGradient id="g99" gradientUnits="userSpaceOnUse" x1="267.8" y1="298.8" x2="281.4" y2="298.8"><stop offset="0" stop-color="#b9b788"/><stop offset="0.18" stop-color="#d8d69f"/><stop offset="0.42" stop-color="#e9e7b0"/><stop offset="0.6" stop-color="#e9e7b0"/><stop offset="0.85" stop-color="#d8d69f"/><stop offset="1" stop-color="#b9b788"/></linearGradient><linearGradient id="g100" gradientUnits="userSpaceOnUse" x1="354.3" y1="296.8" x2="367.7" y2="296.8"><stop offset="0" stop-color="#b9b788"/><stop offset="0.18" stop-color="#d8d69f"/><stop offset="0.42" stop-color="#e9e7b0"/><stop offset="0.6" stop-color="#e9e7b0"/><stop offset="0.85" stop-color="#d8d69f"/><stop offset="1" stop-color="#b9b788"/></linearGradient><linearGradient id="g101" gradientUnits="userSpaceOnUse" x1="33.8" y1="302.2" x2="48.6" y2="302.2"><stop offset="0" stop-color="#b3b17c"/><stop offset="0.18" stop-color="#d6d49c"/><stop offset="0.42" stop-color="#e6e4a8"/><stop offset="0.6" stop-color="#e6e4a8"/><stop offset="0.85" stop-color="#d6d49c"/><stop offset="1" stop-color="#b3b17c"/></linearGradient><linearGradient id="g102" gradientUnits="userSpaceOnUse" x1="264.0" y1="307.6" x2="277.6" y2="307.6"><stop offset="0" stop-color="#b9b788"/><stop offset="0.18" stop-color="#d8d69f"/><stop offset="0.42" stop-color="#e9e7b0"/><stop offset="0.6" stop-color="#e9e7b0"/><stop offset="0.85" stop-color="#d8d69f"/><stop offset="1" stop-color="#b9b788"/></linearGradient><linearGradient id="g103" gradientUnits="userSpaceOnUse" x1="345.5" y1="309.2" x2="359.1" y2="309.2"><stop offset="0" stop-color="#b9b788"/><stop offset="0.18" stop-color="#d8d69f"/><stop offset="0.42" stop-color="#e9e7b0"/><stop offset="0.6" stop-color="#e9e7b0"/><stop offset="0.85" stop-color="#d8d69f"/><stop offset="1" stop-color="#b9b788"/></linearGradient><linearGradient id="g104" gradientUnits="userSpaceOnUse" x1="275.8" y1="296.4" x2="292.0" y2="295.2"><stop offset="0" stop-color="#c09244"/><stop offset="0.18" stop-color="#ddb463"/><stop offset="0.42" stop-color="#efcb76"/><stop offset="0.6" stop-color="#efcb76"/><stop offset="0.85" stop-color="#ddb463"/><stop offset="1" stop-color="#c09244"/></linearGradient><linearGradient id="g105" gradientUnits="userSpaceOnUse" x1="289.6" y1="303.2" x2="304.7" y2="302.2"><stop offset="0" stop-color="#b9b788"/><stop offset="0.18" stop-color="#d8d69f"/><stop offset="0.42" stop-color="#e9e7b0"/><stop offset="0.6" stop-color="#e9e7b0"/><stop offset="0.85" stop-color="#d8d69f"/><stop offset="1" stop-color="#b9b788"/></linearGradient><linearGradient id="g106" gradientUnits="userSpaceOnUse" x1="251.6" y1="309.6" x2="266.4" y2="309.6"><stop offset="0" stop-color="#b3b17c"/><stop offset="0.18" stop-color="#d6d49c"/><stop offset="0.42" stop-color="#e6e4a8"/><stop offset="0.6" stop-color="#e6e4a8"/><stop offset="0.85" stop-color="#d6d49c"/><stop offset="1" stop-color="#b3b17c"/></linearGradient><linearGradient id="g107" gradientUnits="userSpaceOnUse" x1="320.7" y1="316.4" x2="334.5" y2="316.4"><stop offset="0" stop-color="#b9b788"/><stop offset="0.18" stop-color="#d8d69f"/><stop offset="0.42" stop-color="#e9e7b0"/><stop offset="0.6" stop-color="#e9e7b0"/><stop offset="0.85" stop-color="#d8d69f"/><stop offset="1" stop-color="#b9b788"/></linearGradient><linearGradient id="g108" gradientUnits="userSpaceOnUse" x1="332.5" y1="314.5" x2="346.3" y2="314.5"><stop offset="0" stop-color="#b9b788"/><stop offset="0.18" stop-color="#d8d69f"/><stop offset="0.42" stop-color="#e9e7b0"/><stop offset="0.6" stop-color="#e9e7b0"/><stop offset="0.85" stop-color="#d8d69f"/><stop offset="1" stop-color="#b9b788"/></linearGradient><linearGradient id="g109" gradientUnits="userSpaceOnUse" x1="322.4" y1="310.1" x2="338.6" y2="309.0"><stop offset="0" stop-color="#c09244"/><stop offset="0.18" stop-color="#ddb463"/><stop offset="0.42" stop-color="#efcb76"/><stop offset="0.6" stop-color="#efcb76"/><stop offset="0.85" stop-color="#ddb463"/><stop offset="1" stop-color="#c09244"/></linearGradient><linearGradient id="g110" gradientUnits="userSpaceOnUse" x1="261.8" y1="316.4" x2="275.6" y2="316.4"><stop offset="0" stop-color="#b9b788"/><stop offset="0.18" stop-color="#d8d69f"/><stop offset="0.42" stop-color="#e9e7b0"/><stop offset="0.6" stop-color="#e9e7b0"/><stop offset="0.85" stop-color="#d8d69f"/><stop offset="1" stop-color="#b9b788"/></linearGradient><linearGradient id="g111" gradientUnits="userSpaceOnUse" x1="306.7" y1="318.1" x2="322.9" y2="316.5"><stop offset="0" stop-color="#c09244"/><stop offset="0.18" stop-color="#ddb463"/><stop offset="0.42" stop-color="#efcb76"/><stop offset="0.6" stop-color="#efcb76"/><stop offset="0.85" stop-color="#ddb463"/><stop offset="1" stop-color="#c09244"/></linearGradient><linearGradient id="g112" gradientUnits="userSpaceOnUse" x1="434.0" y1="334.5" x2="449.4" y2="334.5"><stop offset="0" stop-color="#b3b17c"/><stop offset="0.18" stop-color="#d6d49c"/><stop offset="0.42" stop-color="#e6e4a8"/><stop offset="0.6" stop-color="#e6e4a8"/><stop offset="0.85" stop-color="#d6d49c"/><stop offset="1" stop-color="#b3b17c"/></linearGradient><linearGradient id="g113" gradientUnits="userSpaceOnUse" x1="432.9" y1="334.7" x2="448.3" y2="334.7"><stop offset="0" stop-color="#b3b17c"/><stop offset="0.18" stop-color="#d6d49c"/><stop offset="0.42" stop-color="#e6e4a8"/><stop offset="0.6" stop-color="#e6e4a8"/><stop offset="0.85" stop-color="#d6d49c"/><stop offset="1" stop-color="#b3b17c"/></linearGradient><linearGradient id="g114" gradientUnits="userSpaceOnUse" x1="114.4" y1="334.9" x2="129.3" y2="331.9"><stop offset="0" stop-color="#c09244"/><stop offset="0.18" stop-color="#ddb463"/><stop offset="0.42" stop-color="#efcb76"/><stop offset="0.6" stop-color="#efcb76"/><stop offset="0.85" stop-color="#ddb463"/><stop offset="1" stop-color="#c09244"/></linearGradient><linearGradient id="g115" gradientUnits="userSpaceOnUse" x1="144.8" y1="335.8" x2="160.7" y2="332.9"><stop offset="0" stop-color="#c09244"/><stop offset="0.18" stop-color="#ddb463"/><stop offset="0.42" stop-color="#efcb76"/><stop offset="0.6" stop-color="#efcb76"/><stop offset="0.85" stop-color="#ddb463"/><stop offset="1" stop-color="#c09244"/></linearGradient><linearGradient id="g116" gradientUnits="userSpaceOnUse" x1="329.5" y1="337.3" x2="345.6" y2="336.1"><stop offset="0" stop-color="#c09244"/><stop offset="0.18" stop-color="#ddb463"/><stop offset="0.42" stop-color="#efcb76"/><stop offset="0.6" stop-color="#efcb76"/><stop offset="0.85" stop-color="#ddb463"/><stop offset="1" stop-color="#c09244"/></linearGradient><linearGradient id="g117" gradientUnits="userSpaceOnUse" x1="421.1" y1="342.6" x2="436.5" y2="342.6"><stop offset="0" stop-color="#b3b17c"/><stop offset="0.18" stop-color="#d6d49c"/><stop offset="0.42" stop-color="#e6e4a8"/><stop offset="0.6" stop-color="#e6e4a8"/><stop offset="0.85" stop-color="#d6d49c"/><stop offset="1" stop-color="#b3b17c"/></linearGradient><linearGradient id="g118" gradientUnits="userSpaceOnUse" x1="137.4" y1="351.3" x2="153.0" y2="351.3"><stop offset="0" stop-color="#b3b17c"/><stop offset="0.18" stop-color="#d6d49c"/><stop offset="0.42" stop-color="#e6e4a8"/><stop offset="0.6" stop-color="#e6e4a8"/><stop offset="0.85" stop-color="#d6d49c"/><stop offset="1" stop-color="#b3b17c"/></linearGradient><linearGradient id="g119" gradientUnits="userSpaceOnUse" x1="409.2" y1="354.4" x2="424.8" y2="354.4"><stop offset="0" stop-color="#b3b17c"/><stop offset="0.18" stop-color="#d6d49c"/><stop offset="0.42" stop-color="#e6e4a8"/><stop offset="0.6" stop-color="#e6e4a8"/><stop offset="0.85" stop-color="#d6d49c"/><stop offset="1" stop-color="#b3b17c"/></linearGradient><linearGradient id="g120" gradientUnits="userSpaceOnUse" x1="422.9" y1="356.3" x2="438.7" y2="356.3"><stop offset="0" stop-color="#b3b17c"/><stop offset="0.18" stop-color="#d6d49c"/><stop offset="0.42" stop-color="#e6e4a8"/><stop offset="0.6" stop-color="#e6e4a8"/><stop offset="0.85" stop-color="#d6d49c"/><stop offset="1" stop-color="#b3b17c"/></linearGradient><linearGradient id="g121" gradientUnits="userSpaceOnUse" x1="428.7" y1="360.2" x2="444.5" y2="360.2"><stop offset="0" stop-color="#b3b17c"/><stop offset="0.18" stop-color="#d6d49c"/><stop offset="0.42" stop-color="#e6e4a8"/><stop offset="0.6" stop-color="#e6e4a8"/><stop offset="0.85" stop-color="#d6d49c"/><stop offset="1" stop-color="#b3b17c"/></linearGradient><linearGradient id="g122" gradientUnits="userSpaceOnUse" x1="262.9" y1="362.6" x2="278.7" y2="362.6"><stop offset="0" stop-color="#b3b17c"/><stop offset="0.18" stop-color="#d6d49c"/><stop offset="0.42" stop-color="#e6e4a8"/><stop offset="0.6" stop-color="#e6e4a8"/><stop offset="0.85" stop-color="#d6d49c"/><stop offset="1" stop-color="#b3b17c"/></linearGradient><linearGradient id="g123" gradientUnits="userSpaceOnUse" x1="117.6" y1="368.9" x2="133.6" y2="368.9"><stop offset="0" stop-color="#b3b17c"/><stop offset="0.18" stop-color="#d6d49c"/><stop offset="0.42" stop-color="#e6e4a8"/><stop offset="0.6" stop-color="#e6e4a8"/><stop offset="0.85" stop-color="#d6d49c"/><stop offset="1" stop-color="#b3b17c"/></linearGradient><linearGradient id="g124" gradientUnits="userSpaceOnUse" x1="407.1" y1="376.0" x2="423.1" y2="376.0"><stop offset="0" stop-color="#b3b17c"/><stop offset="0.18" stop-color="#d6d49c"/><stop offset="0.42" stop-color="#e6e4a8"/><stop offset="0.6" stop-color="#e6e4a8"/><stop offset="0.85" stop-color="#d6d49c"/><stop offset="1" stop-color="#b3b17c"/></linearGradient><linearGradient id="g125" gradientUnits="userSpaceOnUse" x1="266.6" y1="378.3" x2="282.8" y2="378.3"><stop offset="0" stop-color="#b3b17c"/><stop offset="0.18" stop-color="#d6d49c"/><stop offset="0.42" stop-color="#e6e4a8"/><stop offset="0.6" stop-color="#e6e4a8"/><stop offset="0.85" stop-color="#d6d49c"/><stop offset="1" stop-color="#b3b17c"/></linearGradient><linearGradient id="g126" gradientUnits="userSpaceOnUse" x1="406.9" y1="389.7" x2="423.3" y2="389.7"><stop offset="0" stop-color="#b3b17c"/><stop offset="0.18" stop-color="#d6d49c"/><stop offset="0.42" stop-color="#e6e4a8"/><stop offset="0.6" stop-color="#e6e4a8"/><stop offset="0.85" stop-color="#d6d49c"/><stop offset="1" stop-color="#b3b17c"/></linearGradient><linearGradient id="g127" gradientUnits="userSpaceOnUse" x1="156.7" y1="389.1" x2="172.8" y2="387.1"><stop offset="0" stop-color="#c09244"/><stop offset="0.18" stop-color="#ddb463"/><stop offset="0.42" stop-color="#efcb76"/><stop offset="0.6" stop-color="#efcb76"/><stop offset="0.85" stop-color="#ddb463"/><stop offset="1" stop-color="#c09244"/></linearGradient><linearGradient id="g128" gradientUnits="userSpaceOnUse" x1="174.4" y1="394.2" x2="190.5" y2="391.8"><stop offset="0" stop-color="#c09244"/><stop offset="0.18" stop-color="#ddb463"/><stop offset="0.42" stop-color="#efcb76"/><stop offset="0.6" stop-color="#efcb76"/><stop offset="0.85" stop-color="#ddb463"/><stop offset="1" stop-color="#c09244"/></linearGradient><linearGradient id="g129" gradientUnits="userSpaceOnUse" x1="238.9" y1="405.8" x2="255.5" y2="405.8"><stop offset="0" stop-color="#b3b17c"/><stop offset="0.18" stop-color="#d6d49c"/><stop offset="0.42" stop-color="#e6e4a8"/><stop offset="0.6" stop-color="#e6e4a8"/><stop offset="0.85" stop-color="#d6d49c"/><stop offset="1" stop-color="#b3b17c"/></linearGradient><linearGradient id="g130" gradientUnits="userSpaceOnUse" x1="353.6" y1="430.9" x2="370.6" y2="430.9"><stop offset="0" stop-color="#b3b17c"/><stop offset="0.18" stop-color="#d6d49c"/><stop offset="0.42" stop-color="#e6e4a8"/><stop offset="0.6" stop-color="#e6e4a8"/><stop offset="0.85" stop-color="#d6d49c"/><stop offset="1" stop-color="#b3b17c"/></linearGradient><linearGradient id="g131" gradientUnits="userSpaceOnUse" x1="369.2" y1="436.8" x2="386.4" y2="436.8"><stop offset="0" stop-color="#b3b17c"/><stop offset="0.18" stop-color="#d6d49c"/><stop offset="0.42" stop-color="#e6e4a8"/><stop offset="0.6" stop-color="#e6e4a8"/><stop offset="0.85" stop-color="#d6d49c"/><stop offset="1" stop-color="#b3b17c"/></linearGradient><linearGradient id="g132" gradientUnits="userSpaceOnUse" x1="361.2" y1="448.6" x2="378.6" y2="448.6"><stop offset="0" stop-color="#b3b17c"/><stop offset="0.18" stop-color="#d6d49c"/><stop offset="0.42" stop-color="#e6e4a8"/><stop offset="0.6" stop-color="#e6e4a8"/><stop offset="0.85" stop-color="#d6d49c"/><stop offset="1" stop-color="#b3b17c"/></linearGradient></defs>
<path d="M85.7,549.9 L85.7,548.3 L85.6,546.3 L85.5,543.9 L85.4,541.2 L85.3,538.2 L85.2,535.1 L85.1,531.9 L85.0,528.7 L84.9,525.5 L84.9,522.4 L85.0,519.5 L85.1,516.9 L85.3,514.3 L85.5,511.8 L85.7,509.3 L85.9,506.8 L86.2,504.3 L86.5,501.9 L86.8,499.5 L87.2,497.3 L87.7,495.1 L88.2,493.1 L88.8,491.1 L89.4,489.3 L90.1,487.7 L91.0,486.1 L91.9,484.7 L92.9,483.4 L93.9,482.1 L95.0,481.0 L96.1,479.9 L97.2,478.9 L98.2,478.0 L99.2,477.1 L100.2,476.3 L101.0,475.5 L101.8,474.8 L102.6,474.2 L103.4,473.6 L104.2,473.2 L104.9,472.7 L105.6,472.4 L106.2,472.1 L106.9,471.8 L107.4,471.6 L107.9,471.3 L108.3,471.1 L108.7,470.9" fill="none" stroke="#d4604c" stroke-width="3.2" stroke-linecap="round" stroke-linejoin="round" opacity="0.95" />
<path d="M108.7,470.9 L109.3,469.1 L110.0,466.8 L110.8,464.1 L111.8,461.1 L112.8,457.8 L113.9,454.3 L115.1,450.7 L116.3,447.1 L117.7,443.6 L119.2,440.2 L120.8,437.1 L122.5,434.2 L124.3,431.5 L126.2,428.9 L128.2,426.4 L130.4,423.8 L132.7,421.4 L135.0,419.0 L137.4,416.7 L139.9,414.5 L142.4,412.4 L144.9,410.3 L147.5,408.4 L150.0,406.7 L152.6,405.0 L155.4,403.3 L158.2,401.7 L161.1,400.2 L164.1,398.9 L167.1,397.6 L170.0,396.4 L172.9,395.4 L175.8,394.5 L178.5,393.8 L181.2,393.2 L183.7,392.9 L186.1,392.8 L188.5,392.9 L190.9,393.2 L193.2,393.8 L195.5,394.5 L197.7,395.3 L199.8,396.1 L201.7,397.1 L203.6,398.0 L205.3,398.9 L206.8,399.8 L208.2,400.5 L209.4,401.3 L210.4,402.1 L211.2,402.9 L211.8,403.8 L212.4,404.7 L212.8,405.6 L213.1,406.5 L213.4,407.3 L213.6,408.0 L213.9,408.7 L214.1,409.3 L214.3,409.7" fill="none" stroke="#d4604c" stroke-width="3.2" stroke-linecap="round" stroke-linejoin="round" opacity="0.95" />
<path d="M214.3,409.7 L214.9,408.3 L215.5,406.4 L216.2,404.2 L217.0,401.8 L217.9,399.1 L218.9,396.3 L220.0,393.5 L221.1,390.6 L222.4,387.8 L223.7,385.2 L225.1,382.8 L226.6,380.6 L228.2,378.7 L230.0,376.7 L232.0,374.8 L234.2,372.9 L236.4,371.1 L238.6,369.4 L240.9,367.9 L243.1,366.4 L245.3,365.1 L247.4,364.0 L249.3,363.0 L251.1,362.3 L252.7,361.7 L254.3,361.5 L255.8,361.4 L257.3,361.5 L258.7,361.8 L260.1,362.2 L261.3,362.6 L262.5,363.2 L263.6,363.7 L264.6,364.3 L265.6,364.8 L266.4,365.3 L267.1,365.8 L267.6,366.4 L268.1,367.1 L268.4,367.8 L268.7,368.6 L268.9,369.3 L269.0,370.1 L269.1,370.8 L269.2,371.5 L269.2,372.1 L269.3,372.6 L269.4,373.0" fill="none" stroke="#d4604c" stroke-width="3.2" stroke-linecap="round" stroke-linejoin="round" opacity="0.95" />
<path d="M269.4,373.0 L269.6,371.5 L269.7,369.6 L269.8,367.4 L269.9,364.9 L270.1,362.2 L270.3,359.4 L270.5,356.4 L270.8,353.5 L271.2,350.5 L271.7,347.6 L272.3,344.9 L273.1,342.4 L274.0,339.9 L274.9,337.5 L275.9,335.1 L277.0,332.7 L278.2,330.4 L279.5,328.0 L280.9,325.7 L282.4,323.5 L284.0,321.2 L285.6,319.0 L287.4,316.9 L289.3,314.8 L291.4,312.7 L293.8,310.6 L296.5,308.5 L299.3,306.4 L302.2,304.4 L305.1,302.4 L308.0,300.5 L310.8,298.7 L313.5,297.0 L315.9,295.4 L318.1,294.0 L319.9,292.8 L321.5,291.7 L322.8,290.8 L324.0,290.1 L324.9,289.5 L325.8,289.0 L326.5,288.6 L327.0,288.3 L327.5,288.1 L328.0,287.8 L328.4,287.7 L328.8,287.5 L329.1,287.2" fill="none" stroke="#d4604c" stroke-width="3.2" stroke-linecap="round" stroke-linejoin="round" opacity="0.95" />
<path d="M604.4,38.3 L604.2,37.3 L604.1,36.1 L603.9,34.7 L603.7,33.1 L603.5,31.3 L603.2,29.5 L603.0,27.6 L602.7,25.6 L602.4,23.7 L602.0,21.8 L601.7,20.0 L601.3,18.4 L600.9,16.7 L600.4,15.0 L599.9,13.2 L599.3,11.5 L598.7,9.7 L598.1,7.9 L597.5,6.3 L596.9,4.7 L596.4,3.3 L595.9,2.0 L595.5,0.9 L595.2,0.0" fill="none" stroke="#d4604c" stroke-width="2.4" stroke-linecap="round" stroke-linejoin="round" opacity="0.95" />
<path d="M604.4,38.3 L604.8,37.2 L605.3,35.8 L605.9,34.1 L606.5,32.1 L607.2,30.1 L608.0,27.9 L608.8,25.8 L609.7,23.6 L610.6,21.6 L611.6,19.8 L612.6,18.2 L613.6,16.8 L614.6,15.7 L615.7,14.7 L616.9,13.8 L618.1,13.0 L619.4,12.3 L620.6,11.7 L622.0,11.2 L623.3,10.8 L624.7,10.6 L626.1,10.5 L627.5,10.5 L628.9,10.7 L630.3,11.1 L631.9,11.6 L633.5,12.2 L635.1,13.0 L636.8,13.9 L638.4,14.9 L640.1,16.1 L641.7,17.3 L643.2,18.6 L644.7,20.0 L646.0,21.5 L647.2,23.0 L648.4,24.6 L649.4,26.3 L650.3,28.2 L651.2,30.2 L652.0,32.2 L652.8,34.3 L653.5,36.5 L654.2,38.7 L654.8,40.9 L655.4,43.1 L655.9,45.3 L656.4,47.5 L656.9,49.7 L657.3,52.0 L657.7,54.5 L658.0,57.0 L658.3,59.5 L658.5,62.0 L658.7,64.4 L658.9,66.7 L659.1,68.8 L659.2,70.6 L659.4,72.2 L659.5,73.5" fill="none" stroke="#d4604c" stroke-width="2.4" stroke-linecap="round" stroke-linejoin="round" opacity="0.95" />
<path d="M554.8,0.0 L554.9,0.7 L555.0,1.7 L555.2,2.8 L555.4,4.1 L555.6,5.5 L555.9,6.9 L556.1,8.3 L556.3,9.7 L556.5,11.0 L556.7,12.1 L556.8,13.1 L556.9,13.8" fill="none" stroke="#d4604c" stroke-width="2.4" stroke-linecap="round" stroke-linejoin="round" opacity="0.95" />
<path d="M563.0,0.0 L562.8,0.7 L562.5,1.7 L562.1,2.8 L561.7,4.1 L561.2,5.5 L560.8,6.9 L560.3,8.3 L559.8,9.7 L559.4,11.0 L559.0,12.1 L558.7,13.1 L558.5,13.8" fill="none" stroke="#d4604c" stroke-width="2.4" stroke-linecap="round" stroke-linejoin="round" opacity="0.95" />
<path d="M659.5,73.5 L660.1,72.9 L660.8,72.0 L661.5,71.0 L662.4,69.9 L663.4,68.7 L664.5,67.4 L665.6,66.1 L666.7,64.9 L668.0,63.8 L669.2,62.7 L670.5,61.9 L671.7,61.2 L673.1,60.7 L674.5,60.3 L676.0,59.9 L677.5,59.7 L679.1,59.5 L680.7,59.4 L682.4,59.3 L684.0,59.4 L685.6,59.6 L687.2,59.8 L688.7,60.2 L690.1,60.6 L691.5,61.3 L693.0,62.1 L694.5,63.2 L696.0,64.4 L697.5,65.7 L698.9,67.0 L700.3,68.4 L701.6,69.6 L702.7,70.9 L703.8,71.9 L704.7,72.8 L705.4,73.5" fill="none" stroke="#d4604c" stroke-width="2.4" stroke-linecap="round" stroke-linejoin="round" opacity="0.95" />
<path d="M705.4,80.2 L705.7,80.6 L706.2,81.1 L706.8,81.6 L707.4,82.2 L708.1,82.8 L708.8,83.5 L709.4,84.3 L710.1,85.1 L710.6,86.0 L711.1,86.9 L711.4,87.8 L711.5,88.8 L711.5,89.9 L711.3,91.1 L711.0,92.5 L710.6,94.0 L710.2,95.5 L709.6,97.0 L709.1,98.5 L708.5,99.9 L708.0,101.2 L707.6,102.4 L707.2,103.3 L706.9,104.1" fill="none" stroke="#d4604c" stroke-width="2.4" stroke-linecap="round" stroke-linejoin="round" opacity="0.95" />
<path d="M705.4,104.1 L705.8,103.3 L706.2,102.3 L706.7,101.1 L707.2,99.8 L707.8,98.3 L708.5,96.8 L709.2,95.2 L709.9,93.7 L710.7,92.3 L711.4,91.0 L712.2,89.8 L713.1,88.8 L713.9,87.9 L714.9,87.1 L715.8,86.2 L716.9,85.4 L717.9,84.7 L719.0,84.1 L720.1,83.5 L721.2,83.1 L722.3,82.9 L723.3,82.8 L724.3,82.9 L725.3,83.3 L726.3,83.8 L727.3,84.5 L728.3,85.3 L729.3,86.3 L730.3,87.4 L731.2,88.7 L732.2,90.1 L733.1,91.7 L733.9,93.4 L734.7,95.3 L735.4,97.3 L736.0,99.5 L736.6,102.0 L737.0,105.1 L737.4,108.4 L737.7,112.0 L738.0,115.8 L738.2,119.7 L738.4,123.4 L738.6,127.0 L738.7,130.4 L738.9,133.4 L739.0,135.9 L739.1,137.8" fill="none" stroke="#d4604c" stroke-width="2.4" stroke-linecap="round" stroke-linejoin="round" opacity="0.95" />
<path d="M757.5,116.3 L757.9,115.1 L758.5,113.6 L759.2,111.8 L759.9,109.7 L760.7,107.5 L761.6,105.2 L762.5,102.8 L763.4,100.4 L764.3,98.0 L765.1,95.8 L765.9,93.7 L766.7,91.9 L767.4,90.1 L768.1,88.4 L768.8,86.7 L769.5,85.0 L770.2,83.4 L770.9,81.9 L771.6,80.4 L772.2,79.1 L772.7,77.9 L773.2,76.8 L773.6,75.8 L774.0,75.0" fill="none" stroke="#d4604c" stroke-width="2.4" stroke-linecap="round" stroke-linejoin="round" opacity="0.95" />
<path d="M736.0,142.4 L737.0,141.4 L738.2,140.0 L739.6,138.3 L741.3,136.4 L743.0,134.3 L744.8,132.2 L746.7,130.3 L748.5,128.5 L750.2,127.0 L751.8,126.0 L753.2,125.4 L754.4,125.5 L755.4,126.3 L756.3,127.5 L757.1,129.2 L757.9,131.3 L758.5,133.7 L759.1,136.3 L759.6,139.1 L760.0,142.0 L760.3,144.9 L760.4,147.8 L760.5,150.5 L760.5,153.1 L760.3,155.6 L760.0,158.4 L759.4,161.2 L758.7,164.2 L757.9,167.2 L757.1,170.1 L756.2,173.0 L755.4,175.7 L754.6,178.1 L753.9,180.3 L753.3,182.2 L752.9,183.7" fill="none" stroke="#d4604c" stroke-width="2.4" stroke-linecap="round" stroke-linejoin="round" opacity="0.95" />
<path d="M687.0,183.7 L687.9,182.5 L688.9,181.0 L690.0,179.2 L691.2,177.1 L692.6,174.9 L694.1,172.5 L695.7,170.2 L697.5,167.9 L699.3,165.8 L701.3,163.8 L703.3,162.1 L705.4,160.7 L707.7,159.6 L710.1,158.6 L712.7,157.7 L715.5,156.9 L718.3,156.2 L721.2,155.7 L724.2,155.3 L727.2,155.0 L730.2,154.9 L733.2,155.0 L736.2,155.2 L739.1,155.5 L742.1,156.2 L745.2,157.1 L748.6,158.4 L751.9,159.9 L755.3,161.5 L758.7,163.2 L761.9,164.9 L764.9,166.5 L767.7,168.1 L770.2,169.5 L772.3,170.6 L774.0,171.5" fill="none" stroke="#d4604c" stroke-width="2.4" stroke-linecap="round" stroke-linejoin="round" opacity="0.95" />
<path d="M688.6,183.7 L690.2,182.4 L692.2,180.8 L694.6,178.7 L697.2,176.4 L700.0,174.0 L703.0,171.5 L706.3,168.9 L709.6,166.5 L713.1,164.2 L716.6,162.2 L720.2,160.5 L723.8,159.2 L727.6,158.4 L731.9,157.8 L736.5,157.5 L741.3,157.4 L746.2,157.5 L751.1,157.7 L755.9,158.0 L760.4,158.3 L764.6,158.6 L768.4,158.9 L771.5,159.1 L774.0,159.2" fill="none" stroke="#d4604c" stroke-width="2.4" stroke-linecap="round" stroke-linejoin="round" opacity="0.95" />
<path d="M739.1,137.8 L740.1,135.7 L741.3,133.1 L742.8,129.8 L744.4,126.2 L746.2,122.3 L748.1,118.3 L750.0,114.2 L752.0,110.2 L753.9,106.5 L755.7,103.1 L757.4,100.2 L759.0,98.0 L760.5,96.3 L762.0,94.9 L763.4,93.9 L764.9,93.2 L766.4,92.7 L767.7,92.4 L769.1,92.3 L770.3,92.2 L771.4,92.2 L772.4,92.1 L773.3,92.0 L774.0,91.9" fill="none" stroke="#d4604c" stroke-width="2.4" stroke-linecap="round" stroke-linejoin="round" opacity="0.95" />
<text x="500.9" y="13.5" font-family='"Liberation Mono",monospace' font-size="7.4" font-weight="400" fill="#1e1e1e" letter-spacing="0" opacity="0.88">El Cerrito del Norte (DELN)</text>
<text x="553.9" y="37.4" font-family='"Liberation Mono",monospace' font-size="7.4" font-weight="400" fill="#1e1e1e" letter-spacing="0" opacity="0.88">El Cerrito Plaza (PLZA)</text>
<text x="607.4" y="72.6" font-family='"Liberation Mono",monospace' font-size="7.4" font-weight="400" fill="#1e1e1e" letter-spacing="0" opacity="0.88">North Berkeley (NBRK)</text>
<text x="638.0" y="78.7" font-family='"Liberation Mono",monospace' font-size="7.4" font-weight="400" fill="#1e1e1e" letter-spacing="0" opacity="0.88">Downtown Berkeley (DBRK)</text>
<text x="676.3" y="101.6" font-family='"Liberation Mono",monospace' font-size="7.4" font-weight="400" fill="#1e1e1e" letter-spacing="0" opacity="0.88">Ashby (ASHB)</text>
<text x="716.1" y="113.9" font-family='"Liberation Mono",monospace' font-size="7.4" font-weight="400" fill="#1e1e1e" letter-spacing="0" opacity="0.88">Rockridge (ROCK)</text>
<text x="693.2" y="140.2" font-family='"Liberation Mono",monospace' font-size="7.6" font-weight="400" fill="#1e1e1e" letter-spacing="0" opacity="0.88">MacArthur (MCAR)</text>
<text x="632.0" y="183.1" font-family='"Liberation Mono",monospace' font-size="7.6" font-weight="400" fill="#1e1e1e" letter-spacing="0" opacity="0.88">West Oakland (WOAK)</text>
<text x="650.3" y="185.8" font-family='"Liberation Mono",monospace' font-size="7.6" font-weight="400" fill="#1e1e1e" letter-spacing="0" opacity="0.88">12th St. Oakland City Center</text>
<text x="690.0" y="176.7" font-family='"Liberation Mono",monospace' font-size="7.6" font-weight="400" fill="#1e1e1e" letter-spacing="0" opacity="0.88">19th St. Oakland</text>
<text x="720.7" y="196.6" font-family='"Liberation Mono",monospace' font-size="7.6" font-weight="400" fill="#1e1e1e" letter-spacing="0" opacity="0.88">Lake Merritt</text>
<text x="210.0" y="367.7" font-family='"Liberation Mono",monospace' font-size="12.4" font-weight="400" fill="#1e1e1e" letter-spacing="0" opacity="0.88">Glen Park (GLEN)</text>
<text x="143.0" y="405.7" font-family='"Liberation Mono",monospace' font-size="13" font-weight="400" fill="#1e1e1e" letter-spacing="0" opacity="0.88">Balboa Park (BALB)</text>
<text x="43.6" y="469.5" font-family='"Liberation Mono",monospace' font-size="14" font-weight="400" fill="#1e1e1e" letter-spacing="0" opacity="0.88">Daly City (DALY)</text>
<text x="379.7" y="307.3" font-family='"Liberation Mono",monospace' font-size="11.5" font-weight="400" fill="#1e1e1e" letter-spacing="0" opacity="0.88">24TH)</text>
<text x="254.0" y="272.5" font-family='"Liberation Mono",monospace' font-size="11" font-weight="400" fill="#1e1e1e" letter-spacing="0" opacity="0.88">16</text>
<text x="253.0" y="306.0" font-family='"Liberation Mono",monospace' font-size="11" font-weight="400" fill="#1e1e1e" letter-spacing="0" opacity="0.88">24</text>
<text x="422.2" y="207.3" font-family='"Liberation Mono",monospace' font-size="9.5" font-weight="400" fill="#1e1e1e" letter-spacing="0" opacity="0.88">(EMBR)</text>
<text x="426.8" y="215.2" font-family='"Liberation Mono",monospace' font-size="9.5" font-weight="400" fill="#1e1e1e" letter-spacing="0" opacity="0.88">MONT)</text>
<text x="425.0" y="237.3" font-family='"Liberation Mono",monospace' font-size="9.5" font-weight="400" fill="#1e1e1e" letter-spacing="0" opacity="0.88">C)</text>
<g><circle cx="18" cy="530.3" r="9.6" fill="#fff" stroke="#a3a3a3" stroke-width="2.2"/><path d="M14,535 L14,529 A5 5 0 1 1 19,534 Z" fill="#a3a3a3"/><path d="M18.600000000000023,526.6 L19.30000000000001,528.8 L21.399999999999977,529.4 L19.30000000000001,530 L18.600000000000023,532.2 L17.899999999999977,530 L15.800000000000011,529.4 L17.899999999999977,528.8 Z" fill="#fff"/><text x="32" y="538" font-family='"Liberation Sans",sans-serif' font-size="17.5" font-weight="700" fill="#a3a3a3" stroke="#a3a3a3" stroke-width="3.4" stroke-linejoin="round" letter-spacing="0.4">mapbox</text><text x="32" y="538" font-family='"Liberation Sans",sans-serif' font-size="17.5" font-weight="700" fill="#fff" letter-spacing="0.4">mapbox</text></g>
<rect x="473" y="528" width="301" height="22" fill="#e6eaea" opacity="0.95"/>
<text x="479" y="544" font-family='"Liberation Sans",sans-serif' font-size="13.4" fill="#333">© Mapbox © OpenStreetMap</text>
<text x="659.5" y="544" font-family='"Liberation Sans",sans-serif' font-size="13" font-weight="700" fill="#333">Improve this map</text>
</svg>
<div class="b" style="left:34px;top:26px;width:1196px;height:951px;border:1px solid rgba(255,255,255,0.9);border-radius:10px"></div>
</body></html>
